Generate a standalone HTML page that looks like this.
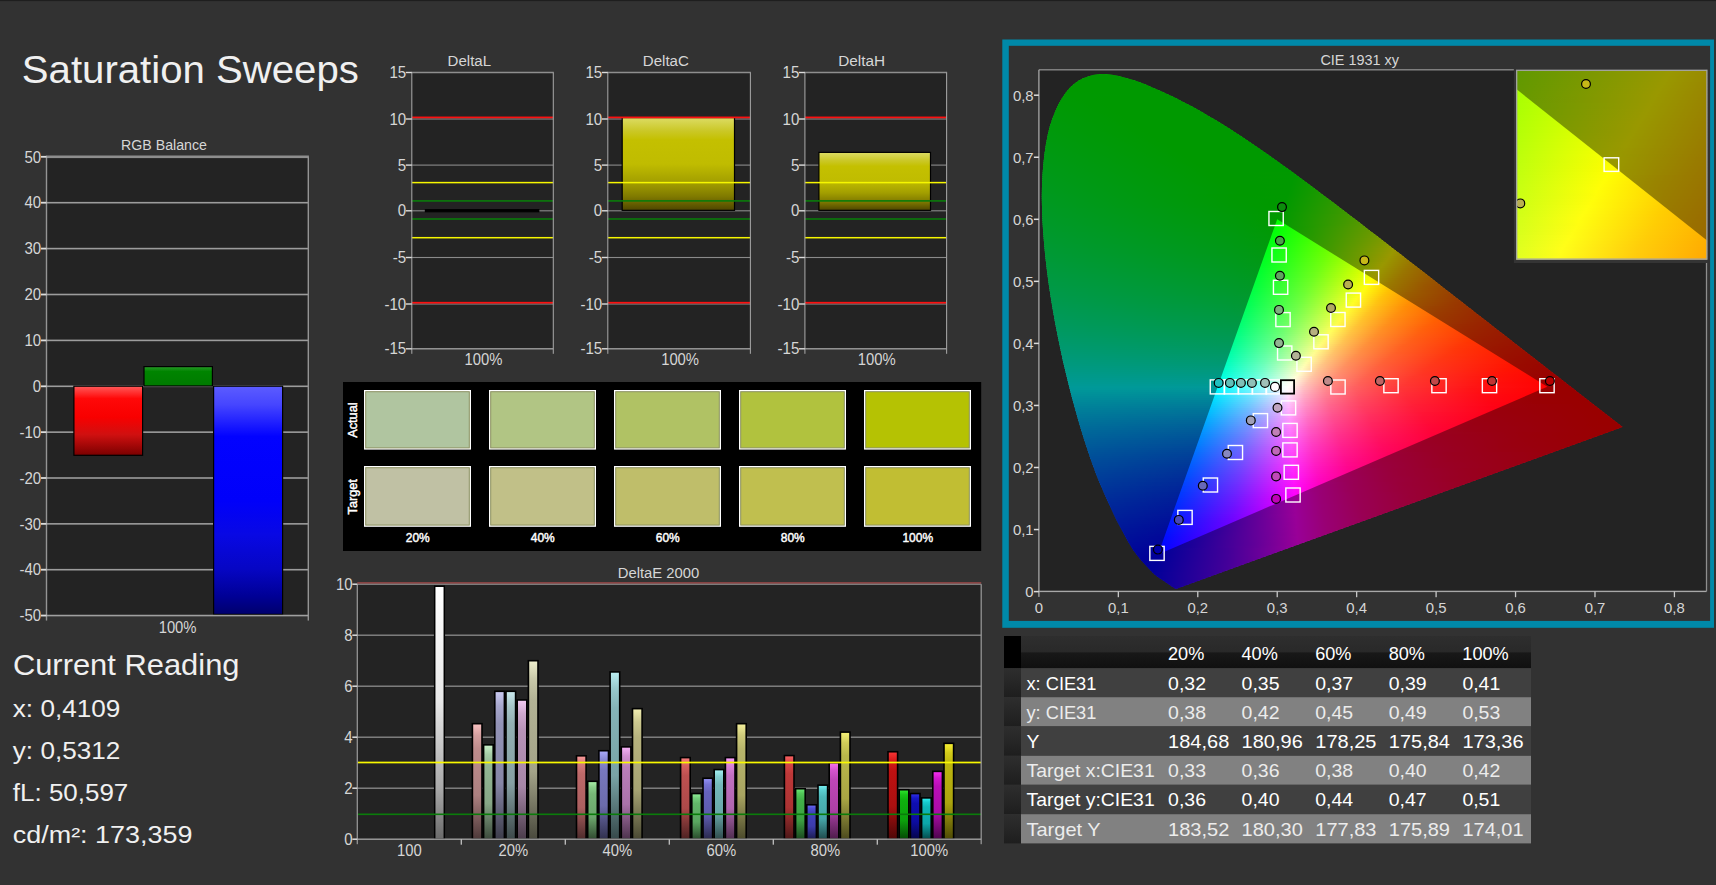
<!DOCTYPE html>
<html><head><meta charset="utf-8"><title>Saturation Sweeps</title>
<style>html,body{margin:0;padding:0;background:#323232;overflow:hidden}svg{display:block}text{font-family:"Liberation Sans",sans-serif}</style>
</head><body>
<svg width="1716" height="885" viewBox="0 0 1716 885">
<defs>
<linearGradient id="gR" x1="0" y1="0" x2="0" y2="1"><stop offset="0" stop-color="#ff5a5a"/><stop offset="0.18" stop-color="#ff0808"/><stop offset="0.45" stop-color="#f80000"/><stop offset="0.7" stop-color="#d01010"/><stop offset="1" stop-color="#7a0000"/></linearGradient>
<linearGradient id="gG" x1="0" y1="0" x2="0" y2="1"><stop offset="0" stop-color="#2a9a2a"/><stop offset="0.25" stop-color="#008400"/><stop offset="1" stop-color="#007a00"/></linearGradient>
<linearGradient id="gB" x1="0" y1="0" x2="0" y2="1"><stop offset="0" stop-color="#5c5cff"/><stop offset="0.08" stop-color="#4646ff"/><stop offset="0.22" stop-color="#0202ff"/><stop offset="0.5" stop-color="#0000fa"/><stop offset="0.65" stop-color="#0808e4"/><stop offset="0.8" stop-color="#0606c4"/><stop offset="0.92" stop-color="#000096"/><stop offset="1" stop-color="#00006c"/></linearGradient>
<linearGradient id="gY" x1="0" y1="0" x2="0" y2="1"><stop offset="0" stop-color="#dcdc64"/><stop offset="0.14" stop-color="#cbc828"/><stop offset="0.24" stop-color="#c4c000"/><stop offset="0.5" stop-color="#c0bc00"/><stop offset="0.7" stop-color="#a29e00"/><stop offset="0.85" stop-color="#807a00"/><stop offset="1" stop-color="#4e4600"/></linearGradient>
<linearGradient id="gW" x1="0" y1="0" x2="0" y2="1"><stop offset="0" stop-color="#ffffff"/><stop offset="0.45" stop-color="#e8e8e8"/><stop offset="0.8" stop-color="#a8a8a8"/><stop offset="1" stop-color="#6a6a6a"/></linearGradient>
<linearGradient id="g20R" x1="0" y1="0" x2="0" y2="1"><stop offset="0" stop-color="#fac2c2"/><stop offset="0.1" stop-color="#d5a0a0"/><stop offset="0.22" stop-color="#be8c8c"/><stop offset="0.62" stop-color="#ac8080"/><stop offset="1" stop-color="#4d3939"/></linearGradient>
<linearGradient id="g20G" x1="0" y1="0" x2="0" y2="1"><stop offset="0" stop-color="#caf2ca"/><stop offset="0.1" stop-color="#a7cda7"/><stop offset="0.22" stop-color="#93b793"/><stop offset="0.62" stop-color="#86a686"/><stop offset="1" stop-color="#3c4a3c"/></linearGradient>
<linearGradient id="g20B" x1="0" y1="0" x2="0" y2="1"><stop offset="0" stop-color="#cacaf2"/><stop offset="0.1" stop-color="#a7a7cd"/><stop offset="0.22" stop-color="#9393b7"/><stop offset="0.62" stop-color="#8686a6"/><stop offset="1" stop-color="#3c3c4a"/></linearGradient>
<linearGradient id="g20C" x1="0" y1="0" x2="0" y2="1"><stop offset="0" stop-color="#caeaee"/><stop offset="0.1" stop-color="#a7c6c9"/><stop offset="0.22" stop-color="#93b0b3"/><stop offset="0.62" stop-color="#86a0a3"/><stop offset="1" stop-color="#3c4849"/></linearGradient>
<linearGradient id="g20M" x1="0" y1="0" x2="0" y2="1"><stop offset="0" stop-color="#f2caf2"/><stop offset="0.1" stop-color="#cda7cd"/><stop offset="0.22" stop-color="#b793b7"/><stop offset="0.62" stop-color="#a686a6"/><stop offset="1" stop-color="#4a3c4a"/></linearGradient>
<linearGradient id="g20Y" x1="0" y1="0" x2="0" y2="1"><stop offset="0" stop-color="#eeeecc"/><stop offset="0.1" stop-color="#c9c9a9"/><stop offset="0.22" stop-color="#b3b395"/><stop offset="0.62" stop-color="#a3a388"/><stop offset="1" stop-color="#49493d"/></linearGradient>
<linearGradient id="g40R" x1="0" y1="0" x2="0" y2="1"><stop offset="0" stop-color="#fa9a9a"/><stop offset="0.1" stop-color="#d57a7a"/><stop offset="0.22" stop-color="#be6969"/><stop offset="0.62" stop-color="#ac6060"/><stop offset="1" stop-color="#4d2b2b"/></linearGradient>
<linearGradient id="g40G" x1="0" y1="0" x2="0" y2="1"><stop offset="0" stop-color="#aaf2aa"/><stop offset="0.1" stop-color="#89cd89"/><stop offset="0.22" stop-color="#77b777"/><stop offset="0.62" stop-color="#6ca66c"/><stop offset="1" stop-color="#304a30"/></linearGradient>
<linearGradient id="g40B" x1="0" y1="0" x2="0" y2="1"><stop offset="0" stop-color="#aaaafa"/><stop offset="0.1" stop-color="#8989d5"/><stop offset="0.22" stop-color="#7777be"/><stop offset="0.62" stop-color="#6c6cac"/><stop offset="1" stop-color="#30304d"/></linearGradient>
<linearGradient id="g40C" x1="0" y1="0" x2="0" y2="1"><stop offset="0" stop-color="#baeef2"/><stop offset="0.1" stop-color="#98c9cd"/><stop offset="0.22" stop-color="#85b3b7"/><stop offset="0.62" stop-color="#79a3a6"/><stop offset="1" stop-color="#36494a"/></linearGradient>
<linearGradient id="g40M" x1="0" y1="0" x2="0" y2="1"><stop offset="0" stop-color="#f6b2f6"/><stop offset="0.1" stop-color="#d190d1"/><stop offset="0.22" stop-color="#ba7eba"/><stop offset="0.62" stop-color="#a973a9"/><stop offset="1" stop-color="#4c334c"/></linearGradient>
<linearGradient id="g40Y" x1="0" y1="0" x2="0" y2="1"><stop offset="0" stop-color="#f2eeb2"/><stop offset="0.1" stop-color="#cdc990"/><stop offset="0.22" stop-color="#b7b37e"/><stop offset="0.62" stop-color="#a6a373"/><stop offset="1" stop-color="#4a4933"/></linearGradient>
<linearGradient id="g60R" x1="0" y1="0" x2="0" y2="1"><stop offset="0" stop-color="#fa7e7e"/><stop offset="0.1" stop-color="#d55f5f"/><stop offset="0.22" stop-color="#be5050"/><stop offset="0.62" stop-color="#ac4949"/><stop offset="1" stop-color="#4d2121"/></linearGradient>
<linearGradient id="g60G" x1="0" y1="0" x2="0" y2="1"><stop offset="0" stop-color="#92f29a"/><stop offset="0.1" stop-color="#72cd7a"/><stop offset="0.22" stop-color="#62b769"/><stop offset="0.62" stop-color="#59a660"/><stop offset="1" stop-color="#284a2b"/></linearGradient>
<linearGradient id="g60B" x1="0" y1="0" x2="0" y2="1"><stop offset="0" stop-color="#9694fa"/><stop offset="0.1" stop-color="#7674d5"/><stop offset="0.22" stop-color="#6664be"/><stop offset="0.62" stop-color="#5c5bac"/><stop offset="1" stop-color="#29294d"/></linearGradient>
<linearGradient id="g60C" x1="0" y1="0" x2="0" y2="1"><stop offset="0" stop-color="#a6f4f6"/><stop offset="0.1" stop-color="#85cfd1"/><stop offset="0.22" stop-color="#74b8ba"/><stop offset="0.62" stop-color="#69a8a9"/><stop offset="1" stop-color="#2f4b4c"/></linearGradient>
<linearGradient id="g60M" x1="0" y1="0" x2="0" y2="1"><stop offset="0" stop-color="#fea2fe"/><stop offset="0.1" stop-color="#d981d9"/><stop offset="0.22" stop-color="#c170c1"/><stop offset="0.62" stop-color="#b066b0"/><stop offset="1" stop-color="#4f2e4f"/></linearGradient>
<linearGradient id="g60Y" x1="0" y1="0" x2="0" y2="1"><stop offset="0" stop-color="#f4f09c"/><stop offset="0.1" stop-color="#cfcb7b"/><stop offset="0.22" stop-color="#b8b56b"/><stop offset="0.62" stop-color="#a8a461"/><stop offset="1" stop-color="#4b4a2b"/></linearGradient>
<linearGradient id="g80R" x1="0" y1="0" x2="0" y2="1"><stop offset="0" stop-color="#fa6262"/><stop offset="0.1" stop-color="#d54444"/><stop offset="0.22" stop-color="#be3838"/><stop offset="0.62" stop-color="#ac3333"/><stop offset="1" stop-color="#4d1717"/></linearGradient>
<linearGradient id="g80G" x1="0" y1="0" x2="0" y2="1"><stop offset="0" stop-color="#6eea76"/><stop offset="0.1" stop-color="#50c657"/><stop offset="0.22" stop-color="#42b049"/><stop offset="0.62" stop-color="#3ca043"/><stop offset="1" stop-color="#1b481e"/></linearGradient>
<linearGradient id="g80B" x1="0" y1="0" x2="0" y2="1"><stop offset="0" stop-color="#6e6efa"/><stop offset="0.1" stop-color="#5050d5"/><stop offset="0.22" stop-color="#4242be"/><stop offset="0.62" stop-color="#3c3cac"/><stop offset="1" stop-color="#1b1b4d"/></linearGradient>
<linearGradient id="g80C" x1="0" y1="0" x2="0" y2="1"><stop offset="0" stop-color="#7af2f4"/><stop offset="0.1" stop-color="#5bcdcf"/><stop offset="0.22" stop-color="#4db7b8"/><stop offset="0.62" stop-color="#46a6a8"/><stop offset="1" stop-color="#1f4a4b"/></linearGradient>
<linearGradient id="g80M" x1="0" y1="0" x2="0" y2="1"><stop offset="0" stop-color="#fa72f2"/><stop offset="0.1" stop-color="#d554cd"/><stop offset="0.22" stop-color="#be46b7"/><stop offset="0.62" stop-color="#ac40a6"/><stop offset="1" stop-color="#4d1c4a"/></linearGradient>
<linearGradient id="g80Y" x1="0" y1="0" x2="0" y2="1"><stop offset="0" stop-color="#f6f278"/><stop offset="0.1" stop-color="#d1cd59"/><stop offset="0.22" stop-color="#bab74b"/><stop offset="0.62" stop-color="#a9a644"/><stop offset="1" stop-color="#4c4a1e"/></linearGradient>
<linearGradient id="g100R" x1="0" y1="0" x2="0" y2="1"><stop offset="0" stop-color="#fa3636"/><stop offset="0.1" stop-color="#d51b1b"/><stop offset="0.22" stop-color="#be1111"/><stop offset="0.62" stop-color="#ac1010"/><stop offset="1" stop-color="#4d0707"/></linearGradient>
<linearGradient id="g100G" x1="0" y1="0" x2="0" y2="1"><stop offset="0" stop-color="#32ea32"/><stop offset="0.1" stop-color="#17c617"/><stop offset="0.22" stop-color="#0eb00e"/><stop offset="0.62" stop-color="#0ca00c"/><stop offset="1" stop-color="#054805"/></linearGradient>
<linearGradient id="g100B" x1="0" y1="0" x2="0" y2="1"><stop offset="0" stop-color="#3232ea"/><stop offset="0.1" stop-color="#1717c6"/><stop offset="0.22" stop-color="#0e0eb0"/><stop offset="0.62" stop-color="#0c0ca0"/><stop offset="1" stop-color="#050548"/></linearGradient>
<linearGradient id="g100C" x1="0" y1="0" x2="0" y2="1"><stop offset="0" stop-color="#32f2f4"/><stop offset="0.1" stop-color="#17cdcf"/><stop offset="0.22" stop-color="#0eb7b8"/><stop offset="0.62" stop-color="#0ca6a8"/><stop offset="1" stop-color="#054a4b"/></linearGradient>
<linearGradient id="g100M" x1="0" y1="0" x2="0" y2="1"><stop offset="0" stop-color="#f632f2"/><stop offset="0.1" stop-color="#d117cd"/><stop offset="0.22" stop-color="#ba0eb7"/><stop offset="0.62" stop-color="#a90ca6"/><stop offset="1" stop-color="#4c054a"/></linearGradient>
<linearGradient id="g100Y" x1="0" y1="0" x2="0" y2="1"><stop offset="0" stop-color="#f8f034"/><stop offset="0.1" stop-color="#d3cb19"/><stop offset="0.22" stop-color="#bcb50f"/><stop offset="0.62" stop-color="#aba40e"/><stop offset="1" stop-color="#4d4a06"/></linearGradient>
<linearGradient id="gH" x1="0" y1="0" x2="0" y2="1"><stop offset="0" stop-color="#2e2e2e"/><stop offset="0.5" stop-color="#292929"/><stop offset="0.52" stop-color="#181818"/><stop offset="1" stop-color="#101010"/></linearGradient>
<linearGradient id="gL" x1="0" y1="0" x2="0" y2="1"><stop offset="0" stop-color="#2e2e2e"/><stop offset="1" stop-color="#1e1e1e"/></linearGradient>
<clipPath id="cl"><path d="M1177.2 588.5 L1177.1 588.5 L1177.1 588.5 L1177.0 588.6 L1176.9 588.6 L1176.7 588.6 L1176.6 588.6 L1176.4 588.6 L1176.1 588.6 L1175.9 588.6 L1175.6 588.6 L1175.3 588.5 L1175.1 588.4 L1174.8 588.3 L1174.5 588.2 L1174.2 588.0 L1173.9 587.8 L1173.5 587.6 L1173.1 587.3 L1172.6 587.0 L1172.1 586.7 L1171.5 586.3 L1170.9 585.8 L1170.3 585.4 L1169.5 584.8 L1168.7 584.3 L1167.8 583.7 L1166.8 583.0 L1165.7 582.3 L1164.6 581.5 L1163.3 580.6 L1161.9 579.7 L1160.5 578.7 L1158.9 577.7 L1157.2 576.5 L1155.3 575.0 L1153.3 573.2 L1150.9 570.8 L1148.3 568.1 L1145.5 565.1 L1142.7 562.0 L1139.9 558.8 L1137.5 555.7 L1135.4 552.9 L1133.4 550.2 L1131.6 547.4 L1129.9 544.5 L1128.0 541.4 L1126.0 537.7 L1123.8 533.8 L1121.5 529.5 L1119.1 525.0 L1116.6 520.2 L1114.1 514.9 L1111.4 509.3 L1108.6 503.2 L1105.7 496.8 L1102.7 490.0 L1099.6 482.8 L1096.5 475.2 L1093.5 467.1 L1090.4 458.4 L1087.3 449.3 L1084.2 439.7 L1081.1 429.7 L1078.0 419.3 L1075.0 408.6 L1071.9 397.3 L1068.9 385.5 L1065.9 373.3 L1062.9 360.8 L1060.2 348.1 L1057.6 335.5 L1055.1 322.7 L1052.8 309.7 L1050.6 296.5 L1048.6 283.3 L1046.9 270.2 L1045.4 257.5 L1044.2 245.0 L1043.2 232.5 L1042.4 220.2 L1042.0 208.2 L1041.8 196.5 L1042.0 185.3 L1042.5 174.4 L1043.4 163.8 L1044.5 153.6 L1046.0 143.8 L1047.8 134.6 L1049.9 126.1 L1052.5 118.2 L1055.4 110.9 L1058.6 104.1 L1062.1 97.9 L1065.9 92.5 L1069.8 87.8 L1074.0 83.9 L1078.4 80.7 L1083.1 78.3 L1088.0 76.5 L1092.9 75.1 L1097.9 74.2 L1103.0 73.9 L1108.2 74.2 L1113.5 75.0 L1118.9 76.1 L1124.3 77.5 L1129.6 78.9 L1135.0 80.6 L1140.4 82.5 L1145.8 84.6 L1151.2 86.9 L1156.5 89.2 L1161.8 91.5 L1167.0 93.9 L1172.1 96.3 L1177.2 98.8 L1182.2 101.4 L1187.2 104.0 L1192.1 106.6 L1197.1 109.3 L1202.0 112.1 L1206.8 114.9 L1211.6 117.7 L1216.5 120.6 L1221.3 123.6 L1226.1 126.5 L1230.9 129.6 L1235.7 132.7 L1240.5 135.8 L1245.3 139.0 L1250.1 142.2 L1254.8 145.4 L1259.6 148.7 L1264.3 152.0 L1269.0 155.3 L1273.8 158.7 L1278.5 162.0 L1283.2 165.4 L1287.9 168.8 L1292.7 172.3 L1297.4 175.8 L1302.1 179.3 L1306.9 182.8 L1311.6 186.3 L1316.3 189.8 L1321.1 193.4 L1325.8 196.9 L1330.6 200.5 L1335.3 204.1 L1340.0 207.7 L1344.7 211.3 L1349.5 214.9 L1354.2 218.5 L1358.9 222.1 L1363.6 225.8 L1368.3 229.4 L1373.0 233.0 L1377.7 236.6 L1382.4 240.2 L1387.0 243.8 L1391.7 247.4 L1396.3 251.0 L1401.0 254.6 L1405.6 258.2 L1410.1 261.7 L1414.7 265.3 L1419.3 268.8 L1423.8 272.3 L1428.3 275.8 L1432.8 279.3 L1437.2 282.8 L1441.6 286.2 L1446.0 289.7 L1450.4 293.1 L1454.7 296.4 L1459.0 299.8 L1463.3 303.1 L1467.5 306.4 L1471.7 309.6 L1475.8 312.9 L1479.9 316.0 L1484.0 319.2 L1488.0 322.3 L1492.0 325.4 L1495.8 328.4 L1499.7 331.4 L1503.4 334.3 L1507.2 337.2 L1510.8 340.1 L1514.4 342.9 L1517.8 345.6 L1521.2 348.2 L1524.5 350.8 L1527.7 353.3 L1530.9 355.7 L1534.0 358.1 L1537.0 360.5 L1540.0 362.8 L1542.9 365.0 L1545.7 367.3 L1548.5 369.4 L1551.2 371.5 L1553.8 373.6 L1556.3 375.4 L1558.5 377.1 L1560.6 378.8 L1562.8 380.5 L1565.1 382.3 L1567.8 384.4 L1570.9 386.8 L1574.4 389.5 L1578.1 392.4 L1581.7 395.2 L1585.2 397.9 L1588.2 400.3 L1590.9 402.4 L1593.3 404.2 L1595.5 405.9 L1597.5 407.5 L1599.4 409.0 L1601.3 410.4 L1603.0 411.8 L1604.6 413.0 L1606.1 414.2 L1607.5 415.3 L1608.8 416.3 L1610.1 417.3 L1611.2 418.2 L1612.3 419.0 L1613.2 419.7 L1614.1 420.4 L1614.9 421.0 L1615.6 421.6 L1616.3 422.1 L1616.9 422.6 L1617.4 423.0 L1617.9 423.3 L1618.3 423.7 L1618.8 424.1 L1619.3 424.5 L1619.8 424.8 L1620.3 425.2 L1620.8 425.6 L1621.2 425.9 L1621.5 426.2 L1621.8 426.4 L1622.0 426.6 L1622.2 426.7 L1622.3 426.8 L1622.5 426.9 L1622.5 427.0Z"/></clipPath>
<linearGradient id="c0" gradientUnits="userSpaceOnUse" x1="1099.11" x2="1107.4"><stop offset="0" stop-color="#0f0"/><stop offset="1" stop-color="#0f0"/></linearGradient>
<linearGradient id="c1" gradientUnits="userSpaceOnUse" x1="1087.72" x2="1120.37"><stop offset="0" stop-color="#0f0"/><stop offset="1" stop-color="#0f0"/></linearGradient>
<linearGradient id="c2" gradientUnits="userSpaceOnUse" x1="1081.92" x2="1128.15"><stop offset="0" stop-color="#0f0"/><stop offset="1" stop-color="#0f0"/></linearGradient>
<linearGradient id="c3" gradientUnits="userSpaceOnUse" x1="1077.84" x2="1135.13"><stop offset="0" stop-color="#0f0"/><stop offset="1" stop-color="#0f0"/></linearGradient>
<linearGradient id="c4" gradientUnits="userSpaceOnUse" x1="1074.62" x2="1141.06"><stop offset="0" stop-color="#0f0"/><stop offset="1" stop-color="#0f0"/></linearGradient>
<linearGradient id="c5" gradientUnits="userSpaceOnUse" x1="1071.81" x2="1146.28"><stop offset="0" stop-color="#0f0"/><stop offset="1" stop-color="#0f0"/></linearGradient>
<linearGradient id="c6" gradientUnits="userSpaceOnUse" x1="1069.68" x2="1151.13"><stop offset="0" stop-color="#0f0"/><stop offset="1" stop-color="#0f0"/></linearGradient>
<linearGradient id="c7" gradientUnits="userSpaceOnUse" x1="1067.6" x2="1155.78"><stop offset="0" stop-color="#0f0"/><stop offset="1" stop-color="#0f0"/></linearGradient>
<linearGradient id="c8" gradientUnits="userSpaceOnUse" x1="1065.93" x2="1160.32"><stop offset="0" stop-color="#0f0"/><stop offset="1" stop-color="#0f0"/></linearGradient>
<linearGradient id="c9" gradientUnits="userSpaceOnUse" x1="1064.27" x2="1164.81"><stop offset="0" stop-color="#00ff01"/><stop offset="1" stop-color="#0f0"/></linearGradient>
<linearGradient id="c10" gradientUnits="userSpaceOnUse" x1="1062.82" x2="1169.21"><stop offset="0" stop-color="#00ff02"/><stop offset="1" stop-color="#0f0"/></linearGradient>
<linearGradient id="c11" gradientUnits="userSpaceOnUse" x1="1061.45" x2="1173.43"><stop offset="0" stop-color="#00ff03"/><stop offset="1" stop-color="#0f0"/></linearGradient>
<linearGradient id="c12" gradientUnits="userSpaceOnUse" x1="1060.09" x2="1177.52"><stop offset="0" stop-color="#00ff04"/><stop offset=".547" stop-color="#0f0"/><stop offset="1" stop-color="#0f0"/></linearGradient>
<linearGradient id="c13" gradientUnits="userSpaceOnUse" x1="1058.94" x2="1181.5"><stop offset="0" stop-color="#00ff05"/><stop offset=".459" stop-color="#0f0"/><stop offset="1" stop-color="#0f0"/></linearGradient>
<linearGradient id="c14" gradientUnits="userSpaceOnUse" x1="1057.8" x2="1185.4"><stop offset="0" stop-color="#00ff06"/><stop offset=".433" stop-color="#0f0"/><stop offset="1" stop-color="#0f0"/></linearGradient>
<linearGradient id="c15" gradientUnits="userSpaceOnUse" x1="1056.65" x2="1189.23"><stop offset="0" stop-color="#00ff07"/><stop offset=".424" stop-color="#0f0"/><stop offset="1" stop-color="#0f0"/></linearGradient>
<linearGradient id="c16" gradientUnits="userSpaceOnUse" x1="1055.69" x2="1192.98"><stop offset="0" stop-color="#00ff08"/><stop offset=".423" stop-color="#0f0"/><stop offset="1" stop-color="#0f0"/></linearGradient>
<linearGradient id="c17" gradientUnits="userSpaceOnUse" x1="1054.74" x2="1196.67"><stop offset="0" stop-color="#00ff09"/><stop offset=".433" stop-color="#0f0"/><stop offset="1" stop-color="#0f0"/></linearGradient>
<linearGradient id="c18" gradientUnits="userSpaceOnUse" x1="1053.78" x2="1200.29"><stop offset="0" stop-color="#00ff0a"/><stop offset=".438" stop-color="#0f0"/><stop offset="1" stop-color="#0f0"/></linearGradient>
<linearGradient id="c19" gradientUnits="userSpaceOnUse" x1="1052.92" x2="1203.85"><stop offset="0" stop-color="#00ff0b"/><stop offset=".453" stop-color="#0f0"/><stop offset="1" stop-color="#0f0"/></linearGradient>
<linearGradient id="c20" gradientUnits="userSpaceOnUse" x1="1052.13" x2="1207.32"><stop offset="0" stop-color="#00ff0c"/><stop offset=".458" stop-color="#0f0"/><stop offset="1" stop-color="#0f0"/></linearGradient>
<linearGradient id="c21" gradientUnits="userSpaceOnUse" x1="1051.34" x2="1210.74"><stop offset="0" stop-color="#00ff0d"/><stop offset=".472" stop-color="#0f0"/><stop offset="1" stop-color="#0f0"/></linearGradient>
<linearGradient id="c22" gradientUnits="userSpaceOnUse" x1="1050.55" x2="1214.12"><stop offset="0" stop-color="#00ff0e"/><stop offset=".479" stop-color="#0f0"/><stop offset="1" stop-color="#0f0"/></linearGradient>
<linearGradient id="c23" gradientUnits="userSpaceOnUse" x1="1049.9" x2="1217.45"><stop offset="0" stop-color="#00ff0f"/><stop offset=".491" stop-color="#0f0"/><stop offset="1" stop-color="#0f0"/></linearGradient>
<linearGradient id="c24" gradientUnits="userSpaceOnUse" x1="1049.26" x2="1220.74"><stop offset="0" stop-color="#00ff10"/><stop offset=".497" stop-color="#0f0"/><stop offset="1" stop-color="#0f0"/></linearGradient>
<linearGradient id="c25" gradientUnits="userSpaceOnUse" x1="1048.61" x2="1224.01"><stop offset="0" stop-color="#0f1"/><stop offset=".509" stop-color="#0f0"/><stop offset="1" stop-color="#0f0"/></linearGradient>
<linearGradient id="c26" gradientUnits="userSpaceOnUse" x1="1047.97" x2="1227.23"><stop offset="0" stop-color="#00ff12"/><stop offset=".514" stop-color="#0f0"/><stop offset="1" stop-color="#0f0"/></linearGradient>
<linearGradient id="c27" gradientUnits="userSpaceOnUse" x1="1047.46" x2="1230.41"><stop offset="0" stop-color="#00ff13"/><stop offset=".527" stop-color="#0f0"/><stop offset="1" stop-color="#0f0"/></linearGradient>
<linearGradient id="c28" gradientUnits="userSpaceOnUse" x1="1046.96" x2="1233.55"><stop offset="0" stop-color="#00ff13"/><stop offset=".532" stop-color="#0f0"/><stop offset="1" stop-color="#0f0"/></linearGradient>
<linearGradient id="c29" gradientUnits="userSpaceOnUse" x1="1046.45" x2="1236.66"><stop offset="0" stop-color="#00ff14"/><stop offset=".542" stop-color="#0f0"/><stop offset="1" stop-color="#0f0"/></linearGradient>
<linearGradient id="c30" gradientUnits="userSpaceOnUse" x1="1045.95" x2="1239.73"><stop offset="0" stop-color="#00ff15"/><stop offset=".554" stop-color="#0f0"/><stop offset="1" stop-color="#0f0"/></linearGradient>
<linearGradient id="c31" gradientUnits="userSpaceOnUse" x1="1045.52" x2="1242.79"><stop offset="0" stop-color="#00ff16"/><stop offset=".558" stop-color="#0f0"/><stop offset="1" stop-color="#0f0"/></linearGradient>
<linearGradient id="c32" gradientUnits="userSpaceOnUse" x1="1045.13" x2="1245.81"><stop offset="0" stop-color="#00ff17"/><stop offset=".565" stop-color="#0f0"/><stop offset="1" stop-color="#0f0"/></linearGradient>
<linearGradient id="c33" gradientUnits="userSpaceOnUse" x1="1044.74" x2="1248.81"><stop offset="0" stop-color="#00ff18"/><stop offset=".574" stop-color="#0f0"/><stop offset="1" stop-color="#0f0"/></linearGradient>
<linearGradient id="c34" gradientUnits="userSpaceOnUse" x1="1044.35" x2="1251.79"><stop offset="0" stop-color="#00ff19"/><stop offset=".58" stop-color="#0f0"/><stop offset="1" stop-color="#0f0"/></linearGradient>
<linearGradient id="c35" gradientUnits="userSpaceOnUse" x1="1043.96" x2="1254.75"><stop offset="0" stop-color="#00ff1a"/><stop offset=".59" stop-color="#0f0"/><stop offset="1" stop-color="#0f0"/></linearGradient>
<linearGradient id="c36" gradientUnits="userSpaceOnUse" x1="1043.66" x2="1257.68"><stop offset="0" stop-color="#00ff1b"/><stop offset=".598" stop-color="#0f0"/><stop offset="1" stop-color="#0f0"/></linearGradient>
<linearGradient id="c37" gradientUnits="userSpaceOnUse" x1="1043.36" x2="1260.59"><stop offset="0" stop-color="#00ff1c"/><stop offset=".604" stop-color="#0f0"/><stop offset="1" stop-color="#0f0"/></linearGradient>
<linearGradient id="c38" gradientUnits="userSpaceOnUse" x1="1043.06" x2="1263.47"><stop offset="0" stop-color="#00ff1d"/><stop offset=".609" stop-color="#0f0"/><stop offset="1" stop-color="#0f0"/></linearGradient>
<linearGradient id="c39" gradientUnits="userSpaceOnUse" x1="1042.75" x2="1266.34"><stop offset="0" stop-color="#00ff1e"/><stop offset=".614" stop-color="#0f0"/><stop offset="1" stop-color="#0f0"/></linearGradient>
<linearGradient id="c40" gradientUnits="userSpaceOnUse" x1="1042.47" x2="1269.18"><stop offset="0" stop-color="#00ff1f"/><stop offset=".624" stop-color="#0f0"/><stop offset="1" stop-color="#0f0"/></linearGradient>
<linearGradient id="c41" gradientUnits="userSpaceOnUse" x1="1042.24" x2="1272.02"><stop offset="0" stop-color="#00ff20"/><stop offset=".629" stop-color="#0f0"/><stop offset="1" stop-color="#0f0"/></linearGradient>
<linearGradient id="c42" gradientUnits="userSpaceOnUse" x1="1042.02" x2="1274.84"><stop offset="0" stop-color="#00ff21"/><stop offset=".634" stop-color="#0f0"/><stop offset="1" stop-color="#0f0"/></linearGradient>
<linearGradient id="c43" gradientUnits="userSpaceOnUse" x1="1041.79" x2="1277.65"><stop offset="0" stop-color="#0f2"/><stop offset=".643" stop-color="#0f0"/><stop offset="1" stop-color="#0f0"/></linearGradient>
<linearGradient id="c44" gradientUnits="userSpaceOnUse" x1="1041.57" x2="1280.45"><stop offset="0" stop-color="#00ff23"/><stop offset=".647" stop-color="#0f0"/><stop offset="1" stop-color="#0f0"/></linearGradient>
<linearGradient id="c45" gradientUnits="userSpaceOnUse" x1="1041.35" x2="1283.24"><stop offset="0" stop-color="#00ff24"/><stop offset=".651" stop-color="#0f0"/><stop offset="1" stop-color="#0f0"/></linearGradient>
<linearGradient id="c46" gradientUnits="userSpaceOnUse" x1="1041.19" x2="1286.02"><stop offset="0" stop-color="#00ff25"/><stop offset=".66" stop-color="#0f0"/><stop offset="1" stop-color="#0f0"/></linearGradient>
<linearGradient id="c47" gradientUnits="userSpaceOnUse" x1="1041.03" x2="1288.78"><stop offset="0" stop-color="#00ff26"/><stop offset=".664" stop-color="#0f0"/><stop offset="1" stop-color="#0f0"/></linearGradient>
<linearGradient id="c48" gradientUnits="userSpaceOnUse" x1="1040.88" x2="1291.52"><stop offset="0" stop-color="#00ff27"/><stop offset=".672" stop-color="#0f0"/><stop offset="1" stop-color="#0f0"/></linearGradient>
<linearGradient id="c49" gradientUnits="userSpaceOnUse" x1="1040.72" x2="1294.26"><stop offset="0" stop-color="#00ff28"/><stop offset=".676" stop-color="#0f0"/><stop offset="1" stop-color="#0f0"/></linearGradient>
<linearGradient id="c50" gradientUnits="userSpaceOnUse" x1="1040.56" x2="1296.99"><stop offset="0" stop-color="#00ff29"/><stop offset=".68" stop-color="#0f0"/><stop offset=".996" stop-color="#03ff00"/><stop offset="1" stop-color="#04ff00"/></linearGradient>
<linearGradient id="c51" gradientUnits="userSpaceOnUse" x1="1040.45" x2="1299.71"><stop offset="0" stop-color="#00ff2a"/><stop offset=".687" stop-color="#0f0"/><stop offset=".981" stop-color="#02ff00"/><stop offset="1" stop-color="#09ff00"/></linearGradient>
<linearGradient id="c52" gradientUnits="userSpaceOnUse" x1="1040.35" x2="1302.42"><stop offset="0" stop-color="#00ff2b"/><stop offset=".691" stop-color="#0f0"/><stop offset=".969" stop-color="#03ff00"/><stop offset="1" stop-color="#0dff00"/></linearGradient>
<linearGradient id="c53" gradientUnits="userSpaceOnUse" x1="1040.26" x2="1305.13"><stop offset="0" stop-color="#00ff2c"/><stop offset=".697" stop-color="#0f0"/><stop offset=".955" stop-color="#02ff00"/><stop offset="1" stop-color="#12ff00"/></linearGradient>
<linearGradient id="c54" gradientUnits="userSpaceOnUse" x1="1040.16" x2="1307.83"><stop offset="0" stop-color="#00ff2d"/><stop offset=".7" stop-color="#0f0"/><stop offset=".944" stop-color="#03ff00"/><stop offset="1" stop-color="#16ff00"/></linearGradient>
<linearGradient id="c55" gradientUnits="userSpaceOnUse" x1="1040.06" x2="1310.53"><stop offset="0" stop-color="#00ff2e"/><stop offset=".704" stop-color="#0f0"/><stop offset=".933" stop-color="#03ff00"/><stop offset="1" stop-color="#1bff00"/></linearGradient>
<linearGradient id="c56" gradientUnits="userSpaceOnUse" x1="1039.99" x2="1313.22"><stop offset="0" stop-color="#00ff2f"/><stop offset=".711" stop-color="#0f0"/><stop offset=".919" stop-color="#02ff00"/><stop offset="1" stop-color="#20ff00"/></linearGradient>
<linearGradient id="c57" gradientUnits="userSpaceOnUse" x1="1039.95" x2="1315.91"><stop offset="0" stop-color="#00ff30"/><stop offset=".716" stop-color="#0f0"/><stop offset=".909" stop-color="#03ff00"/><stop offset="1" stop-color="#25ff00"/></linearGradient>
<linearGradient id="c58" gradientUnits="userSpaceOnUse" x1="1039.92" x2="1318.58"><stop offset="0" stop-color="#00ff31"/><stop offset=".719" stop-color="#0f0"/><stop offset=".896" stop-color="#02ff00"/><stop offset="1" stop-color="#2aff00"/></linearGradient>
<linearGradient id="c59" gradientUnits="userSpaceOnUse" x1="1039.89" x2="1321.25"><stop offset="0" stop-color="#00ff32"/><stop offset=".722" stop-color="#0f0"/><stop offset=".886" stop-color="#03ff00"/><stop offset="1" stop-color="#2fff00"/></linearGradient>
<linearGradient id="c60" gradientUnits="userSpaceOnUse" x1="1039.85" x2="1323.92"><stop offset="0" stop-color="#0f3"/><stop offset=".729" stop-color="#0f0"/><stop offset=".877" stop-color="#03ff00"/><stop offset="1" stop-color="#34ff00"/></linearGradient>
<linearGradient id="c61" gradientUnits="userSpaceOnUse" x1="1039.82" x2="1326.57"><stop offset="0" stop-color="#00ff35"/><stop offset=".685" stop-color="#00ff01"/><stop offset=".864" stop-color="#02ff00"/><stop offset="1" stop-color="#3aff00"/></linearGradient>
<linearGradient id="c62" gradientUnits="userSpaceOnUse" x1="1039.82" x2="1329.23"><stop offset="0" stop-color="#00ff36"/><stop offset=".675" stop-color="#00ff02"/><stop offset=".855" stop-color="#03ff00"/><stop offset="1" stop-color="#3fff00"/></linearGradient>
<linearGradient id="c63" gradientUnits="userSpaceOnUse" x1="1039.83" x2="1331.88"><stop offset="0" stop-color="#00ff37"/><stop offset=".668" stop-color="#00ff03"/><stop offset=".842" stop-color="#02ff00"/><stop offset="1" stop-color="#45ff00"/></linearGradient>
<linearGradient id="c64" gradientUnits="userSpaceOnUse" x1="1039.86" x2="1334.52"><stop offset="0" stop-color="#00ff38"/><stop offset=".66" stop-color="#00ff05"/><stop offset=".799" stop-color="#0f0"/><stop offset=".837" stop-color="#04ff00"/><stop offset="1" stop-color="#4aff00"/></linearGradient>
<linearGradient id="c65" gradientUnits="userSpaceOnUse" x1="1039.89" x2="1337.16"><stop offset="0" stop-color="#00ff39"/><stop offset=".653" stop-color="#00ff06"/><stop offset=".771" stop-color="#0f0"/><stop offset=".825" stop-color="#03ff00"/><stop offset="1" stop-color="#50ff00"/></linearGradient>
<linearGradient id="c66" gradientUnits="userSpaceOnUse" x1="1039.91" x2="1339.79"><stop offset="0" stop-color="#00ff3a"/><stop offset=".645" stop-color="#00ff07"/><stop offset=".766" stop-color="#0f0"/><stop offset=".816" stop-color="#03ff00"/><stop offset="1" stop-color="#56ff00"/></linearGradient>
<linearGradient id="c67" gradientUnits="userSpaceOnUse" x1="1039.94" x2="1342.42"><stop offset="0" stop-color="#00ff3b"/><stop offset=".639" stop-color="#00ff08"/><stop offset=".762" stop-color="#0f0"/><stop offset=".808" stop-color="#04ff00"/><stop offset="1" stop-color="#5cff00"/></linearGradient>
<linearGradient id="c68" gradientUnits="userSpaceOnUse" x1="1039.97" x2="1345.04"><stop offset="0" stop-color="#00ff3d"/><stop offset=".633" stop-color="#00ff0a"/><stop offset=".764" stop-color="#0f0"/><stop offset=".8" stop-color="#04ff00"/><stop offset="1" stop-color="#62ff00"/></linearGradient>
<linearGradient id="c69" gradientUnits="userSpaceOnUse" x1="1040.04" x2="1347.66"><stop offset="0" stop-color="#00ff3e"/><stop offset=".625" stop-color="#00ff0b"/><stop offset=".765" stop-color="#0f0"/><stop offset=".795" stop-color="#06ff00"/><stop offset="1" stop-color="#69ff00"/></linearGradient>
<linearGradient id="c70" gradientUnits="userSpaceOnUse" x1="1040.12" x2="1350.27"><stop offset="0" stop-color="#00ff3f"/><stop offset=".619" stop-color="#00ff0c"/><stop offset=".768" stop-color="#0f0"/><stop offset=".955" stop-color="#57ff00"/><stop offset="1" stop-color="#6fff00"/></linearGradient>
<linearGradient id="c71" gradientUnits="userSpaceOnUse" x1="1040.2" x2="1352.88"><stop offset="0" stop-color="#00ff40"/><stop offset=".612" stop-color="#00ff0e"/><stop offset=".769" stop-color="#03ff00"/><stop offset=".987" stop-color="#6fff00"/><stop offset="1" stop-color="#76ff00"/></linearGradient>
<linearGradient id="c72" gradientUnits="userSpaceOnUse" x1="1040.28" x2="1355.48"><stop offset="0" stop-color="#00ff41"/><stop offset=".606" stop-color="#00ff0f"/><stop offset=".759" stop-color="#02ff00"/><stop offset=".975" stop-color="#6eff00"/><stop offset="1" stop-color="#7dff00"/></linearGradient>
<linearGradient id="c73" gradientUnits="userSpaceOnUse" x1="1040.36" x2="1358.08"><stop offset="0" stop-color="#00ff43"/><stop offset=".599" stop-color="#00ff10"/><stop offset=".751" stop-color="#02ff00"/><stop offset=".965" stop-color="#6fff00"/><stop offset="1" stop-color="#84ff00"/></linearGradient>
<linearGradient id="c74" gradientUnits="userSpaceOnUse" x1="1040.44" x2="1360.69"><stop offset="0" stop-color="#0f4"/><stop offset=".594" stop-color="#00ff12"/><stop offset=".744" stop-color="#03ff01"/><stop offset=".953" stop-color="#6fff00"/><stop offset="1" stop-color="#8bff00"/></linearGradient>
<linearGradient id="c75" gradientUnits="userSpaceOnUse" x1="1040.56" x2="1363.29"><stop offset="0" stop-color="#00ff45"/><stop offset=".587" stop-color="#00ff13"/><stop offset=".736" stop-color="#03ff02"/><stop offset=".944" stop-color="#70ff00"/><stop offset="1" stop-color="#92ff00"/></linearGradient>
<linearGradient id="c76" gradientUnits="userSpaceOnUse" x1="1040.68" x2="1365.89"><stop offset="0" stop-color="#00ff46"/><stop offset=".582" stop-color="#00ff15"/><stop offset=".726" stop-color="#02ff04"/><stop offset=".88" stop-color="#52ff00"/><stop offset="1" stop-color="#9f0"/></linearGradient>
<linearGradient id="c77" gradientUnits="userSpaceOnUse" x1="1040.8" x2="1368.5"><stop offset="0" stop-color="#00ff48"/><stop offset=".575" stop-color="#00ff16"/><stop offset=".719" stop-color="#03ff05"/><stop offset=".817" stop-color="#34ff00"/><stop offset="1" stop-color="#a1ff00"/></linearGradient>
<linearGradient id="c78" gradientUnits="userSpaceOnUse" x1="1040.93" x2="1371.1"><stop offset="0" stop-color="#00ff49"/><stop offset=".57" stop-color="#00ff18"/><stop offset=".709" stop-color="#02ff07"/><stop offset=".803" stop-color="#32ff00"/><stop offset=".988" stop-color="#a1ff00"/><stop offset="1" stop-color="#a9ff00"/></linearGradient>
<linearGradient id="c79" gradientUnits="userSpaceOnUse" x1="1041.05" x2="1373.7"><stop offset="0" stop-color="#00ff4a"/><stop offset=".563" stop-color="#00ff19"/><stop offset=".702" stop-color="#02ff09"/><stop offset=".801" stop-color="#36ff00"/><stop offset=".982" stop-color="#a5ff00"/><stop offset="1" stop-color="#b1ff00"/></linearGradient>
<linearGradient id="c80" gradientUnits="userSpaceOnUse" x1="1041.17" x2="1376.3"><stop offset="0" stop-color="#00ff4c"/><stop offset=".558" stop-color="#00ff1b"/><stop offset=".696" stop-color="#03ff0a"/><stop offset=".8" stop-color="#3aff00"/><stop offset=".979" stop-color="#abff00"/><stop offset="1" stop-color="#baff00"/></linearGradient>
<linearGradient id="c81" gradientUnits="userSpaceOnUse" x1="1041.32" x2="1378.9"><stop offset="0" stop-color="#00ff4d"/><stop offset=".552" stop-color="#00ff1c"/><stop offset=".688" stop-color="#03ff0c"/><stop offset=".804" stop-color="#42ff00"/><stop offset=".979" stop-color="#b3ff00"/><stop offset="1" stop-color="#c2ff00"/></linearGradient>
<linearGradient id="c82" gradientUnits="userSpaceOnUse" x1="1041.49" x2="1381.5"><stop offset="0" stop-color="#00ff4e"/><stop offset=".547" stop-color="#00ff1e"/><stop offset=".679" stop-color="#02ff0d"/><stop offset=".803" stop-color="#47ff00"/><stop offset=".974" stop-color="#b7ff00"/><stop offset="1" stop-color="#cbff00"/></linearGradient>
<linearGradient id="c83" gradientUnits="userSpaceOnUse" x1="1041.65" x2="1384.1"><stop offset="0" stop-color="#00ff50"/><stop offset=".541" stop-color="#00ff1f"/><stop offset=".673" stop-color="#03ff0f"/><stop offset=".807" stop-color="#4fff00"/><stop offset=".974" stop-color="#c0ff00"/><stop offset="1" stop-color="#d4ff00"/></linearGradient>
<linearGradient id="c84" gradientUnits="userSpaceOnUse" x1="1041.81" x2="1386.69"><stop offset="0" stop-color="#00ff51"/><stop offset=".538" stop-color="#00ff21"/><stop offset=".666" stop-color="#03ff11"/><stop offset=".808" stop-color="#5f0"/><stop offset=".971" stop-color="#c6ff00"/><stop offset="1" stop-color="#df0"/></linearGradient>
<linearGradient id="c85" gradientUnits="userSpaceOnUse" x1="1041.97" x2="1389.28"><stop offset="0" stop-color="#00ff52"/><stop offset=".533" stop-color="#0f2"/><stop offset=".657" stop-color="#02ff13"/><stop offset=".81" stop-color="#5cff00"/><stop offset=".968" stop-color="#cdff00"/><stop offset="1" stop-color="#e7ff00"/></linearGradient>
<linearGradient id="c86" gradientUnits="userSpaceOnUse" x1="1042.13" x2="1391.87"><stop offset="0" stop-color="#00ff54"/><stop offset=".527" stop-color="#00ff24"/><stop offset=".65" stop-color="#02ff14"/><stop offset=".814" stop-color="#65ff00"/><stop offset=".968" stop-color="#d6ff00"/><stop offset="1" stop-color="#f1ff00"/></linearGradient>
<linearGradient id="c87" gradientUnits="userSpaceOnUse" x1="1042.3" x2="1394.46"><stop offset="0" stop-color="#0f5"/><stop offset=".523" stop-color="#00ff25"/><stop offset=".645" stop-color="#03ff16"/><stop offset=".815" stop-color="#6cff00"/><stop offset=".966" stop-color="#deff00"/><stop offset="1" stop-color="#fbff00"/></linearGradient>
<linearGradient id="c88" gradientUnits="userSpaceOnUse" x1="1042.5" x2="1397.04"><stop offset="0" stop-color="#00ff57"/><stop offset=".517" stop-color="#00ff27"/><stop offset=".636" stop-color="#02ff18"/><stop offset=".811" stop-color="#6fff00"/><stop offset=".96" stop-color="#e3ff00"/><stop offset=".994" stop-color="#fffe00"/><stop offset="1" stop-color="#fff900"/></linearGradient>
<linearGradient id="c89" gradientUnits="userSpaceOnUse" x1="1042.69" x2="1399.62"><stop offset="0" stop-color="#00ff58"/><stop offset=".514" stop-color="#00ff29"/><stop offset=".629" stop-color="#02ff1a"/><stop offset=".801" stop-color="#6eff00"/><stop offset=".947" stop-color="#e0ff00"/><stop offset=".983" stop-color="#fffd00"/><stop offset="1" stop-color="#ffef00"/></linearGradient>
<linearGradient id="c90" gradientUnits="userSpaceOnUse" x1="1042.88" x2="1402.2"><stop offset="0" stop-color="#00ff59"/><stop offset=".507" stop-color="#00ff2a"/><stop offset=".624" stop-color="#03ff1c"/><stop offset=".794" stop-color="#70ff02"/><stop offset=".939" stop-color="#e3ff00"/><stop offset=".972" stop-color="#fffd00"/><stop offset="1" stop-color="#ffe600"/></linearGradient>
<linearGradient id="c91" gradientUnits="userSpaceOnUse" x1="1043.07" x2="1404.78"><stop offset="0" stop-color="#00ff5b"/><stop offset=".504" stop-color="#00ff2c"/><stop offset=".615" stop-color="#02ff1e"/><stop offset=".781" stop-color="#6dff04"/><stop offset=".864" stop-color="#adff00"/><stop offset=".961" stop-color="#fffd00"/><stop offset="1" stop-color="#fd0"/></linearGradient>
<linearGradient id="c92" gradientUnits="userSpaceOnUse" x1="1043.27" x2="1407.35"><stop offset="0" stop-color="#00ff5c"/><stop offset=".5" stop-color="#00ff2e"/><stop offset=".61" stop-color="#02ff1f"/><stop offset=".775" stop-color="#6fff06"/><stop offset=".843" stop-color="#a4ff00"/><stop offset=".951" stop-color="#fffc00"/><stop offset="1" stop-color="#ffd400"/></linearGradient>
<linearGradient id="c93" gradientUnits="userSpaceOnUse" x1="1043.47" x2="1409.92"><stop offset="0" stop-color="#00ff5e"/><stop offset=".495" stop-color="#00ff30"/><stop offset=".604" stop-color="#03ff21"/><stop offset=".768" stop-color="#70ff08"/><stop offset=".839" stop-color="#a8ff00"/><stop offset=".94" stop-color="#fffc00"/><stop offset="1" stop-color="#fc0"/></linearGradient>
<linearGradient id="c94" gradientUnits="userSpaceOnUse" x1="1043.7" x2="1412.5"><stop offset="0" stop-color="#00ff5f"/><stop offset=".492" stop-color="#00ff31"/><stop offset=".598" stop-color="#03ff23"/><stop offset=".758" stop-color="#6fff0a"/><stop offset=".837" stop-color="#aeff00"/><stop offset=".929" stop-color="#fffc00"/><stop offset="1" stop-color="#ffc400"/></linearGradient>
<linearGradient id="c95" gradientUnits="userSpaceOnUse" x1="1043.93" x2="1415.07"><stop offset="0" stop-color="#00ff61"/><stop offset=".488" stop-color="#0f3"/><stop offset=".59" stop-color="#02ff25"/><stop offset=".749" stop-color="#6fff0d"/><stop offset=".838" stop-color="#b7ff00"/><stop offset=".916" stop-color="#fffe00"/><stop offset=".989" stop-color="#ffc400"/><stop offset="1" stop-color="#ffbd00"/></linearGradient>
<linearGradient id="c96" gradientUnits="userSpaceOnUse" x1="1044.16" x2="1417.64"><stop offset="0" stop-color="#00ff63"/><stop offset=".483" stop-color="#00ff35"/><stop offset=".584" stop-color="#02ff27"/><stop offset=".74" stop-color="#6eff0f"/><stop offset=".842" stop-color="#c3ff00"/><stop offset=".906" stop-color="#fffe00"/><stop offset=".979" stop-color="#ffc300"/><stop offset="1" stop-color="#ffb600"/></linearGradient>
<linearGradient id="c97" gradientUnits="userSpaceOnUse" x1="1044.39" x2="1420.21"><stop offset="0" stop-color="#00ff64"/><stop offset=".48" stop-color="#00ff36"/><stop offset=".579" stop-color="#03ff29"/><stop offset=".733" stop-color="#6fff11"/><stop offset=".843" stop-color="#cdff00"/><stop offset=".896" stop-color="#fffe00"/><stop offset=".968" stop-color="#ffc300"/><stop offset="1" stop-color="#ffaf00"/></linearGradient>
<linearGradient id="c98" gradientUnits="userSpaceOnUse" x1="1044.62" x2="1422.78"><stop offset="0" stop-color="#0f6"/><stop offset=".474" stop-color="#00ff39"/><stop offset=".571" stop-color="#02ff2c"/><stop offset=".725" stop-color="#6fff13"/><stop offset=".844" stop-color="#d7ff00"/><stop offset=".886" stop-color="#fffd00"/><stop offset=".958" stop-color="#ffc200"/><stop offset="1" stop-color="#ffa800"/></linearGradient>
<linearGradient id="c99" gradientUnits="userSpaceOnUse" x1="1044.85" x2="1425.35"><stop offset="0" stop-color="#00ff67"/><stop offset=".471" stop-color="#00ff3a"/><stop offset=".566" stop-color="#02ff2e"/><stop offset=".716" stop-color="#6eff16"/><stop offset=".845" stop-color="#e1ff00"/><stop offset=".876" stop-color="#fffd00"/><stop offset=".945" stop-color="#ffc300"/><stop offset="1" stop-color="#ffa200"/></linearGradient>
<linearGradient id="c100" gradientUnits="userSpaceOnUse" x1="1045.11" x2="1427.92"><stop offset="0" stop-color="#00ff69"/><stop offset=".469" stop-color="#00ff3c"/><stop offset=".56" stop-color="#02ff30"/><stop offset=".709" stop-color="#70ff18"/><stop offset=".835" stop-color="#e1ff00"/><stop offset=".866" stop-color="#fffd00"/><stop offset=".935" stop-color="#ffc300"/><stop offset="1" stop-color="#ff9c00"/></linearGradient>
<linearGradient id="c101" gradientUnits="userSpaceOnUse" x1="1045.38" x2="1430.49"><stop offset="0" stop-color="#00ff6b"/><stop offset=".465" stop-color="#00ff3e"/><stop offset=".553" stop-color="#02ff32"/><stop offset=".699" stop-color="#6dff1b"/><stop offset=".823" stop-color="#dfff03"/><stop offset=".857" stop-color="#fffc00"/><stop offset=".925" stop-color="#ffc200"/><stop offset="1" stop-color="#ff9600"/></linearGradient>
<linearGradient id="c102" gradientUnits="userSpaceOnUse" x1="1045.65" x2="1433.06"><stop offset="0" stop-color="#00ff6c"/><stop offset=".46" stop-color="#00ff40"/><stop offset=".548" stop-color="#02ff34"/><stop offset=".693" stop-color="#6eff1d"/><stop offset=".817" stop-color="#e1ff05"/><stop offset=".848" stop-color="#fffc00"/><stop offset=".915" stop-color="#ffc200"/><stop offset="1" stop-color="#ff9000"/></linearGradient>
<linearGradient id="c103" gradientUnits="userSpaceOnUse" x1="1045.92" x2="1435.62"><stop offset="0" stop-color="#00ff6e"/><stop offset=".458" stop-color="#00ff42"/><stop offset=".542" stop-color="#02ff36"/><stop offset=".686" stop-color="#70ff1f"/><stop offset=".807" stop-color="#e1ff08"/><stop offset=".838" stop-color="#fffc01"/><stop offset=".905" stop-color="#ffc100"/><stop offset=".997" stop-color="#ff8c00"/><stop offset="1" stop-color="#ff8b00"/></linearGradient>
<linearGradient id="c104" gradientUnits="userSpaceOnUse" x1="1046.18" x2="1438.19"><stop offset="0" stop-color="#00ff70"/><stop offset=".454" stop-color="#0f4"/><stop offset=".536" stop-color="#02ff39"/><stop offset=".676" stop-color="#6dff22"/><stop offset=".796" stop-color="#dfff0b"/><stop offset=".827" stop-color="#fffe04"/><stop offset=".89" stop-color="#ffc400"/><stop offset=".98" stop-color="#ff8f00"/><stop offset="1" stop-color="#ff8600"/></linearGradient>
<linearGradient id="c105" gradientUnits="userSpaceOnUse" x1="1046.45" x2="1440.76"><stop offset="0" stop-color="#00ff72"/><stop offset=".449" stop-color="#00ff46"/><stop offset=".53" stop-color="#02ff3b"/><stop offset=".67" stop-color="#6fff25"/><stop offset=".789" stop-color="#e2ff0d"/><stop offset=".817" stop-color="#fffe07"/><stop offset=".868" stop-color="#ffcd00"/><stop offset=".952" stop-color="#ff9700"/><stop offset="1" stop-color="#ff8100"/></linearGradient>
<linearGradient id="c106" gradientUnits="userSpaceOnUse" x1="1046.73" x2="1443.33"><stop offset="0" stop-color="#00ff73"/><stop offset=".447" stop-color="#00ff48"/><stop offset=".525" stop-color="#02ff3d"/><stop offset=".662" stop-color="#6eff27"/><stop offset=".778" stop-color="#dfff10"/><stop offset=".808" stop-color="#fffd0a"/><stop offset=".866" stop-color="#ffc700"/><stop offset=".952" stop-color="#ff9100"/><stop offset="1" stop-color="#ff7c00"/></linearGradient>
<linearGradient id="c107" gradientUnits="userSpaceOnUse" x1="1047.04" x2="1445.89"><stop offset="0" stop-color="#00ff75"/><stop offset=".445" stop-color="#00ff4a"/><stop offset=".52" stop-color="#02ff3f"/><stop offset=".656" stop-color="#6fff2a"/><stop offset=".771" stop-color="#e2ff13"/><stop offset=".799" stop-color="#fffd0d"/><stop offset=".862" stop-color="#ffc300"/><stop offset=".947" stop-color="#ff8e00"/><stop offset="1" stop-color="#f70"/></linearGradient>
<linearGradient id="c108" gradientUnits="userSpaceOnUse" x1="1047.34" x2="1448.46"><stop offset="0" stop-color="#0f7"/><stop offset=".441" stop-color="#00ff4c"/><stop offset=".514" stop-color="#02ff42"/><stop offset=".648" stop-color="#6fff2c"/><stop offset=".763" stop-color="#e2ff16"/><stop offset=".791" stop-color="#fffc0f"/><stop offset=".853" stop-color="#ffc200"/><stop offset=".938" stop-color="#ff8e00"/><stop offset="1" stop-color="#ff7300"/></linearGradient>
<linearGradient id="c109" gradientUnits="userSpaceOnUse" x1="1047.64" x2="1451.03"><stop offset="0" stop-color="#00ff79"/><stop offset=".437" stop-color="#00ff4e"/><stop offset=".509" stop-color="#02ff44"/><stop offset=".64" stop-color="#6eff2f"/><stop offset=".752" stop-color="#dfff19"/><stop offset=".782" stop-color="#fffc12"/><stop offset=".844" stop-color="#ffc102"/><stop offset=".928" stop-color="#ff8d00"/><stop offset="1" stop-color="#ff6e00"/></linearGradient>
<linearGradient id="c110" gradientUnits="userSpaceOnUse" x1="1047.94" x2="1453.6"><stop offset="0" stop-color="#00ff7b"/><stop offset=".435" stop-color="#00ff50"/><stop offset=".504" stop-color="#02ff47"/><stop offset=".635" stop-color="#6fff32"/><stop offset=".746" stop-color="#e2ff1c"/><stop offset=".773" stop-color="#fffc15"/><stop offset=".832" stop-color="#ffc305"/><stop offset=".891" stop-color="#ff9b00"/><stop offset="1" stop-color="#ff6a00"/></linearGradient>
<linearGradient id="c111" gradientUnits="userSpaceOnUse" x1="1048.24" x2="1456.16"><stop offset="0" stop-color="#00ff7c"/><stop offset=".432" stop-color="#00ff52"/><stop offset=".499" stop-color="#03ff49"/><stop offset=".627" stop-color="#6eff35"/><stop offset=".737" stop-color="#e2ff1f"/><stop offset=".764" stop-color="#fffc18"/><stop offset=".823" stop-color="#ffc208"/><stop offset=".882" stop-color="#ff9a00"/><stop offset=".99" stop-color="#ff6900"/><stop offset="1" stop-color="#f60"/></linearGradient>
<linearGradient id="c112" gradientUnits="userSpaceOnUse" x1="1048.55" x2="1458.73"><stop offset="0" stop-color="#00ff7e"/><stop offset=".429" stop-color="#0f5"/><stop offset=".493" stop-color="#02ff4c"/><stop offset=".62" stop-color="#6eff38"/><stop offset=".727" stop-color="#e0ff22"/><stop offset=".754" stop-color="#fffe1c"/><stop offset=".812" stop-color="#ffc30b"/><stop offset=".883" stop-color="#ff9400"/><stop offset=".993" stop-color="#ff6400"/><stop offset="1" stop-color="#ff6200"/></linearGradient>
<linearGradient id="c113" gradientUnits="userSpaceOnUse" x1="1048.87" x2="1461.3"><stop offset="0" stop-color="#00ff80"/><stop offset=".427" stop-color="#00ff57"/><stop offset=".488" stop-color="#02ff4e"/><stop offset=".612" stop-color="#6dff3b"/><stop offset=".718" stop-color="#e0ff26"/><stop offset=".745" stop-color="#fffe20"/><stop offset=".803" stop-color="#ffc30d"/><stop offset=".881" stop-color="#ff8f00"/><stop offset=".995" stop-color="#ff6000"/><stop offset="1" stop-color="#ff5e00"/></linearGradient>
<linearGradient id="c114" gradientUnits="userSpaceOnUse" x1="1049.2" x2="1463.87"><stop offset="0" stop-color="#00ff82"/><stop offset=".423" stop-color="#00ff59"/><stop offset=".483" stop-color="#03ff51"/><stop offset=".606" stop-color="#6fff3d"/><stop offset=".71" stop-color="#dfff29"/><stop offset=".737" stop-color="#fffe23"/><stop offset=".792" stop-color="#ffc410"/><stop offset=".87" stop-color="#ff9000"/><stop offset=".981" stop-color="#ff6100"/><stop offset="1" stop-color="#ff5a00"/></linearGradient>
<linearGradient id="c115" gradientUnits="userSpaceOnUse" x1="1049.53" x2="1466.43"><stop offset="0" stop-color="#00ff84"/><stop offset=".421" stop-color="#00ff5b"/><stop offset=".478" stop-color="#03ff54"/><stop offset=".601" stop-color="#70ff40"/><stop offset=".704" stop-color="#e2ff2c"/><stop offset=".728" stop-color="#fffe26"/><stop offset=".784" stop-color="#ffc413"/><stop offset=".861" stop-color="#ff8f02"/><stop offset=".971" stop-color="#ff6000"/><stop offset="1" stop-color="#ff5700"/></linearGradient>
<linearGradient id="c116" gradientUnits="userSpaceOnUse" x1="1049.86" x2="1469"><stop offset="0" stop-color="#00ff86"/><stop offset=".418" stop-color="#00ff5e"/><stop offset=".473" stop-color="#02ff56"/><stop offset=".592" stop-color="#6eff44"/><stop offset=".695" stop-color="#e0ff2f"/><stop offset=".721" stop-color="#fffd29"/><stop offset=".776" stop-color="#ffc316"/><stop offset=".852" stop-color="#ff8e04"/><stop offset=".962" stop-color="#ff5f00"/><stop offset="1" stop-color="#ff5300"/></linearGradient>
<linearGradient id="c117" gradientUnits="userSpaceOnUse" x1="1050.2" x2="1471.57"><stop offset="0" stop-color="#0f8"/><stop offset=".416" stop-color="#00ff60"/><stop offset=".468" stop-color="#03ff59"/><stop offset=".587" stop-color="#6fff46"/><stop offset=".686" stop-color="#e0ff33"/><stop offset=".713" stop-color="#fffc2d"/><stop offset=".767" stop-color="#ffc218"/><stop offset=".843" stop-color="#ff8d06"/><stop offset=".91" stop-color="#ff6e00"/><stop offset="1" stop-color="#ff5000"/></linearGradient>
<linearGradient id="c118" gradientUnits="userSpaceOnUse" x1="1050.53" x2="1474.15"><stop offset="0" stop-color="#00ff8a"/><stop offset=".414" stop-color="#00ff63"/><stop offset=".463" stop-color="#03ff5c"/><stop offset=".579" stop-color="#6eff4a"/><stop offset=".678" stop-color="#e0ff36"/><stop offset=".704" stop-color="#fffc30"/><stop offset=".759" stop-color="#ffc21b"/><stop offset=".835" stop-color="#ff8d08"/><stop offset=".903" stop-color="#ff6c00"/><stop offset="1" stop-color="#ff4d00"/></linearGradient>
<linearGradient id="c119" gradientUnits="userSpaceOnUse" x1="1050.86" x2="1476.72"><stop offset="0" stop-color="#00ff8d"/><stop offset=".412" stop-color="#00ff65"/><stop offset=".459" stop-color="#03ff5f"/><stop offset=".574" stop-color="#70ff4d"/><stop offset=".673" stop-color="#e3ff39"/><stop offset=".696" stop-color="#fffc34"/><stop offset=".751" stop-color="#ffc11e"/><stop offset=".824" stop-color="#ff8d0a"/><stop offset=".901" stop-color="#ff6900"/><stop offset="1" stop-color="#ff4900"/></linearGradient>
<linearGradient id="c120" gradientUnits="userSpaceOnUse" x1="1051.22" x2="1479.3"><stop offset="0" stop-color="#00ff8f"/><stop offset=".409" stop-color="#00ff68"/><stop offset=".453" stop-color="#03ff62"/><stop offset=".568" stop-color="#70ff50"/><stop offset=".664" stop-color="#e1ff3d"/><stop offset=".687" stop-color="#fffe38"/><stop offset=".738" stop-color="#ffc422"/><stop offset=".811" stop-color="#ff8f0d"/><stop offset=".9" stop-color="#ff6500"/><stop offset="1" stop-color="#ff4600"/></linearGradient>
<linearGradient id="c121" gradientUnits="userSpaceOnUse" x1="1051.58" x2="1481.88"><stop offset="0" stop-color="#00ff91"/><stop offset=".407" stop-color="#00ff6a"/><stop offset=".449" stop-color="#03ff65"/><stop offset=".56" stop-color="#6fff53"/><stop offset=".656" stop-color="#e1ff41"/><stop offset=".679" stop-color="#fffe3c"/><stop offset=".73" stop-color="#ffc425"/><stop offset=".8" stop-color="#ff9010"/><stop offset=".9" stop-color="#ff6100"/><stop offset="1" stop-color="#ff4300"/></linearGradient>
<linearGradient id="c122" gradientUnits="userSpaceOnUse" x1="1051.93" x2="1484.46"><stop offset="0" stop-color="#00ff93"/><stop offset=".405" stop-color="#00ff6d"/><stop offset=".442" stop-color="#01ff68"/><stop offset=".553" stop-color="#6eff57"/><stop offset=".648" stop-color="#e0ff45"/><stop offset=".671" stop-color="#fffe3f"/><stop offset=".722" stop-color="#ffc327"/><stop offset=".792" stop-color="#ff8f12"/><stop offset=".891" stop-color="#ff6000"/><stop offset="1" stop-color="#ff4000"/></linearGradient>
<linearGradient id="c123" gradientUnits="userSpaceOnUse" x1="1052.29" x2="1487.04"><stop offset="0" stop-color="#00ff95"/><stop offset=".403" stop-color="#00ff6f"/><stop offset=".438" stop-color="#02ff6b"/><stop offset=".546" stop-color="#6dff5a"/><stop offset=".638" stop-color="#ddff49"/><stop offset=".664" stop-color="#fffe43"/><stop offset=".714" stop-color="#ffc32a"/><stop offset=".783" stop-color="#ff8e14"/><stop offset=".882" stop-color="#ff6001"/><stop offset="1" stop-color="#ff3d00"/></linearGradient>
<linearGradient id="c124" gradientUnits="userSpaceOnUse" x1="1052.65" x2="1489.62"><stop offset="0" stop-color="#00ff98"/><stop offset=".401" stop-color="#00ff72"/><stop offset=".433" stop-color="#02ff6e"/><stop offset=".541" stop-color="#6eff5d"/><stop offset=".633" stop-color="#e0ff4c"/><stop offset=".656" stop-color="#fffd47"/><stop offset=".706" stop-color="#ffc22d"/><stop offset=".775" stop-color="#ff8e17"/><stop offset=".874" stop-color="#ff5f02"/><stop offset="1" stop-color="#ff3a00"/></linearGradient>
<linearGradient id="c125" gradientUnits="userSpaceOnUse" x1="1053.01" x2="1492.2"><stop offset="0" stop-color="#00ff9a"/><stop offset=".401" stop-color="#00ff75"/><stop offset=".428" stop-color="#02ff71"/><stop offset=".535" stop-color="#6fff61"/><stop offset=".626" stop-color="#e1ff50"/><stop offset=".649" stop-color="#fffc4a"/><stop offset=".699" stop-color="#ffc130"/><stop offset=".768" stop-color="#ff8d19"/><stop offset=".866" stop-color="#ff5e04"/><stop offset=".975" stop-color="#ff3d00"/><stop offset="1" stop-color="#ff3800"/></linearGradient>
<linearGradient id="c126" gradientUnits="userSpaceOnUse" x1="1053.38" x2="1494.77"><stop offset="0" stop-color="#00ff9c"/><stop offset=".399" stop-color="#0f7"/><stop offset=".424" stop-color="#02ff74"/><stop offset=".528" stop-color="#6eff65"/><stop offset=".617" stop-color="#deff54"/><stop offset=".642" stop-color="#fffc4e"/><stop offset=".689" stop-color="#ffc334"/><stop offset=".755" stop-color="#ff8f1c"/><stop offset=".85" stop-color="#ff6007"/><stop offset=".925" stop-color="#ff4700"/><stop offset="1" stop-color="#ff3500"/></linearGradient>
<linearGradient id="c127" gradientUnits="userSpaceOnUse" x1="1053.76" x2="1497.35"><stop offset="0" stop-color="#00ff9f"/><stop offset=".397" stop-color="#00ff7a"/><stop offset=".42" stop-color="#02ff77"/><stop offset=".524" stop-color="#6fff68"/><stop offset=".612" stop-color="#e1ff58"/><stop offset=".632" stop-color="#ffff54"/><stop offset=".679" stop-color="#ffc438"/><stop offset=".745" stop-color="#ff8f1f"/><stop offset=".837" stop-color="#ff6109"/><stop offset=".921" stop-color="#ff4500"/><stop offset="1" stop-color="#ff3200"/></linearGradient>
<linearGradient id="c128" gradientUnits="userSpaceOnUse" x1="1054.14" x2="1499.91"><stop offset="0" stop-color="#00ffa1"/><stop offset=".398" stop-color="#00ff7d"/><stop offset=".416" stop-color="#03ff7b"/><stop offset=".517" stop-color="#6eff6c"/><stop offset=".604" stop-color="#e1ff5c"/><stop offset=".625" stop-color="#ffff58"/><stop offset=".672" stop-color="#ffc43b"/><stop offset=".737" stop-color="#ff8f22"/><stop offset=".829" stop-color="#ff600b"/><stop offset=".921" stop-color="#ff4200"/><stop offset="1" stop-color="#ff3000"/></linearGradient>
<linearGradient id="c129" gradientUnits="userSpaceOnUse" x1="1054.52" x2="1502.48"><stop offset="0" stop-color="#00ffa3"/><stop offset=".396" stop-color="#00ff80"/><stop offset=".412" stop-color="#03ff7e"/><stop offset=".512" stop-color="#70ff6f"/><stop offset=".597" stop-color="#e1ff60"/><stop offset=".617" stop-color="#ffff5c"/><stop offset=".662" stop-color="#ffc640"/><stop offset=".725" stop-color="#ff9126"/><stop offset=".814" stop-color="#ff620e"/><stop offset=".922" stop-color="#ff3f00"/><stop offset="1" stop-color="#ff2d00"/></linearGradient>
<linearGradient id="c130" gradientUnits="userSpaceOnUse" x1="1054.9" x2="1505.04"><stop offset="0" stop-color="#00ffa6"/><stop offset=".396" stop-color="#00ff83"/><stop offset=".409" stop-color="#05ff81"/><stop offset=".507" stop-color="#70ff73"/><stop offset=".591" stop-color="#e2ff64"/><stop offset=".611" stop-color="#fffd60"/><stop offset=".656" stop-color="#ffc443"/><stop offset=".718" stop-color="#ff9028"/><stop offset=".807" stop-color="#ff6110"/><stop offset=".922" stop-color="#ff3c00"/><stop offset="1" stop-color="#ff2b00"/></linearGradient>
<linearGradient id="c131" gradientUnits="userSpaceOnUse" x1="1055.28" x2="1507.6"><stop offset="0" stop-color="#00ffa8"/><stop offset=".394" stop-color="#00ff86"/><stop offset=".407" stop-color="#07ff84"/><stop offset=".504" stop-color="#74ff77"/><stop offset=".586" stop-color="#e5ff68"/><stop offset=".604" stop-color="#fffd64"/><stop offset=".648" stop-color="#ffc446"/><stop offset=".71" stop-color="#ff8f2a"/><stop offset=".799" stop-color="#ff6012"/><stop offset=".923" stop-color="#ff3900"/><stop offset="1" stop-color="#ff2900"/></linearGradient>
<linearGradient id="c132" gradientUnits="userSpaceOnUse" x1="1055.67" x2="1510.15"><stop offset="0" stop-color="#00ffab"/><stop offset=".394" stop-color="#00ff89"/><stop offset=".482" stop-color="#60ff7d"/><stop offset=".566" stop-color="#d1ff6f"/><stop offset=".597" stop-color="#fffd68"/><stop offset=".641" stop-color="#ffc349"/><stop offset=".703" stop-color="#ff8e2d"/><stop offset=".791" stop-color="#ff5f14"/><stop offset=".923" stop-color="#ff3600"/><stop offset="1" stop-color="#ff2600"/></linearGradient>
<linearGradient id="c133" gradientUnits="userSpaceOnUse" x1="1056.08" x2="1512.71"><stop offset="0" stop-color="#00ffae"/><stop offset=".393" stop-color="#01ff8c"/><stop offset=".487" stop-color="#6dff7f"/><stop offset=".568" stop-color="#deff72"/><stop offset=".59" stop-color="#fffd6d"/><stop offset=".634" stop-color="#ffc34d"/><stop offset=".695" stop-color="#ff8d30"/><stop offset=".783" stop-color="#ff5e16"/><stop offset=".914" stop-color="#ff3500"/><stop offset="1" stop-color="#ff2400"/></linearGradient>
<linearGradient id="c134" gradientUnits="userSpaceOnUse" x1="1056.48" x2="1515.27"><stop offset="0" stop-color="#00ffb0"/><stop offset=".389" stop-color="#02ff90"/><stop offset=".483" stop-color="#6eff83"/><stop offset=".563" stop-color="#e1ff76"/><stop offset=".583" stop-color="#fffd71"/><stop offset=".627" stop-color="#ffc250"/><stop offset=".686" stop-color="#ff8e33"/><stop offset=".771" stop-color="#ff5f19"/><stop offset=".9" stop-color="#ff3601"/><stop offset="1" stop-color="#f20"/></linearGradient>
<linearGradient id="c135" gradientUnits="userSpaceOnUse" x1="1056.89" x2="1517.83"><stop offset="0" stop-color="#00ffb3"/><stop offset=".385" stop-color="#02ff94"/><stop offset=".476" stop-color="#6dff88"/><stop offset=".554" stop-color="#deff7b"/><stop offset=".576" stop-color="#fffd76"/><stop offset=".62" stop-color="#ffc254"/><stop offset=".678" stop-color="#ff8d36"/><stop offset=".763" stop-color="#ff5f1b"/><stop offset=".891" stop-color="#ff3503"/><stop offset="1" stop-color="#ff2000"/></linearGradient>
<linearGradient id="c136" gradientUnits="userSpaceOnUse" x1="1057.3" x2="1520.39"><stop offset="0" stop-color="#00ffb6"/><stop offset=".38" stop-color="#02ff97"/><stop offset=".471" stop-color="#6dff8c"/><stop offset=".549" stop-color="#dfff80"/><stop offset=".568" stop-color="#fffe7c"/><stop offset=".609" stop-color="#ffc55a"/><stop offset=".665" stop-color="#ff913b"/><stop offset=".747" stop-color="#ff611f"/><stop offset=".87" stop-color="#ff3806"/><stop offset=".959" stop-color="#ff2500"/><stop offset="1" stop-color="#ff1e00"/></linearGradient>
<linearGradient id="c137" gradientUnits="userSpaceOnUse" x1="1057.71" x2="1522.96"><stop offset="0" stop-color="#00ffb9"/><stop offset=".376" stop-color="#02ff9b"/><stop offset=".467" stop-color="#6fff90"/><stop offset=".544" stop-color="#e3ff84"/><stop offset=".561" stop-color="#fffe81"/><stop offset=".602" stop-color="#ffc45e"/><stop offset=".658" stop-color="#ff903e"/><stop offset=".738" stop-color="#ff6121"/><stop offset=".858" stop-color="#ff3808"/><stop offset=".948" stop-color="#ff2400"/><stop offset="1" stop-color="#ff1c00"/></linearGradient>
<linearGradient id="c138" gradientUnits="userSpaceOnUse" x1="1058.12" x2="1525.53"><stop offset="0" stop-color="#0fb"/><stop offset=".373" stop-color="#03ff9f"/><stop offset=".46" stop-color="#6eff95"/><stop offset=".535" stop-color="#dfff8a"/><stop offset=".555" stop-color="#fffe86"/><stop offset=".595" stop-color="#ffc461"/><stop offset=".651" stop-color="#ff8f40"/><stop offset=".73" stop-color="#ff6123"/><stop offset=".85" stop-color="#ff3709"/><stop offset=".946" stop-color="#f20"/><stop offset="1" stop-color="#ff1a00"/></linearGradient>
<linearGradient id="c139" gradientUnits="userSpaceOnUse" x1="1058.56" x2="1528.1"><stop offset="0" stop-color="#00ffbe"/><stop offset=".367" stop-color="#01ffa4"/><stop offset=".454" stop-color="#6dff99"/><stop offset=".529" stop-color="#dfff8f"/><stop offset=".548" stop-color="#fffe8b"/><stop offset=".588" stop-color="#ffc365"/><stop offset=".644" stop-color="#ff8e43"/><stop offset=".723" stop-color="#ff6025"/><stop offset=".842" stop-color="#ff360b"/><stop offset=".947" stop-color="#ff2000"/><stop offset="1" stop-color="#ff1800"/></linearGradient>
<linearGradient id="c140" gradientUnits="userSpaceOnUse" x1="1059" x2="1530.67"><stop offset="0" stop-color="#00ffc1"/><stop offset=".363" stop-color="#01ffa8"/><stop offset=".45" stop-color="#6fff9e"/><stop offset=".522" stop-color="#dfff94"/><stop offset=".541" stop-color="#fffe90"/><stop offset=".582" stop-color="#ffc269"/><stop offset=".637" stop-color="#ff8e46"/><stop offset=".715" stop-color="#ff5f27"/><stop offset=".834" stop-color="#ff360c"/><stop offset=".947" stop-color="#ff1e00"/><stop offset="1" stop-color="#ff1600"/></linearGradient>
<linearGradient id="c141" gradientUnits="userSpaceOnUse" x1="1059.44" x2="1533.25"><stop offset="0" stop-color="#00ffc4"/><stop offset=".359" stop-color="#02ffac"/><stop offset=".444" stop-color="#6effa3"/><stop offset=".516" stop-color="#dfff99"/><stop offset=".535" stop-color="#fffd95"/><stop offset=".573" stop-color="#ffc46f"/><stop offset=".626" stop-color="#ff904b"/><stop offset=".702" stop-color="#ff612c"/><stop offset=".816" stop-color="#ff3810"/><stop offset=".945" stop-color="#ff1c00"/><stop offset="1" stop-color="#ff1400"/></linearGradient>
<linearGradient id="c142" gradientUnits="userSpaceOnUse" x1="1059.89" x2="1535.82"><stop offset="0" stop-color="#00ffc7"/><stop offset=".356" stop-color="#02ffb0"/><stop offset=".44" stop-color="#6fffa7"/><stop offset=".512" stop-color="#e2ff9e"/><stop offset=".528" stop-color="#fffd9a"/><stop offset=".566" stop-color="#ffc473"/><stop offset=".619" stop-color="#ff8f4e"/><stop offset=".695" stop-color="#ff602e"/><stop offset=".808" stop-color="#ff3711"/><stop offset=".945" stop-color="#ff1a00"/><stop offset="1" stop-color="#ff1200"/></linearGradient>
<linearGradient id="c143" gradientUnits="userSpaceOnUse" x1="1060.33" x2="1538.39"><stop offset="0" stop-color="#00ffca"/><stop offset=".351" stop-color="#02ffb4"/><stop offset=".433" stop-color="#6dffac"/><stop offset=".504" stop-color="#e0ffa4"/><stop offset=".521" stop-color="#ffffa1"/><stop offset=".559" stop-color="#ffc578"/><stop offset=".611" stop-color="#ff8f52"/><stop offset=".684" stop-color="#ff6131"/><stop offset=".795" stop-color="#ff3814"/><stop offset=".946" stop-color="#ff1800"/><stop offset="1" stop-color="#ff1000"/></linearGradient>
<linearGradient id="c144" gradientUnits="userSpaceOnUse" x1="1060.77" x2="1540.96"><stop offset="0" stop-color="#00ffce"/><stop offset=".348" stop-color="#02ffb9"/><stop offset=".429" stop-color="#6fffb1"/><stop offset=".498" stop-color="#e0ffa9"/><stop offset=".515" stop-color="#ffffa7"/><stop offset=".552" stop-color="#ffc47c"/><stop offset=".602" stop-color="#ff9056"/><stop offset=".675" stop-color="#ff6134"/><stop offset=".783" stop-color="#ff3816"/><stop offset=".944" stop-color="#ff1600"/><stop offset="1" stop-color="#ff0f00"/></linearGradient>
<linearGradient id="c145" gradientUnits="userSpaceOnUse" x1="1061.23" x2="1543.53"><stop offset="0" stop-color="#00ffd1"/><stop offset=".342" stop-color="#01ffbe"/><stop offset=".423" stop-color="#6effb6"/><stop offset=".492" stop-color="#e0ffaf"/><stop offset=".508" stop-color="#ffffac"/><stop offset=".546" stop-color="#ffc380"/><stop offset=".595" stop-color="#ff8f5a"/><stop offset=".668" stop-color="#ff6036"/><stop offset=".776" stop-color="#ff3718"/><stop offset=".942" stop-color="#ff1500"/><stop offset="1" stop-color="#ff0d00"/></linearGradient>
<linearGradient id="c146" gradientUnits="userSpaceOnUse" x1="1061.7" x2="1546.1"><stop offset="0" stop-color="#00ffd4"/><stop offset=".339" stop-color="#01ffc2"/><stop offset=".417" stop-color="#6dffbc"/><stop offset=".486" stop-color="#e0ffb5"/><stop offset=".502" stop-color="#fffeb2"/><stop offset=".537" stop-color="#ffc587"/><stop offset=".587" stop-color="#ff905e"/><stop offset=".657" stop-color="#ff613a"/><stop offset=".762" stop-color="#ff381b"/><stop offset=".932" stop-color="#ff1400"/><stop offset="1" stop-color="#ff0b00"/></linearGradient>
<linearGradient id="c147" gradientUnits="userSpaceOnUse" x1="1062.17" x2="1548.68"><stop offset="0" stop-color="#00ffd8"/><stop offset=".335" stop-color="#02ffc7"/><stop offset=".414" stop-color="#6fffc1"/><stop offset=".479" stop-color="#e0ffba"/><stop offset=".496" stop-color="#fffeb8"/><stop offset=".531" stop-color="#ffc58b"/><stop offset=".58" stop-color="#ff8f61"/><stop offset=".65" stop-color="#ff603d"/><stop offset=".755" stop-color="#ff371d"/><stop offset=".924" stop-color="#ff1401"/><stop offset="1" stop-color="#ff0a00"/></linearGradient>
<linearGradient id="c148" gradientUnits="userSpaceOnUse" x1="1062.64" x2="1551.25"><stop offset="0" stop-color="#00ffdb"/><stop offset=".332" stop-color="#02ffcc"/><stop offset=".408" stop-color="#6dffc6"/><stop offset=".473" stop-color="#e0ffc0"/><stop offset=".49" stop-color="#fffebe"/><stop offset=".525" stop-color="#ffc490"/><stop offset=".572" stop-color="#ff9066"/><stop offset=".639" stop-color="#ff6241"/><stop offset=".742" stop-color="#ff3820"/><stop offset=".906" stop-color="#ff1503"/><stop offset="1" stop-color="#ff0800"/></linearGradient>
<linearGradient id="c149" gradientUnits="userSpaceOnUse" x1="1063.11" x2="1553.82"><stop offset="0" stop-color="#00ffde"/><stop offset=".329" stop-color="#03ffd1"/><stop offset=".404" stop-color="#6fffcc"/><stop offset=".467" stop-color="#e0ffc7"/><stop offset=".484" stop-color="#fffdc4"/><stop offset=".518" stop-color="#ffc394"/><stop offset=".565" stop-color="#ff8f6a"/><stop offset=".633" stop-color="#ff6143"/><stop offset=".735" stop-color="#ff3721"/><stop offset=".898" stop-color="#ff1404"/><stop offset="1" stop-color="#ff0600"/></linearGradient>
<linearGradient id="c150" gradientUnits="userSpaceOnUse" x1="1063.58" x2="1556.4"><stop offset="0" stop-color="#00ffe2"/><stop offset=".323" stop-color="#01ffd6"/><stop offset=".396" stop-color="#6bffd2"/><stop offset=".459" stop-color="#dcffcd"/><stop offset=".478" stop-color="#fffdca"/><stop offset=".512" stop-color="#ffc299"/><stop offset=".559" stop-color="#ff8e6d"/><stop offset=".626" stop-color="#ff6046"/><stop offset=".728" stop-color="#ff3623"/><stop offset=".89" stop-color="#ff1306"/><stop offset=".992" stop-color="#ff0600"/><stop offset="1" stop-color="#ff0500"/></linearGradient>
<linearGradient id="c151" gradientUnits="userSpaceOnUse" x1="1064.05" x2="1558.99"><stop offset="0" stop-color="#00ffe6"/><stop offset=".32" stop-color="#01ffdb"/><stop offset=".393" stop-color="#6dffd7"/><stop offset=".455" stop-color="#e0ffd3"/><stop offset=".472" stop-color="#fffdd0"/><stop offset=".506" stop-color="#ffc29d"/><stop offset=".553" stop-color="#ff8d71"/><stop offset=".619" stop-color="#ff5f48"/><stop offset=".721" stop-color="#ff3525"/><stop offset=".883" stop-color="#ff1207"/><stop offset=".982" stop-color="#ff0500"/><stop offset="1" stop-color="#ff0300"/></linearGradient>
<linearGradient id="c152" gradientUnits="userSpaceOnUse" x1="1064.55" x2="1561.59"><stop offset="0" stop-color="#00ffe9"/><stop offset=".316" stop-color="#01ffe1"/><stop offset=".388" stop-color="#6effdd"/><stop offset=".449" stop-color="#deffda"/><stop offset=".465" stop-color="#fffed8"/><stop offset=".497" stop-color="#ffc5a6"/><stop offset=".541" stop-color="#ff9178"/><stop offset=".606" stop-color="#ff624e"/><stop offset=".702" stop-color="#ff382a"/><stop offset=".857" stop-color="#ff140a"/><stop offset=".972" stop-color="#ff0500"/><stop offset="1" stop-color="#ff0200"/></linearGradient>
<linearGradient id="c153" gradientUnits="userSpaceOnUse" x1="1065.04" x2="1564.19"><stop offset="0" stop-color="#00ffed"/><stop offset=".313" stop-color="#02ffe6"/><stop offset=".383" stop-color="#6dffe3"/><stop offset=".443" stop-color="#deffe1"/><stop offset=".459" stop-color="#fffedf"/><stop offset=".491" stop-color="#ffc4ab"/><stop offset=".535" stop-color="#ff907c"/><stop offset=".599" stop-color="#ff6151"/><stop offset=".695" stop-color="#ff372c"/><stop offset=".85" stop-color="#ff140c"/><stop offset=".972" stop-color="#ff0300"/><stop offset="1" stop-color="#f00"/></linearGradient>
<linearGradient id="c154" gradientUnits="userSpaceOnUse" x1="1065.54" x2="1566.78"><stop offset="0" stop-color="#00fff1"/><stop offset=".309" stop-color="#02ffec"/><stop offset=".379" stop-color="#6fffea"/><stop offset=".439" stop-color="#e2ffe8"/><stop offset=".453" stop-color="#fffee6"/><stop offset=".485" stop-color="#ffc4b0"/><stop offset=".529" stop-color="#ff8f80"/><stop offset=".591" stop-color="#ff6155"/><stop offset=".685" stop-color="#ff382f"/><stop offset=".834" stop-color="#ff140e"/><stop offset=".97" stop-color="#ff0200"/><stop offset="1" stop-color="#f00"/></linearGradient>
<linearGradient id="c155" gradientUnits="userSpaceOnUse" x1="1066.03" x2="1569.36"><stop offset="0" stop-color="#00fff5"/><stop offset=".304" stop-color="#00fff1"/><stop offset=".374" stop-color="#6efff0"/><stop offset=".431" stop-color="#deffef"/><stop offset=".447" stop-color="#fffded"/><stop offset=".479" stop-color="#ffc3b5"/><stop offset=".523" stop-color="#ff8e83"/><stop offset=".584" stop-color="#ff6057"/><stop offset=".678" stop-color="#ff3731"/><stop offset=".827" stop-color="#ff130f"/><stop offset=".972" stop-color="#f00"/><stop offset="1" stop-color="#f00"/></linearGradient>
<linearGradient id="c156" gradientUnits="userSpaceOnUse" x1="1066.53" x2="1571.93"><stop offset="0" stop-color="#00fff9"/><stop offset=".301" stop-color="#01fff7"/><stop offset=".368" stop-color="#6cfff7"/><stop offset=".426" stop-color="#defff6"/><stop offset=".442" stop-color="#fffdf4"/><stop offset=".473" stop-color="#ffc2ba"/><stop offset=".517" stop-color="#ff8d87"/><stop offset=".578" stop-color="#ff5f5a"/><stop offset=".671" stop-color="#ff3632"/><stop offset=".82" stop-color="#ff1311"/><stop offset=".972" stop-color="#f00"/><stop offset="1" stop-color="#f00"/></linearGradient>
<linearGradient id="c157" gradientUnits="userSpaceOnUse" x1="1067.03" x2="1574.49"><stop offset="0" stop-color="#00fffd"/><stop offset=".298" stop-color="#02fffd"/><stop offset=".365" stop-color="#6ffffd"/><stop offset=".422" stop-color="#e2fffd"/><stop offset=".436" stop-color="#fffcfb"/><stop offset=".465" stop-color="#ffc4c3"/><stop offset=".507" stop-color="#ff908f"/><stop offset=".566" stop-color="#ff6161"/><stop offset=".655" stop-color="#ff3838"/><stop offset=".797" stop-color="#ff1515"/><stop offset=".968" stop-color="#f00"/><stop offset="1" stop-color="#f00"/></linearGradient>
<linearGradient id="c158" gradientUnits="userSpaceOnUse" x1="1067.54" x2="1577.05"><stop offset="0" stop-color="#00fdff"/><stop offset=".295" stop-color="#02fbff"/><stop offset=".361" stop-color="#6ffaff"/><stop offset=".418" stop-color="#e1f9ff"/><stop offset=".432" stop-color="#fff8fd"/><stop offset=".462" stop-color="#ffc0c5"/><stop offset=".503" stop-color="#ff8d91"/><stop offset=".562" stop-color="#ff5f62"/><stop offset=".65" stop-color="#ff3639"/><stop offset=".792" stop-color="#ff1315"/><stop offset=".955" stop-color="#f00"/><stop offset="1" stop-color="#f00"/></linearGradient>
<linearGradient id="c159" gradientUnits="userSpaceOnUse" x1="1068.06" x2="1579.61"><stop offset="0" stop-color="#00f9ff"/><stop offset=".292" stop-color="#03f5ff"/><stop offset=".358" stop-color="#6ef3ff"/><stop offset=".415" stop-color="#dff2ff"/><stop offset=".431" stop-color="#ffeefc"/><stop offset=".462" stop-color="#ffb6c1"/><stop offset=".505" stop-color="#ff848d"/><stop offset=".566" stop-color="#ff585f"/><stop offset=".658" stop-color="#ff3136"/><stop offset=".806" stop-color="#ff0f13"/><stop offset=".945" stop-color="#ff0001"/><stop offset="1" stop-color="#f00"/></linearGradient>
<linearGradient id="c160" gradientUnits="userSpaceOnUse" x1="1068.58" x2="1582.16"><stop offset="0" stop-color="#00f5ff"/><stop offset=".287" stop-color="#01efff"/><stop offset=".355" stop-color="#6eedff"/><stop offset=".413" stop-color="#e1ebff"/><stop offset=".427" stop-color="#ffeafe"/><stop offset=".458" stop-color="#ffb3c4"/><stop offset=".501" stop-color="#ff818f"/><stop offset=".561" stop-color="#ff5661"/><stop offset=".653" stop-color="#ff2f38"/><stop offset=".799" stop-color="#ff0e14"/><stop offset=".932" stop-color="#ff0002"/><stop offset="1" stop-color="#f00"/></linearGradient>
<linearGradient id="c161" gradientUnits="userSpaceOnUse" x1="1069.09" x2="1584.72"><stop offset="0" stop-color="#00f1ff"/><stop offset=".283" stop-color="#01e9ff"/><stop offset=".351" stop-color="#6de7ff"/><stop offset=".41" stop-color="#dfe4ff"/><stop offset=".425" stop-color="#ffe1fc"/><stop offset=".456" stop-color="#ffacc3"/><stop offset=".499" stop-color="#ff7d8f"/><stop offset=".561" stop-color="#ff5260"/><stop offset=".654" stop-color="#ff2c37"/><stop offset=".804" stop-color="#ff0b14"/><stop offset=".92" stop-color="#ff0003"/><stop offset="1" stop-color="#f00"/></linearGradient>
<linearGradient id="c162" gradientUnits="userSpaceOnUse" x1="1069.61" x2="1587.28"><stop offset="0" stop-color="#00edff"/><stop offset=".28" stop-color="#02e4ff"/><stop offset=".35" stop-color="#70e0ff"/><stop offset=".408" stop-color="#e1ddff"/><stop offset=".422" stop-color="#ffdcff"/><stop offset=".453" stop-color="#ffa9c5"/><stop offset=".495" stop-color="#ff7a91"/><stop offset=".557" stop-color="#ff4f62"/><stop offset=".65" stop-color="#ff2a38"/><stop offset=".799" stop-color="#ff0a14"/><stop offset=".909" stop-color="#ff0005"/><stop offset="1" stop-color="#f00"/></linearGradient>
<linearGradient id="c163" gradientUnits="userSpaceOnUse" x1="1070.13" x2="1589.84"><stop offset="0" stop-color="#00e9ff"/><stop offset=".277" stop-color="#03deff"/><stop offset=".347" stop-color="#6fdaff"/><stop offset=".407" stop-color="#e3d6ff"/><stop offset=".42" stop-color="#ffd4fd"/><stop offset=".451" stop-color="#ffa2c5"/><stop offset=".493" stop-color="#ff7591"/><stop offset=".555" stop-color="#ff4c62"/><stop offset=".647" stop-color="#ff2839"/><stop offset=".796" stop-color="#ff0915"/><stop offset=".898" stop-color="#ff0006"/><stop offset="1" stop-color="#f00"/></linearGradient>
<linearGradient id="c164" gradientUnits="userSpaceOnUse" x1="1070.67" x2="1592.41"><stop offset="0" stop-color="#00e5ff"/><stop offset=".273" stop-color="#01d9ff"/><stop offset=".342" stop-color="#6cd5ff"/><stop offset=".401" stop-color="#ddd0ff"/><stop offset=".417" stop-color="#fecfff"/><stop offset=".449" stop-color="#ff9cc4"/><stop offset=".493" stop-color="#ff6f8f"/><stop offset=".557" stop-color="#ff4760"/><stop offset=".651" stop-color="#ff2437"/><stop offset=".802" stop-color="#ff0614"/><stop offset=".894" stop-color="#ff0007"/><stop offset="1" stop-color="#f00"/></linearGradient>
<linearGradient id="c165" gradientUnits="userSpaceOnUse" x1="1071.21" x2="1594.99"><stop offset="0" stop-color="#00e1ff"/><stop offset=".27" stop-color="#01d4ff"/><stop offset=".34" stop-color="#6ecfff"/><stop offset=".4" stop-color="#dfc9ff"/><stop offset=".415" stop-color="#ffc7fe"/><stop offset=".447" stop-color="#ff96c3"/><stop offset=".491" stop-color="#ff6b8f"/><stop offset=".554" stop-color="#ff4461"/><stop offset=".65" stop-color="#ff2237"/><stop offset=".803" stop-color="#ff0414"/><stop offset=".908" stop-color="#ff0005"/><stop offset="1" stop-color="#f00"/></linearGradient>
<linearGradient id="c166" gradientUnits="userSpaceOnUse" x1="1071.74" x2="1597.57"><stop offset="0" stop-color="#0df"/><stop offset=".267" stop-color="#02cfff"/><stop offset=".337" stop-color="#6ec9ff"/><stop offset=".398" stop-color="#e1c3ff"/><stop offset=".413" stop-color="#ffbffc"/><stop offset=".446" stop-color="#ff91c3"/><stop offset=".491" stop-color="#ff658d"/><stop offset=".556" stop-color="#ff405f"/><stop offset=".653" stop-color="#ff1e36"/><stop offset=".81" stop-color="#ff0213"/><stop offset=".987" stop-color="#f00"/><stop offset="1" stop-color="#f00"/></linearGradient>
<linearGradient id="c167" gradientUnits="userSpaceOnUse" x1="1072.28" x2="1600.15"><stop offset="0" stop-color="#00d9ff"/><stop offset=".264" stop-color="#03caff"/><stop offset=".336" stop-color="#71c4ff"/><stop offset=".397" stop-color="#e3bdff"/><stop offset=".41" stop-color="#ffbbfe"/><stop offset=".442" stop-color="#ff8dc5"/><stop offset=".486" stop-color="#ff6491"/><stop offset=".548" stop-color="#ff3f62"/><stop offset=".643" stop-color="#ff1e39"/><stop offset=".795" stop-color="#ff0215"/><stop offset=".985" stop-color="#f00"/><stop offset="1" stop-color="#f00"/></linearGradient>
<linearGradient id="c168" gradientUnits="userSpaceOnUse" x1="1072.82" x2="1602.72"><stop offset="0" stop-color="#00d5ff"/><stop offset=".259" stop-color="#01c5ff"/><stop offset=".331" stop-color="#6dbeff"/><stop offset=".391" stop-color="#ddb7ff"/><stop offset=".408" stop-color="#ffb3fd"/><stop offset=".44" stop-color="#ff88c4"/><stop offset=".486" stop-color="#ff5f8f"/><stop offset=".55" stop-color="#ff3b61"/><stop offset=".647" stop-color="#ff1b38"/><stop offset=".802" stop-color="#ff0014"/><stop offset=".987" stop-color="#f00"/><stop offset="1" stop-color="#f00"/></linearGradient>
<linearGradient id="c169" gradientUnits="userSpaceOnUse" x1="1073.37" x2="1605.29"><stop offset="0" stop-color="#00d2ff"/><stop offset=".256" stop-color="#01c0ff"/><stop offset=".328" stop-color="#6db9ff"/><stop offset=".39" stop-color="#dfb1ff"/><stop offset=".405" stop-color="#ffafff"/><stop offset=".437" stop-color="#ff84c6"/><stop offset=".482" stop-color="#ff5c91"/><stop offset=".546" stop-color="#ff3962"/><stop offset=".642" stop-color="#ff1a39"/><stop offset=".797" stop-color="#ff0015"/><stop offset=".987" stop-color="#f00"/><stop offset="1" stop-color="#f00"/></linearGradient>
<linearGradient id="c170" gradientUnits="userSpaceOnUse" x1="1073.93" x2="1607.85"><stop offset="0" stop-color="#00ceff"/><stop offset=".253" stop-color="#02bcff"/><stop offset=".326" stop-color="#6fb4ff"/><stop offset=".388" stop-color="#e1abff"/><stop offset=".403" stop-color="#ffa8fd"/><stop offset=".437" stop-color="#ff7dc3"/><stop offset=".484" stop-color="#ff568e"/><stop offset=".55" stop-color="#ff345f"/><stop offset=".649" stop-color="#ff1536"/><stop offset=".79" stop-color="#ff0016"/><stop offset=".987" stop-color="#f00"/><stop offset="1" stop-color="#f00"/></linearGradient>
<linearGradient id="c171" gradientUnits="userSpaceOnUse" x1="1074.5" x2="1610.4"><stop offset="0" stop-color="#00caff"/><stop offset=".25" stop-color="#03b7ff"/><stop offset=".323" stop-color="#6fafff"/><stop offset=".385" stop-color="#e0a6ff"/><stop offset=".4" stop-color="#ffa4ff"/><stop offset=".436" stop-color="#ff78c2"/><stop offset=".482" stop-color="#ff528e"/><stop offset=".55" stop-color="#ff305f"/><stop offset=".65" stop-color="#ff1336"/><stop offset=".779" stop-color="#ff0018"/><stop offset=".985" stop-color="#f00"/><stop offset="1" stop-color="#f00"/></linearGradient>
<linearGradient id="c172" gradientUnits="userSpaceOnUse" x1="1075.06" x2="1612.98"><stop offset="0" stop-color="#00c7ff"/><stop offset=".246" stop-color="#01b3ff"/><stop offset=".32" stop-color="#6eaaff"/><stop offset=".384" stop-color="#e1a0ff"/><stop offset=".399" stop-color="#ff9dfe"/><stop offset=".432" stop-color="#ff74c4"/><stop offset=".479" stop-color="#ff4f8f"/><stop offset=".546" stop-color="#ff2e60"/><stop offset=".646" stop-color="#ff1137"/><stop offset=".767" stop-color="#ff001a"/><stop offset=".981" stop-color="#f00"/><stop offset="1" stop-color="#f00"/></linearGradient>
<linearGradient id="c173" gradientUnits="userSpaceOnUse" x1="1075.62" x2="1615.57"><stop offset="0" stop-color="#00c3ff"/><stop offset=".243" stop-color="#02aeff"/><stop offset=".317" stop-color="#6ea5ff"/><stop offset=".38" stop-color="#e09bff"/><stop offset=".397" stop-color="#ff96fc"/><stop offset=".43" stop-color="#ff6fc3"/><stop offset=".477" stop-color="#ff4c8f"/><stop offset=".544" stop-color="#ff2c60"/><stop offset=".644" stop-color="#ff1037"/><stop offset=".757" stop-color="#ff001c"/><stop offset=".978" stop-color="#f00"/><stop offset="1" stop-color="#f00"/></linearGradient>
<linearGradient id="c174" gradientUnits="userSpaceOnUse" x1="1076.19" x2="1618.17"><stop offset="0" stop-color="#00c0ff"/><stop offset=".24" stop-color="#02aaff"/><stop offset=".314" stop-color="#6ea0ff"/><stop offset=".377" stop-color="#de96ff"/><stop offset=".394" stop-color="#ff92fe"/><stop offset=".427" stop-color="#ff6cc5"/><stop offset=".473" stop-color="#ff4991"/><stop offset=".54" stop-color="#ff2a62"/><stop offset=".64" stop-color="#ff0e38"/><stop offset=".745" stop-color="#ff001e"/><stop offset=".974" stop-color="#f00"/><stop offset="1" stop-color="#f00"/></linearGradient>
<linearGradient id="c175" gradientUnits="userSpaceOnUse" x1="1076.78" x2="1620.73"><stop offset="0" stop-color="#00bcff"/><stop offset=".238" stop-color="#03a6ff"/><stop offset=".313" stop-color="#709bff"/><stop offset=".378" stop-color="#e490ff"/><stop offset=".392" stop-color="#ff8cfc"/><stop offset=".427" stop-color="#ff66c2"/><stop offset=".475" stop-color="#ff448e"/><stop offset=".543" stop-color="#ff255f"/><stop offset=".646" stop-color="#ff0b36"/><stop offset=".735" stop-color="#ff0020"/><stop offset=".963" stop-color="#ff0001"/><stop offset="1" stop-color="#f00"/></linearGradient>
<linearGradient id="c176" gradientUnits="userSpaceOnUse" x1="1077.37" x2="1623.29"><stop offset="0" stop-color="#00b9ff"/><stop offset=".233" stop-color="#01a2ff"/><stop offset=".308" stop-color="#6d97ff"/><stop offset=".372" stop-color="#de8cff"/><stop offset=".389" stop-color="#ff88fe"/><stop offset=".424" stop-color="#ff63c4"/><stop offset=".472" stop-color="#ff418f"/><stop offset=".539" stop-color="#ff2460"/><stop offset=".642" stop-color="#ff0937"/><stop offset=".725" stop-color="#f02"/><stop offset=".949" stop-color="#ff0002"/><stop offset="1" stop-color="#f00"/></linearGradient>
<linearGradient id="c177" gradientUnits="userSpaceOnUse" x1="1077.97" x2="1624.49"><stop offset="0" stop-color="#00b5ff"/><stop offset=".231" stop-color="#029eff"/><stop offset=".308" stop-color="#6f92ff"/><stop offset=".372" stop-color="#e086ff"/><stop offset=".388" stop-color="#ff82fd"/><stop offset=".423" stop-color="#ff5ec3"/><stop offset=".471" stop-color="#ff3e8f"/><stop offset=".54" stop-color="#ff2160"/><stop offset=".645" stop-color="#ff0737"/><stop offset=".72" stop-color="#ff0024"/><stop offset=".94" stop-color="#ff0004"/><stop offset="1" stop-color="#f00"/></linearGradient>
<linearGradient id="c178" gradientUnits="userSpaceOnUse" x1="1078.56" x2="1621.74"><stop offset="0" stop-color="#00b2ff"/><stop offset=".23" stop-color="#029aff"/><stop offset=".308" stop-color="#6f8eff"/><stop offset=".374" stop-color="#e181ff"/><stop offset=".39" stop-color="#ff7cfc"/><stop offset=".425" stop-color="#ff5ac3"/><stop offset=".475" stop-color="#ff3a8e"/><stop offset=".545" stop-color="#ff1e60"/><stop offset=".652" stop-color="#ff0536"/><stop offset=".729" stop-color="#ff0023"/><stop offset=".954" stop-color="#ff0003"/><stop offset="1" stop-color="#f00"/></linearGradient>
<linearGradient id="c179" gradientUnits="userSpaceOnUse" x1="1079.16" x2="1616.22"><stop offset="0" stop-color="#00aeff"/><stop offset=".231" stop-color="#0396ff"/><stop offset=".309" stop-color="#6e8aff"/><stop offset=".376" stop-color="#e07dff"/><stop offset=".393" stop-color="#ff79fe"/><stop offset=".428" stop-color="#ff57c5"/><stop offset=".479" stop-color="#ff3890"/><stop offset=".549" stop-color="#ff1c61"/><stop offset=".655" stop-color="#ff0438"/><stop offset=".752" stop-color="#ff0021"/><stop offset=".993" stop-color="#ff0001"/><stop offset="1" stop-color="#f00"/></linearGradient>
<linearGradient id="c180" gradientUnits="userSpaceOnUse" x1="1079.78" x2="1610.71"><stop offset="0" stop-color="#00abff"/><stop offset=".23" stop-color="#0292ff"/><stop offset=".311" stop-color="#6f85ff"/><stop offset=".379" stop-color="#df78ff"/><stop offset=".396" stop-color="#ff74ff"/><stop offset=".432" stop-color="#ff54c6"/><stop offset=".483" stop-color="#ff3590"/><stop offset=".555" stop-color="#ff1a62"/><stop offset=".662" stop-color="#ff0338"/><stop offset=".836" stop-color="#ff0015"/><stop offset="1" stop-color="#ff0002"/></linearGradient>
<linearGradient id="c181" gradientUnits="userSpaceOnUse" x1="1080.4" x2="1605.19"><stop offset="0" stop-color="#00a8ff"/><stop offset=".231" stop-color="#028eff"/><stop offset=".313" stop-color="#6e81ff"/><stop offset=".384" stop-color="#e173ff"/><stop offset=".401" stop-color="#ff6ffd"/><stop offset=".439" stop-color="#ff4ec3"/><stop offset=".49" stop-color="#ff318f"/><stop offset=".565" stop-color="#ff1760"/><stop offset=".677" stop-color="#ff0037"/><stop offset=".859" stop-color="#ff0013"/><stop offset="1" stop-color="#ff0003"/></linearGradient>
<linearGradient id="c182" gradientUnits="userSpaceOnUse" x1="1081.02" x2="1599.68"><stop offset="0" stop-color="#00a5ff"/><stop offset=".23" stop-color="#018bff"/><stop offset=".315" stop-color="#6e7dff"/><stop offset=".386" stop-color="#e06fff"/><stop offset=".403" stop-color="#ff6bff"/><stop offset=".442" stop-color="#ff4bc4"/><stop offset=".494" stop-color="#ff2f90"/><stop offset=".569" stop-color="#ff1561"/><stop offset=".683" stop-color="#ff0038"/><stop offset=".865" stop-color="#ff0014"/><stop offset="1" stop-color="#ff0005"/></linearGradient>
<linearGradient id="c183" gradientUnits="userSpaceOnUse" x1="1081.65" x2="1594.16"><stop offset="0" stop-color="#00a1ff"/><stop offset=".23" stop-color="#0187ff"/><stop offset=".316" stop-color="#6e79ff"/><stop offset=".391" stop-color="#e16aff"/><stop offset=".408" stop-color="#ff66fd"/><stop offset=".447" stop-color="#ff47c4"/><stop offset=".502" stop-color="#ff2b8f"/><stop offset=".58" stop-color="#ff1260"/><stop offset=".689" stop-color="#ff0039"/><stop offset=".873" stop-color="#ff0015"/><stop offset="1" stop-color="#ff0006"/></linearGradient>
<linearGradient id="c184" gradientUnits="userSpaceOnUse" x1="1082.27" x2="1588.65"><stop offset="0" stop-color="#009eff"/><stop offset=".231" stop-color="#0283ff"/><stop offset=".318" stop-color="#6e75ff"/><stop offset=".393" stop-color="#e066ff"/><stop offset=".413" stop-color="#ff60fc"/><stop offset=".453" stop-color="#ff43c3"/><stop offset=".508" stop-color="#ff288f"/><stop offset=".587" stop-color="#ff1060"/><stop offset=".688" stop-color="#ff003c"/><stop offset=".868" stop-color="#ff0018"/><stop offset="1" stop-color="#ff0008"/></linearGradient>
<linearGradient id="c185" gradientUnits="userSpaceOnUse" x1="1082.92" x2="1583.14"><stop offset="0" stop-color="#009bff"/><stop offset=".232" stop-color="#0380ff"/><stop offset=".322" stop-color="#7071ff"/><stop offset=".398" stop-color="#e262ff"/><stop offset=".416" stop-color="#ff5dfe"/><stop offset=".456" stop-color="#ff40c5"/><stop offset=".512" stop-color="#ff2690"/><stop offset=".592" stop-color="#ff0e61"/><stop offset=".686" stop-color="#ff003f"/><stop offset=".862" stop-color="#ff001b"/><stop offset="1" stop-color="#ff000a"/></linearGradient>
<linearGradient id="c186" gradientUnits="userSpaceOnUse" x1="1083.58" x2="1577.62"><stop offset="0" stop-color="#0098ff"/><stop offset=".231" stop-color="#017dff"/><stop offset=".322" stop-color="#6d6eff"/><stop offset=".401" stop-color="#e05eff"/><stop offset=".421" stop-color="#ff58fc"/><stop offset=".464" stop-color="#ff3bc2"/><stop offset=".522" stop-color="#ff228d"/><stop offset=".605" stop-color="#ff0b5f"/><stop offset=".686" stop-color="#ff0042"/><stop offset=".86" stop-color="#ff001d"/><stop offset="1" stop-color="#ff000b"/></linearGradient>
<linearGradient id="c187" gradientUnits="userSpaceOnUse" x1="1084.23" x2="1572.11"><stop offset="0" stop-color="#0095ff"/><stop offset=".232" stop-color="#0379ff"/><stop offset=".326" stop-color="#7069ff"/><stop offset=".407" stop-color="#e359ff"/><stop offset=".425" stop-color="#ff54fd"/><stop offset=".468" stop-color="#ff38c3"/><stop offset=".528" stop-color="#ff1f8e"/><stop offset=".614" stop-color="#ff095f"/><stop offset=".688" stop-color="#ff0045"/><stop offset=".86" stop-color="#ff001f"/><stop offset="1" stop-color="#ff000d"/></linearGradient>
<linearGradient id="c188" gradientUnits="userSpaceOnUse" x1="1084.88" x2="1566.59"><stop offset="0" stop-color="#0091ff"/><stop offset=".231" stop-color="#0176ff"/><stop offset=".326" stop-color="#6d66ff"/><stop offset=".407" stop-color="#df56ff"/><stop offset=".428" stop-color="#ff51fe"/><stop offset=".472" stop-color="#ff36c4"/><stop offset=".532" stop-color="#ff1d90"/><stop offset=".617" stop-color="#ff0861"/><stop offset=".688" stop-color="#ff0047"/><stop offset=".859" stop-color="#f02"/><stop offset="1" stop-color="#ff000f"/></linearGradient>
<linearGradient id="c189" gradientUnits="userSpaceOnUse" x1="1085.54" x2="1561.08"><stop offset="0" stop-color="#008eff"/><stop offset=".232" stop-color="#0273ff"/><stop offset=".328" stop-color="#6d62ff"/><stop offset=".413" stop-color="#e051ff"/><stop offset=".434" stop-color="#ff4cfd"/><stop offset=".478" stop-color="#ff32c4"/><stop offset=".539" stop-color="#ff1a90"/><stop offset=".627" stop-color="#ff0560"/><stop offset=".699" stop-color="#ff0047"/><stop offset=".874" stop-color="#ff0021"/><stop offset="1" stop-color="#f01"/></linearGradient>
<linearGradient id="c190" gradientUnits="userSpaceOnUse" x1="1086.22" x2="1555.56"><stop offset="0" stop-color="#008bff"/><stop offset=".232" stop-color="#026fff"/><stop offset=".333" stop-color="#705fff"/><stop offset=".418" stop-color="#e24dff"/><stop offset=".439" stop-color="#ff47fb"/><stop offset=".486" stop-color="#ff2dc1"/><stop offset=".55" stop-color="#ff178d"/><stop offset=".642" stop-color="#ff025e"/><stop offset=".78" stop-color="#ff0035"/><stop offset="1" stop-color="#ff0013"/></linearGradient>
<linearGradient id="c191" gradientUnits="userSpaceOnUse" x1="1086.9" x2="1550.05"><stop offset="0" stop-color="#08f"/><stop offset=".231" stop-color="#016cff"/><stop offset=".333" stop-color="#6d5cff"/><stop offset=".419" stop-color="#de4aff"/><stop offset=".443" stop-color="#ff44fd"/><stop offset=".49" stop-color="#ff2bc2"/><stop offset=".555" stop-color="#ff158e"/><stop offset=".648" stop-color="#ff015f"/><stop offset=".788" stop-color="#ff0036"/><stop offset="1" stop-color="#ff0015"/></linearGradient>
<linearGradient id="c192" gradientUnits="userSpaceOnUse" x1="1087.58" x2="1544.53"><stop offset="0" stop-color="#0085ff"/><stop offset=".232" stop-color="#0269ff"/><stop offset=".338" stop-color="#7058ff"/><stop offset=".428" stop-color="#e445ff"/><stop offset=".447" stop-color="#ff40fd"/><stop offset=".496" stop-color="#ff28c3"/><stop offset=".561" stop-color="#ff128f"/><stop offset=".656" stop-color="#ff0060"/><stop offset=".798" stop-color="#ff0037"/><stop offset="1" stop-color="#ff0017"/></linearGradient>
<linearGradient id="c193" gradientUnits="userSpaceOnUse" x1="1088.26" x2="1539.02"><stop offset="0" stop-color="#0082ff"/><stop offset=".233" stop-color="#0366ff"/><stop offset=".34" stop-color="#7054ff"/><stop offset=".431" stop-color="#e242ff"/><stop offset=".453" stop-color="#ff3cfc"/><stop offset=".502" stop-color="#ff25c2"/><stop offset=".571" stop-color="#ff0f8d"/><stop offset=".664" stop-color="#ff0060"/><stop offset=".809" stop-color="#ff0037"/><stop offset="1" stop-color="#ff0019"/></linearGradient>
<linearGradient id="c194" gradientUnits="userSpaceOnUse" x1="1088.97" x2="1533.5"><stop offset="0" stop-color="#007fff"/><stop offset=".232" stop-color="#0263ff"/><stop offset=".342" stop-color="#7051ff"/><stop offset=".435" stop-color="#e13eff"/><stop offset=".457" stop-color="#ff39fd"/><stop offset=".507" stop-color="#ff22c4"/><stop offset=".577" stop-color="#ff0d8f"/><stop offset=".662" stop-color="#ff0065"/><stop offset=".804" stop-color="#ff003b"/><stop offset="1" stop-color="#ff001b"/></linearGradient>
<linearGradient id="c195" gradientUnits="userSpaceOnUse" x1="1089.68" x2="1527.99"><stop offset="0" stop-color="#007cff"/><stop offset=".233" stop-color="#0260ff"/><stop offset=".345" stop-color="#6f4eff"/><stop offset=".441" stop-color="#e33aff"/><stop offset=".463" stop-color="#ff34fc"/><stop offset=".516" stop-color="#ff1ec1"/><stop offset=".587" stop-color="#ff0a8d"/><stop offset=".662" stop-color="#ff0069"/><stop offset=".801" stop-color="#ff003f"/><stop offset="1" stop-color="#ff001d"/></linearGradient>
<linearGradient id="c196" gradientUnits="userSpaceOnUse" x1="1090.39" x2="1522.48"><stop offset="0" stop-color="#007aff"/><stop offset=".231" stop-color="#015dff"/><stop offset=".345" stop-color="#6d4bff"/><stop offset=".442" stop-color="#de37ff"/><stop offset=".468" stop-color="#ff31fe"/><stop offset=".521" stop-color="#ff1cc3"/><stop offset=".593" stop-color="#ff098f"/><stop offset=".662" stop-color="#ff006d"/><stop offset=".801" stop-color="#ff0042"/><stop offset="1" stop-color="#ff001f"/></linearGradient>
<linearGradient id="c197" gradientUnits="userSpaceOnUse" x1="1091.1" x2="1516.96"><stop offset="0" stop-color="#07f"/><stop offset=".233" stop-color="#025aff"/><stop offset=".351" stop-color="#7047ff"/><stop offset=".449" stop-color="#e233ff"/><stop offset=".473" stop-color="#ff2efe"/><stop offset=".527" stop-color="#ff19c3"/><stop offset=".6" stop-color="#ff068f"/><stop offset=".666" stop-color="#ff006f"/><stop offset=".805" stop-color="#f04"/><stop offset="1" stop-color="#ff0021"/></linearGradient>
<linearGradient id="c198" gradientUnits="userSpaceOnUse" x1="1091.83" x2="1511.45"><stop offset="0" stop-color="#0074ff"/><stop offset=".234" stop-color="#0357ff"/><stop offset=".353" stop-color="#7044ff"/><stop offset=".456" stop-color="#e330ff"/><stop offset=".48" stop-color="#ff2afc"/><stop offset=".535" stop-color="#ff16c2"/><stop offset=".611" stop-color="#ff048e"/><stop offset=".721" stop-color="#ff005f"/><stop offset=".885" stop-color="#ff0036"/><stop offset="1" stop-color="#ff0024"/></linearGradient>
<linearGradient id="c199" gradientUnits="userSpaceOnUse" x1="1092.58" x2="1505.93"><stop offset="0" stop-color="#0071ff"/><stop offset=".232" stop-color="#0255ff"/><stop offset=".356" stop-color="#7041ff"/><stop offset=".46" stop-color="#e22cff"/><stop offset=".484" stop-color="#ff27fe"/><stop offset=".54" stop-color="#ff13c4"/><stop offset=".617" stop-color="#ff028f"/><stop offset=".729" stop-color="#ff0060"/><stop offset=".896" stop-color="#ff0037"/><stop offset="1" stop-color="#ff0026"/></linearGradient>
<linearGradient id="c200" gradientUnits="userSpaceOnUse" x1="1093.33" x2="1500.42"><stop offset="0" stop-color="#006eff"/><stop offset=".233" stop-color="#0352ff"/><stop offset=".359" stop-color="#703eff"/><stop offset=".464" stop-color="#e129ff"/><stop offset=".491" stop-color="#ff23fc"/><stop offset=".55" stop-color="#ff10c1"/><stop offset=".631" stop-color="#ff008c"/><stop offset=".747" stop-color="#ff005e"/><stop offset=".921" stop-color="#ff0035"/><stop offset="1" stop-color="#ff0028"/></linearGradient>
<linearGradient id="c201" gradientUnits="userSpaceOnUse" x1="1094.09" x2="1494.9"><stop offset="0" stop-color="#006bff"/><stop offset=".233" stop-color="#0250ff"/><stop offset=".36" stop-color="#6e3bff"/><stop offset=".47" stop-color="#e126ff"/><stop offset=".498" stop-color="#ff20fc"/><stop offset=".558" stop-color="#ff0dc2"/><stop offset=".638" stop-color="#ff008e"/><stop offset=".755" stop-color="#ff005f"/><stop offset=".932" stop-color="#ff0036"/><stop offset="1" stop-color="#ff002b"/></linearGradient>
<linearGradient id="c202" gradientUnits="userSpaceOnUse" x1="1094.86" x2="1489.39"><stop offset="0" stop-color="#0069ff"/><stop offset=".234" stop-color="#034dff"/><stop offset=".365" stop-color="#7038ff"/><stop offset=".477" stop-color="#e322ff"/><stop offset=".503" stop-color="#ff1dfe"/><stop offset=".563" stop-color="#ff0bc3"/><stop offset=".635" stop-color="#ff0095"/><stop offset=".749" stop-color="#ff0065"/><stop offset=".919" stop-color="#ff003b"/><stop offset="1" stop-color="#ff002e"/></linearGradient>
<linearGradient id="c203" gradientUnits="userSpaceOnUse" x1="1095.67" x2="1483.87"><stop offset="0" stop-color="#06f"/><stop offset=".232" stop-color="#024aff"/><stop offset=".366" stop-color="#6e36ff"/><stop offset=".482" stop-color="#e21fff"/><stop offset=".51" stop-color="#ff19fc"/><stop offset=".572" stop-color="#ff08c2"/><stop offset=".637" stop-color="#f09"/><stop offset=".75" stop-color="#ff0069"/><stop offset=".918" stop-color="#ff003e"/><stop offset="1" stop-color="#ff0030"/></linearGradient>
<linearGradient id="c204" gradientUnits="userSpaceOnUse" x1="1096.48" x2="1478.36"><stop offset="0" stop-color="#0063ff"/><stop offset=".234" stop-color="#0348ff"/><stop offset=".37" stop-color="#6f33ff"/><stop offset=".488" stop-color="#e21cff"/><stop offset=".517" stop-color="#ff16fc"/><stop offset=".58" stop-color="#ff05c2"/><stop offset=".643" stop-color="#ff009a"/><stop offset=".759" stop-color="#ff006a"/><stop offset=".929" stop-color="#ff003f"/><stop offset="1" stop-color="#f03"/></linearGradient>
<linearGradient id="c205" gradientUnits="userSpaceOnUse" x1="1097.29" x2="1472.85"><stop offset="0" stop-color="#0060ff"/><stop offset=".232" stop-color="#0245ff"/><stop offset=".373" stop-color="#6f30ff"/><stop offset=".493" stop-color="#e119ff"/><stop offset=".523" stop-color="#ff13fd"/><stop offset=".587" stop-color="#ff03c4"/><stop offset=".675" stop-color="#ff0090"/><stop offset=".803" stop-color="#ff0060"/><stop offset=".995" stop-color="#ff0037"/><stop offset="1" stop-color="#ff0036"/></linearGradient>
<linearGradient id="c206" gradientUnits="userSpaceOnUse" x1="1098.12" x2="1467.33"><stop offset="0" stop-color="#005eff"/><stop offset=".233" stop-color="#0343ff"/><stop offset=".377" stop-color="#6f2dff"/><stop offset=".501" stop-color="#e316ff"/><stop offset=".531" stop-color="#ff0ffc"/><stop offset=".599" stop-color="#ff00c1"/><stop offset=".691" stop-color="#ff008d"/><stop offset=".824" stop-color="#ff005e"/><stop offset="1" stop-color="#ff0039"/></linearGradient>
<linearGradient id="c207" gradientUnits="userSpaceOnUse" x1="1098.97" x2="1461.82"><stop offset="0" stop-color="#005bff"/><stop offset=".232" stop-color="#0240ff"/><stop offset=".381" stop-color="#702aff"/><stop offset=".508" stop-color="#e313ff"/><stop offset=".539" stop-color="#ff0cfc"/><stop offset=".608" stop-color="#ff00c1"/><stop offset=".702" stop-color="#ff008d"/><stop offset=".837" stop-color="#ff005f"/><stop offset="1" stop-color="#ff003c"/></linearGradient>
<linearGradient id="c208" gradientUnits="userSpaceOnUse" x1="1099.83" x2="1456.3"><stop offset="0" stop-color="#0058ff"/><stop offset=".233" stop-color="#033eff"/><stop offset=".385" stop-color="#7028ff"/><stop offset=".514" stop-color="#e210ff"/><stop offset=".545" stop-color="#ff0afd"/><stop offset=".61" stop-color="#ff00c7"/><stop offset=".705" stop-color="#ff0091"/><stop offset=".84" stop-color="#ff0062"/><stop offset="1" stop-color="#ff0040"/></linearGradient>
<linearGradient id="c209" gradientUnits="userSpaceOnUse" x1="1100.68" x2="1450.79"><stop offset="0" stop-color="#0056ff"/><stop offset=".231" stop-color="#023cff"/><stop offset=".389" stop-color="#7025ff"/><stop offset=".523" stop-color="#e40dff"/><stop offset=".554" stop-color="#ff06fc"/><stop offset=".611" stop-color="#f0c"/><stop offset=".706" stop-color="#ff0096"/><stop offset=".84" stop-color="#f06"/><stop offset="1" stop-color="#ff0043"/></linearGradient>
<linearGradient id="c210" gradientUnits="userSpaceOnUse" x1="1101.57" x2="1445.27"><stop offset="0" stop-color="#0053ff"/><stop offset=".23" stop-color="#0139ff"/><stop offset=".391" stop-color="#6e23ff"/><stop offset=".528" stop-color="#e10aff"/><stop offset=".56" stop-color="#ff04fe"/><stop offset=".633" stop-color="#ff00c4"/><stop offset=".735" stop-color="#ff008f"/><stop offset=".88" stop-color="#ff0060"/><stop offset="1" stop-color="#ff0046"/></linearGradient>
<linearGradient id="c211" gradientUnits="userSpaceOnUse" x1="1102.46" x2="1439.76"><stop offset="0" stop-color="#0050ff"/><stop offset=".231" stop-color="#0237ff"/><stop offset=".395" stop-color="#6e20ff"/><stop offset=".534" stop-color="#e008ff"/><stop offset=".57" stop-color="#ff01fd"/><stop offset=".647" stop-color="#ff00c2"/><stop offset=".751" stop-color="#ff008e"/><stop offset=".902" stop-color="#ff005f"/><stop offset="1" stop-color="#ff004a"/></linearGradient>
<linearGradient id="c212" gradientUnits="userSpaceOnUse" x1="1103.35" x2="1434.24"><stop offset="0" stop-color="#004eff"/><stop offset=".23" stop-color="#0235ff"/><stop offset=".4" stop-color="#6f1dff"/><stop offset=".542" stop-color="#e105ff"/><stop offset=".579" stop-color="#ff00fc"/><stop offset=".658" stop-color="#ff00c2"/><stop offset=".767" stop-color="#ff008d"/><stop offset=".921" stop-color="#ff005e"/><stop offset="1" stop-color="#ff004e"/></linearGradient>
<linearGradient id="c213" gradientUnits="userSpaceOnUse" x1="1104.26" x2="1428.73"><stop offset="0" stop-color="#004bff"/><stop offset=".231" stop-color="#0332ff"/><stop offset=".404" stop-color="#6f1bff"/><stop offset=".552" stop-color="#e202ff"/><stop offset=".586" stop-color="#ff00fe"/><stop offset=".667" stop-color="#ff00c3"/><stop offset=".778" stop-color="#ff008e"/><stop offset=".935" stop-color="#ff005f"/><stop offset="1" stop-color="#ff0051"/></linearGradient>
<linearGradient id="c214" gradientUnits="userSpaceOnUse" x1="1105.17" x2="1423.21"><stop offset="0" stop-color="#0049ff"/><stop offset=".23" stop-color="#0230ff"/><stop offset=".409" stop-color="#7018ff"/><stop offset=".56" stop-color="#e200ff"/><stop offset=".597" stop-color="#ff00fc"/><stop offset=".679" stop-color="#ff00c2"/><stop offset=".792" stop-color="#ff008e"/><stop offset=".956" stop-color="#ff005f"/><stop offset="1" stop-color="#f05"/></linearGradient>
<linearGradient id="c215" gradientUnits="userSpaceOnUse" x1="1106.09" x2="1417.7"><stop offset="0" stop-color="#0046ff"/><stop offset=".228" stop-color="#022eff"/><stop offset=".412" stop-color="#6e16ff"/><stop offset=".569" stop-color="#e200ff"/><stop offset=".608" stop-color="#ff00fc"/><stop offset=".691" stop-color="#ff00c2"/><stop offset=".807" stop-color="#ff008e"/><stop offset=".974" stop-color="#ff005f"/><stop offset="1" stop-color="#ff005a"/></linearGradient>
<linearGradient id="c216" gradientUnits="userSpaceOnUse" x1="1107" x2="1412.19"><stop offset="0" stop-color="#04f"/><stop offset=".23" stop-color="#022cff"/><stop offset=".416" stop-color="#6e14ff"/><stop offset=".564" stop-color="#d700ff"/><stop offset=".616" stop-color="#ff00fd"/><stop offset=".702" stop-color="#ff00c4"/><stop offset=".82" stop-color="#ff008f"/><stop offset=".99" stop-color="#ff0060"/><stop offset="1" stop-color="#ff005e"/></linearGradient>
<linearGradient id="c217" gradientUnits="userSpaceOnUse" x1="1107.93" x2="1406.67"><stop offset="0" stop-color="#0041ff"/><stop offset=".228" stop-color="#022aff"/><stop offset=".423" stop-color="#6f11ff"/><stop offset=".56" stop-color="#cd00ff"/><stop offset=".628" stop-color="#ff00fd"/><stop offset=".718" stop-color="#ff00c2"/><stop offset=".842" stop-color="#ff008d"/><stop offset="1" stop-color="#ff0063"/></linearGradient>
<linearGradient id="c218" gradientUnits="userSpaceOnUse" x1="1108.85" x2="1401.16"><stop offset="0" stop-color="#003fff"/><stop offset=".229" stop-color="#0328ff"/><stop offset=".428" stop-color="#700fff"/><stop offset=".555" stop-color="#c300ff"/><stop offset=".637" stop-color="#ff00fe"/><stop offset=".729" stop-color="#ff00c3"/><stop offset=".856" stop-color="#ff008e"/><stop offset="1" stop-color="#ff0067"/></linearGradient>
<linearGradient id="c219" gradientUnits="userSpaceOnUse" x1="1109.78" x2="1395.64"><stop offset="0" stop-color="#003cff"/><stop offset=".228" stop-color="#0226ff"/><stop offset=".432" stop-color="#6e0dff"/><stop offset=".547" stop-color="#b800ff"/><stop offset=".649" stop-color="#ff00fd"/><stop offset=".744" stop-color="#ff00c3"/><stop offset=".874" stop-color="#ff008e"/><stop offset="1" stop-color="#ff006c"/></linearGradient>
<linearGradient id="c220" gradientUnits="userSpaceOnUse" x1="1110.71" x2="1390.13"><stop offset="0" stop-color="#003aff"/><stop offset=".226" stop-color="#0224ff"/><stop offset=".437" stop-color="#6f0bff"/><stop offset=".541" stop-color="#ae00ff"/><stop offset=".663" stop-color="#ff00fc"/><stop offset=".76" stop-color="#ff00c2"/><stop offset=".896" stop-color="#ff008d"/><stop offset="1" stop-color="#ff0071"/></linearGradient>
<linearGradient id="c221" gradientUnits="userSpaceOnUse" x1="1111.65" x2="1384.61"><stop offset="0" stop-color="#0037ff"/><stop offset=".228" stop-color="#0322ff"/><stop offset=".445" stop-color="#7008ff"/><stop offset=".54" stop-color="#a800ff"/><stop offset=".673" stop-color="#ff00fe"/><stop offset=".772" stop-color="#ff00c4"/><stop offset=".908" stop-color="#ff0090"/><stop offset="1" stop-color="#f07"/></linearGradient>
<linearGradient id="c222" gradientUnits="userSpaceOnUse" x1="1112.61" x2="1379.1"><stop offset="0" stop-color="#0035ff"/><stop offset=".226" stop-color="#0220ff"/><stop offset=".451" stop-color="#7006ff"/><stop offset=".541" stop-color="#a300ff"/><stop offset=".688" stop-color="#ff00fd"/><stop offset=".793" stop-color="#ff00c2"/><stop offset=".936" stop-color="#ff008d"/><stop offset="1" stop-color="#ff007c"/></linearGradient>
<linearGradient id="c223" gradientUnits="userSpaceOnUse" x1="1113.59" x2="1373.58"><stop offset="0" stop-color="#0032ff"/><stop offset=".224" stop-color="#021eff"/><stop offset=".456" stop-color="#6f04ff"/><stop offset=".591" stop-color="#ba00ff"/><stop offset=".703" stop-color="#ff00fc"/><stop offset=".811" stop-color="#ff00c2"/><stop offset=".958" stop-color="#ff008e"/><stop offset="1" stop-color="#ff0082"/></linearGradient>
<linearGradient id="c224" gradientUnits="userSpaceOnUse" x1="1114.56" x2="1368.07"><stop offset="0" stop-color="#0030ff"/><stop offset=".225" stop-color="#031cff"/><stop offset=".466" stop-color="#7101ff"/><stop offset=".672" stop-color="#e500ff"/><stop offset=".715" stop-color="#ff00fe"/><stop offset=".826" stop-color="#ff00c3"/><stop offset=".976" stop-color="#ff008f"/><stop offset="1" stop-color="#f08"/></linearGradient>
<linearGradient id="c225" gradientUnits="userSpaceOnUse" x1="1115.57" x2="1362.56"><stop offset="0" stop-color="#002eff"/><stop offset=".224" stop-color="#031aff"/><stop offset=".472" stop-color="#7000ff"/><stop offset=".683" stop-color="#e300ff"/><stop offset=".732" stop-color="#ff00fd"/><stop offset=".846" stop-color="#ff00c3"/><stop offset="1" stop-color="#ff008f"/></linearGradient>
<linearGradient id="c226" gradientUnits="userSpaceOnUse" x1="1116.59" x2="1357.04"><stop offset="0" stop-color="#002bff"/><stop offset=".221" stop-color="#0218ff"/><stop offset=".475" stop-color="#6e00ff"/><stop offset=".692" stop-color="#e000ff"/><stop offset=".75" stop-color="#ff00fc"/><stop offset=".867" stop-color="#ff00c2"/><stop offset="1" stop-color="#ff0096"/></linearGradient>
<linearGradient id="c227" gradientUnits="userSpaceOnUse" x1="1117.62" x2="1351.53"><stop offset="0" stop-color="#0029ff"/><stop offset=".219" stop-color="#0216ff"/><stop offset=".476" stop-color="#6b00ff"/><stop offset=".704" stop-color="#de00ff"/><stop offset=".764" stop-color="#ff00fd"/><stop offset=".884" stop-color="#ff00c4"/><stop offset="1" stop-color="#ff009d"/></linearGradient>
<linearGradient id="c228" gradientUnits="userSpaceOnUse" x1="1118.67" x2="1346.01"><stop offset="0" stop-color="#0026ff"/><stop offset=".22" stop-color="#0314ff"/><stop offset=".467" stop-color="#6400ff"/><stop offset=".705" stop-color="#d600ff"/><stop offset=".784" stop-color="#ff00fc"/><stop offset=".912" stop-color="#ff00c2"/><stop offset="1" stop-color="#ff00a4"/></linearGradient>
<linearGradient id="c229" gradientUnits="userSpaceOnUse" x1="1119.72" x2="1340.5"><stop offset="0" stop-color="#0024ff"/><stop offset=".218" stop-color="#0213ff"/><stop offset=".455" stop-color="#5b00ff"/><stop offset=".705" stop-color="#ce00ff"/><stop offset=".8" stop-color="#ff00fe"/><stop offset=".932" stop-color="#ff00c3"/><stop offset="1" stop-color="#ff00ac"/></linearGradient>
<linearGradient id="c230" gradientUnits="userSpaceOnUse" x1="1120.81" x2="1334.98"><stop offset="0" stop-color="#02f"/><stop offset=".215" stop-color="#0211ff"/><stop offset=".444" stop-color="#5400ff"/><stop offset=".706" stop-color="#c600ff"/><stop offset=".822" stop-color="#ff00fd"/><stop offset=".958" stop-color="#ff00c3"/><stop offset="1" stop-color="#ff00b5"/></linearGradient>
<linearGradient id="c231" gradientUnits="userSpaceOnUse" x1="1121.89" x2="1329.47"><stop offset="0" stop-color="#001fff"/><stop offset=".217" stop-color="#030fff"/><stop offset=".435" stop-color="#4e00ff"/><stop offset=".71" stop-color="#c000ff"/><stop offset=".845" stop-color="#ff00fc"/><stop offset=".986" stop-color="#ff00c2"/><stop offset="1" stop-color="#ff00be"/></linearGradient>
<linearGradient id="c232" gradientUnits="userSpaceOnUse" x1="1123" x2="1323.95"><stop offset="0" stop-color="#001dff"/><stop offset=".215" stop-color="#030dff"/><stop offset=".42" stop-color="#4700ff"/><stop offset=".705" stop-color="#b600ff"/><stop offset=".865" stop-color="#ff00fe"/><stop offset="1" stop-color="#ff00c7"/></linearGradient>
<linearGradient id="c233" gradientUnits="userSpaceOnUse" x1="1124.11" x2="1318.44"><stop offset="0" stop-color="#001bff"/><stop offset=".211" stop-color="#030cff"/><stop offset=".407" stop-color="#4000ff"/><stop offset=".711" stop-color="#b100ff"/><stop offset=".892" stop-color="#ff00fd"/><stop offset="1" stop-color="#ff00d1"/></linearGradient>
<linearGradient id="c234" gradientUnits="userSpaceOnUse" x1="1125.25" x2="1312.92"><stop offset="0" stop-color="#0019ff"/><stop offset=".209" stop-color="#020aff"/><stop offset=".396" stop-color="#3b00ff"/><stop offset=".711" stop-color="#a0f"/><stop offset=".914" stop-color="#ff00fe"/><stop offset="1" stop-color="#ff00dc"/></linearGradient>
<linearGradient id="c235" gradientUnits="userSpaceOnUse" x1="1126.39" x2="1307.41"><stop offset="0" stop-color="#0016ff"/><stop offset=".204" stop-color="#0209ff"/><stop offset=".381" stop-color="#3500ff"/><stop offset=".713" stop-color="#a300ff"/><stop offset=".945" stop-color="#ff00fd"/><stop offset="1" stop-color="#ff00e7"/></linearGradient>
<linearGradient id="c236" gradientUnits="userSpaceOnUse" x1="1127.56" x2="1301.9"><stop offset="0" stop-color="#0014ff"/><stop offset=".201" stop-color="#0207ff"/><stop offset=".374" stop-color="#3100ff"/><stop offset=".724" stop-color="#a000ff"/><stop offset=".977" stop-color="#ff00fc"/><stop offset="1" stop-color="#ff00f3"/></linearGradient>
<linearGradient id="c237" gradientUnits="userSpaceOnUse" x1="1128.77" x2="1296.38"><stop offset="0" stop-color="#0012ff"/><stop offset=".204" stop-color="#0305ff"/><stop offset=".395" stop-color="#3600ff"/><stop offset=".76" stop-color="#a600ff"/><stop offset="1" stop-color="#fe00ff"/></linearGradient>
<linearGradient id="c238" gradientUnits="userSpaceOnUse" x1="1130.02" x2="1290.87"><stop offset="0" stop-color="#000fff"/><stop offset=".2" stop-color="#0303ff"/><stop offset=".613" stop-color="#7100ff"/><stop offset=".962" stop-color="#e300ff"/><stop offset="1" stop-color="#f100ff"/></linearGradient>
<linearGradient id="c239" gradientUnits="userSpaceOnUse" x1="1131.33" x2="1285.35"><stop offset="0" stop-color="#000dff"/><stop offset=".195" stop-color="#0302ff"/><stop offset=".63" stop-color="#7100ff"/><stop offset="1" stop-color="#e400ff"/></linearGradient>
<linearGradient id="c240" gradientUnits="userSpaceOnUse" x1="1132.73" x2="1279.84"><stop offset="0" stop-color="#000bff"/><stop offset=".19" stop-color="#0300ff"/><stop offset=".646" stop-color="#7000ff"/><stop offset="1" stop-color="#d800ff"/></linearGradient>
<linearGradient id="c241" gradientUnits="userSpaceOnUse" x1="1134.18" x2="1274.32"><stop offset="0" stop-color="#0008ff"/><stop offset=".179" stop-color="#0200ff"/><stop offset=".664" stop-color="#7000ff"/><stop offset="1" stop-color="#c0f"/></linearGradient>
<linearGradient id="c242" gradientUnits="userSpaceOnUse" x1="1135.7" x2="1268.81"><stop offset="0" stop-color="#0006ff"/><stop offset=".173" stop-color="#0200ff"/><stop offset=".684" stop-color="#6f00ff"/><stop offset="1" stop-color="#c000ff"/></linearGradient>
<linearGradient id="c243" gradientUnits="userSpaceOnUse" x1="1137.3" x2="1263.29"><stop offset="0" stop-color="#0004ff"/><stop offset=".168" stop-color="#0300ff"/><stop offset=".712" stop-color="#7000ff"/><stop offset="1" stop-color="#b500ff"/></linearGradient>
<linearGradient id="c244" gradientUnits="userSpaceOnUse" x1="1138.98" x2="1257.78"><stop offset="0" stop-color="#0001ff"/><stop offset=".161" stop-color="#0300ff"/><stop offset=".737" stop-color="#7000ff"/><stop offset="1" stop-color="#a0f"/></linearGradient>
<linearGradient id="c245" gradientUnits="userSpaceOnUse" x1="1140.69" x2="1252.27"><stop offset="0" stop-color="#00f"/><stop offset=".144" stop-color="#0300ff"/><stop offset=".766" stop-color="#7000ff"/><stop offset="1" stop-color="#a000ff"/></linearGradient>
<linearGradient id="c246" gradientUnits="userSpaceOnUse" x1="1142.48" x2="1246.75"><stop offset="0" stop-color="#00f"/><stop offset=".135" stop-color="#0300ff"/><stop offset=".798" stop-color="#7000ff"/><stop offset="1" stop-color="#9600ff"/></linearGradient>
<linearGradient id="c247" gradientUnits="userSpaceOnUse" x1="1144.31" x2="1241.24"><stop offset="0" stop-color="#00f"/><stop offset=".125" stop-color="#0400ff"/><stop offset=".844" stop-color="#7100ff"/><stop offset="1" stop-color="#8c00ff"/></linearGradient>
<linearGradient id="c248" gradientUnits="userSpaceOnUse" x1="1146.18" x2="1235.72"><stop offset="0" stop-color="#00f"/><stop offset=".112" stop-color="#0500ff"/><stop offset=".899" stop-color="#7200ff"/><stop offset="1" stop-color="#8200ff"/></linearGradient>
<linearGradient id="c249" gradientUnits="userSpaceOnUse" x1="1148.12" x2="1230.21"><stop offset="0" stop-color="#00f"/><stop offset=".098" stop-color="#0500ff"/><stop offset=".951" stop-color="#7200ff"/><stop offset="1" stop-color="#7900ff"/></linearGradient>
<linearGradient id="c250" gradientUnits="userSpaceOnUse" x1="1150.11" x2="1224.69"><stop offset="0" stop-color="#00f"/><stop offset=".797" stop-color="#5700ff"/><stop offset="1" stop-color="#7000ff"/></linearGradient>
<linearGradient id="c251" gradientUnits="userSpaceOnUse" x1="1152.21" x2="1219.18"><stop offset="0" stop-color="#0200ff"/><stop offset="1" stop-color="#6700ff"/></linearGradient>
<linearGradient id="c252" gradientUnits="userSpaceOnUse" x1="1154.56" x2="1213.66"><stop offset="0" stop-color="#0600ff"/><stop offset="1" stop-color="#5f00ff"/></linearGradient>
<linearGradient id="c253" gradientUnits="userSpaceOnUse" x1="1157.33" x2="1208.15"><stop offset="0" stop-color="#0b00ff"/><stop offset="1" stop-color="#5600ff"/></linearGradient>
<linearGradient id="c254" gradientUnits="userSpaceOnUse" x1="1160.4" x2="1202.63"><stop offset="0" stop-color="#1000ff"/><stop offset="1" stop-color="#4e00ff"/></linearGradient>
<linearGradient id="c255" gradientUnits="userSpaceOnUse" x1="1163.27" x2="1197.12"><stop offset="0" stop-color="#1500ff"/><stop offset="1" stop-color="#4600ff"/></linearGradient>
<linearGradient id="c256" gradientUnits="userSpaceOnUse" x1="1166.25" x2="1191.61"><stop offset="0" stop-color="#1a00ff"/><stop offset="1" stop-color="#3f00ff"/></linearGradient>
<linearGradient id="c257" gradientUnits="userSpaceOnUse" x1="1169.17" x2="1186.09"><stop offset="0" stop-color="#1f00ff"/><stop offset="1" stop-color="#3700ff"/></linearGradient>
<linearGradient id="c258" gradientUnits="userSpaceOnUse" x1="1172.16" x2="1180.58"><stop offset="0" stop-color="#2400ff"/><stop offset="1" stop-color="#3000ff"/></linearGradient>
<clipPath id="ci"><rect x="1516.2" y="70" width="191" height="189.6"/></clipPath>
<linearGradient id="i0" gradientUnits="userSpaceOnUse" x1="1516.2" x2="1707.2"><stop offset="0" stop-color="#a1ff00"/><stop offset=".811" stop-color="#fffd00"/><stop offset="1" stop-color="#ffe700"/></linearGradient>
<linearGradient id="i1" gradientUnits="userSpaceOnUse" x1="1516.2" x2="1707.2"><stop offset="0" stop-color="#a2ff00"/><stop offset=".8" stop-color="#fffd00"/><stop offset="1" stop-color="#ffe600"/></linearGradient>
<linearGradient id="i2" gradientUnits="userSpaceOnUse" x1="1516.2" x2="1707.2"><stop offset="0" stop-color="#a3ff00"/><stop offset=".789" stop-color="#fffd00"/><stop offset="1" stop-color="#ffe500"/></linearGradient>
<linearGradient id="i3" gradientUnits="userSpaceOnUse" x1="1516.2" x2="1707.2"><stop offset="0" stop-color="#a3ff00"/><stop offset=".779" stop-color="#fffe00"/><stop offset="1" stop-color="#ffe400"/></linearGradient>
<linearGradient id="i4" gradientUnits="userSpaceOnUse" x1="1516.2" x2="1707.2"><stop offset="0" stop-color="#a4ff00"/><stop offset=".768" stop-color="#fffe00"/><stop offset="1" stop-color="#ffe200"/></linearGradient>
<linearGradient id="i5" gradientUnits="userSpaceOnUse" x1="1516.2" x2="1707.2"><stop offset="0" stop-color="#a5ff00"/><stop offset=".758" stop-color="#fffe00"/><stop offset="1" stop-color="#ffe100"/></linearGradient>
<linearGradient id="i6" gradientUnits="userSpaceOnUse" x1="1516.2" x2="1707.2"><stop offset="0" stop-color="#a6ff00"/><stop offset=".747" stop-color="#fffe00"/><stop offset="1" stop-color="#ffe000"/></linearGradient>
<linearGradient id="i7" gradientUnits="userSpaceOnUse" x1="1516.2" x2="1707.2"><stop offset="0" stop-color="#a7ff01"/><stop offset=".737" stop-color="#fffe00"/><stop offset="1" stop-color="#ffdf00"/></linearGradient>
<linearGradient id="i8" gradientUnits="userSpaceOnUse" x1="1516.2" x2="1707.2"><stop offset="0" stop-color="#a8ff01"/><stop offset=".726" stop-color="#fffe00"/><stop offset="1" stop-color="#ffde00"/></linearGradient>
<linearGradient id="i9" gradientUnits="userSpaceOnUse" x1="1516.2" x2="1707.2"><stop offset="0" stop-color="#a9ff02"/><stop offset=".726" stop-color="#fffd00"/><stop offset="1" stop-color="#fd0"/></linearGradient>
<linearGradient id="i10" gradientUnits="userSpaceOnUse" x1="1516.2" x2="1707.2"><stop offset="0" stop-color="#aaff02"/><stop offset=".716" stop-color="#fffd00"/><stop offset="1" stop-color="#ffdc00"/></linearGradient>
<linearGradient id="i11" gradientUnits="userSpaceOnUse" x1="1516.2" x2="1707.2"><stop offset="0" stop-color="#abff03"/><stop offset=".442" stop-color="#dfff00"/><stop offset=".705" stop-color="#fffd00"/><stop offset="1" stop-color="#ffdb00"/></linearGradient>
<linearGradient id="i12" gradientUnits="userSpaceOnUse" x1="1516.2" x2="1707.2"><stop offset="0" stop-color="#abff03"/><stop offset=".347" stop-color="#d4ff00"/><stop offset=".695" stop-color="#fffd00"/><stop offset="1" stop-color="#ffda00"/></linearGradient>
<linearGradient id="i13" gradientUnits="userSpaceOnUse" x1="1516.2" x2="1707.2"><stop offset="0" stop-color="#acff04"/><stop offset=".316" stop-color="#d2ff00"/><stop offset=".684" stop-color="#fffe00"/><stop offset="1" stop-color="#ffd900"/></linearGradient>
<linearGradient id="i14" gradientUnits="userSpaceOnUse" x1="1516.2" x2="1707.2"><stop offset="0" stop-color="#adff04"/><stop offset=".305" stop-color="#d1ff00"/><stop offset=".674" stop-color="#fffe00"/><stop offset="1" stop-color="#ffd800"/></linearGradient>
<linearGradient id="i15" gradientUnits="userSpaceOnUse" x1="1516.2" x2="1707.2"><stop offset="0" stop-color="#aeff05"/><stop offset=".316" stop-color="#d4ff00"/><stop offset=".663" stop-color="#fffe00"/><stop offset="1" stop-color="#ffd700"/></linearGradient>
<linearGradient id="i16" gradientUnits="userSpaceOnUse" x1="1516.2" x2="1707.2"><stop offset="0" stop-color="#afff05"/><stop offset=".316" stop-color="#d5ff00"/><stop offset=".653" stop-color="#fffe00"/><stop offset="1" stop-color="#ffd600"/></linearGradient>
<linearGradient id="i17" gradientUnits="userSpaceOnUse" x1="1516.2" x2="1707.2"><stop offset="0" stop-color="#b0ff06"/><stop offset=".337" stop-color="#d9ff00"/><stop offset=".642" stop-color="#fffe00"/><stop offset="1" stop-color="#ffd500"/></linearGradient>
<linearGradient id="i18" gradientUnits="userSpaceOnUse" x1="1516.2" x2="1707.2"><stop offset="0" stop-color="#b1ff06"/><stop offset=".347" stop-color="#dbff00"/><stop offset=".632" stop-color="#fffe00"/><stop offset="1" stop-color="#ffd400"/></linearGradient>
<linearGradient id="i19" gradientUnits="userSpaceOnUse" x1="1516.2" x2="1707.2"><stop offset="0" stop-color="#b2ff07"/><stop offset=".368" stop-color="#dfff00"/><stop offset=".632" stop-color="#fffd00"/><stop offset="1" stop-color="#ffd300"/></linearGradient>
<linearGradient id="i20" gradientUnits="userSpaceOnUse" x1="1516.2" x2="1707.2"><stop offset="0" stop-color="#b3ff07"/><stop offset=".379" stop-color="#e1ff00"/><stop offset=".621" stop-color="#fffd00"/><stop offset="1" stop-color="#ffd200"/></linearGradient>
<linearGradient id="i21" gradientUnits="userSpaceOnUse" x1="1516.2" x2="1707.2"><stop offset="0" stop-color="#b4ff08"/><stop offset=".4" stop-color="#e5ff00"/><stop offset=".611" stop-color="#fffd00"/><stop offset="1" stop-color="#ffd100"/></linearGradient>
<linearGradient id="i22" gradientUnits="userSpaceOnUse" x1="1516.2" x2="1707.2"><stop offset="0" stop-color="#b5ff08"/><stop offset=".411" stop-color="#e8ff00"/><stop offset=".6" stop-color="#fffd00"/><stop offset="1" stop-color="#ffd000"/></linearGradient>
<linearGradient id="i23" gradientUnits="userSpaceOnUse" x1="1516.2" x2="1707.2"><stop offset="0" stop-color="#b6ff09"/><stop offset=".432" stop-color="#ecff00"/><stop offset=".589" stop-color="#fffd00"/><stop offset="1" stop-color="#ffcf00"/></linearGradient>
<linearGradient id="i24" gradientUnits="userSpaceOnUse" x1="1516.2" x2="1707.2"><stop offset="0" stop-color="#b7ff0a"/><stop offset=".453" stop-color="#f0ff00"/><stop offset=".579" stop-color="#fffe00"/><stop offset="1" stop-color="#ffce00"/></linearGradient>
<linearGradient id="i25" gradientUnits="userSpaceOnUse" x1="1516.2" x2="1707.2"><stop offset="0" stop-color="#b8ff0a"/><stop offset=".463" stop-color="#f2ff00"/><stop offset=".568" stop-color="#fffe00"/><stop offset=".989" stop-color="#ffce00"/><stop offset="1" stop-color="#ffcd00"/></linearGradient>
<linearGradient id="i26" gradientUnits="userSpaceOnUse" x1="1516.2" x2="1707.2"><stop offset="0" stop-color="#b9ff0b"/><stop offset=".484" stop-color="#f6ff00"/><stop offset=".568" stop-color="#fffc00"/><stop offset=".989" stop-color="#ffcd00"/><stop offset="1" stop-color="#fc0"/></linearGradient>
<linearGradient id="i27" gradientUnits="userSpaceOnUse" x1="1516.2" x2="1707.2"><stop offset="0" stop-color="#baff0b"/><stop offset=".505" stop-color="#faff00"/><stop offset=".568" stop-color="#fffb00"/><stop offset="1" stop-color="#ffcb00"/></linearGradient>
<linearGradient id="i28" gradientUnits="userSpaceOnUse" x1="1516.2" x2="1707.2"><stop offset="0" stop-color="#bbff0c"/><stop offset=".526" stop-color="#feff00"/><stop offset=".979" stop-color="#fc0"/><stop offset="1" stop-color="#ffca00"/></linearGradient>
<linearGradient id="i29" gradientUnits="userSpaceOnUse" x1="1516.2" x2="1707.2"><stop offset="0" stop-color="#bcff0c"/><stop offset=".526" stop-color="#fffe00"/><stop offset=".947" stop-color="#ffce00"/><stop offset="1" stop-color="#ffc900"/></linearGradient>
<linearGradient id="i30" gradientUnits="userSpaceOnUse" x1="1516.2" x2="1707.2"><stop offset="0" stop-color="#bdff0d"/><stop offset=".526" stop-color="#fffd00"/><stop offset=".947" stop-color="#ffcd00"/><stop offset="1" stop-color="#ffc800"/></linearGradient>
<linearGradient id="i31" gradientUnits="userSpaceOnUse" x1="1516.2" x2="1707.2"><stop offset="0" stop-color="#beff0e"/><stop offset=".516" stop-color="#fffd00"/><stop offset=".937" stop-color="#ffcd00"/><stop offset="1" stop-color="#ffc700"/></linearGradient>
<linearGradient id="i32" gradientUnits="userSpaceOnUse" x1="1516.2" x2="1707.2"><stop offset="0" stop-color="#bfff0e"/><stop offset=".505" stop-color="#fffd00"/><stop offset=".926" stop-color="#ffcd00"/><stop offset="1" stop-color="#ffc600"/></linearGradient>
<linearGradient id="i33" gradientUnits="userSpaceOnUse" x1="1516.2" x2="1707.2"><stop offset="0" stop-color="#c0ff0f"/><stop offset=".495" stop-color="#fffd01"/><stop offset=".916" stop-color="#ffcd00"/><stop offset="1" stop-color="#ffc500"/></linearGradient>
<linearGradient id="i34" gradientUnits="userSpaceOnUse" x1="1516.2" x2="1707.2"><stop offset="0" stop-color="#c1ff0f"/><stop offset=".484" stop-color="#fffe02"/><stop offset=".895" stop-color="#ffce00"/><stop offset="1" stop-color="#ffc400"/></linearGradient>
<linearGradient id="i35" gradientUnits="userSpaceOnUse" x1="1516.2" x2="1707.2"><stop offset="0" stop-color="#c2ff10"/><stop offset=".474" stop-color="#fffe03"/><stop offset=".789" stop-color="#ffd700"/><stop offset="1" stop-color="#ffc300"/></linearGradient>
<linearGradient id="i36" gradientUnits="userSpaceOnUse" x1="1516.2" x2="1707.2"><stop offset="0" stop-color="#c3ff11"/><stop offset=".463" stop-color="#fffe04"/><stop offset=".737" stop-color="#ffdc00"/><stop offset="1" stop-color="#ffc200"/></linearGradient>
<linearGradient id="i37" gradientUnits="userSpaceOnUse" x1="1516.2" x2="1707.2"><stop offset="0" stop-color="#c4ff11"/><stop offset=".453" stop-color="#fffe05"/><stop offset=".737" stop-color="#ffdb00"/><stop offset="1" stop-color="#ffc100"/></linearGradient>
<linearGradient id="i38" gradientUnits="userSpaceOnUse" x1="1516.2" x2="1707.2"><stop offset="0" stop-color="#c5ff12"/><stop offset=".442" stop-color="#fffe06"/><stop offset=".737" stop-color="#ffda00"/><stop offset="1" stop-color="#ffc000"/></linearGradient>
<linearGradient id="i39" gradientUnits="userSpaceOnUse" x1="1516.2" x2="1707.2"><stop offset="0" stop-color="#c6ff12"/><stop offset=".432" stop-color="#fffe07"/><stop offset=".747" stop-color="#ffd800"/><stop offset="1" stop-color="#ffbf00"/></linearGradient>
<linearGradient id="i40" gradientUnits="userSpaceOnUse" x1="1516.2" x2="1707.2"><stop offset="0" stop-color="#c8ff13"/><stop offset=".421" stop-color="#fffe07"/><stop offset=".768" stop-color="#ffd400"/><stop offset="1" stop-color="#ffbe00"/></linearGradient>
<linearGradient id="i41" gradientUnits="userSpaceOnUse" x1="1516.2" x2="1707.2"><stop offset="0" stop-color="#c9ff14"/><stop offset=".421" stop-color="#fffd08"/><stop offset=".779" stop-color="#ffd200"/><stop offset="1" stop-color="#ffbd00"/></linearGradient>
<linearGradient id="i42" gradientUnits="userSpaceOnUse" x1="1516.2" x2="1707.2"><stop offset="0" stop-color="#caff14"/><stop offset=".411" stop-color="#fffd09"/><stop offset=".8" stop-color="#ffcf00"/><stop offset="1" stop-color="#ffbc00"/></linearGradient>
<linearGradient id="i43" gradientUnits="userSpaceOnUse" x1="1516.2" x2="1707.2"><stop offset="0" stop-color="#cbff15"/><stop offset=".4" stop-color="#fffd0a"/><stop offset=".811" stop-color="#ffcd00"/><stop offset="1" stop-color="#fb0"/></linearGradient>
<linearGradient id="i44" gradientUnits="userSpaceOnUse" x1="1516.2" x2="1707.2"><stop offset="0" stop-color="#ccff15"/><stop offset=".389" stop-color="#fffd0b"/><stop offset=".8" stop-color="#ffcd00"/><stop offset="1" stop-color="#ffba00"/></linearGradient>
<linearGradient id="i45" gradientUnits="userSpaceOnUse" x1="1516.2" x2="1707.2"><stop offset="0" stop-color="#cdff16"/><stop offset=".379" stop-color="#fffe0c"/><stop offset=".789" stop-color="#ffcd00"/><stop offset="1" stop-color="#ffb900"/></linearGradient>
<linearGradient id="i46" gradientUnits="userSpaceOnUse" x1="1516.2" x2="1707.2"><stop offset="0" stop-color="#ceff17"/><stop offset=".368" stop-color="#fffe0d"/><stop offset=".768" stop-color="#ffce01"/><stop offset="1" stop-color="#ffb800"/></linearGradient>
<linearGradient id="i47" gradientUnits="userSpaceOnUse" x1="1516.2" x2="1707.2"><stop offset="0" stop-color="#cfff17"/><stop offset=".358" stop-color="#fffe0e"/><stop offset=".758" stop-color="#ffce01"/><stop offset="1" stop-color="#ffb700"/></linearGradient>
<linearGradient id="i48" gradientUnits="userSpaceOnUse" x1="1516.2" x2="1707.2"><stop offset="0" stop-color="#d0ff18"/><stop offset=".347" stop-color="#fffe0f"/><stop offset=".747" stop-color="#ffce02"/><stop offset="1" stop-color="#ffb600"/></linearGradient>
<linearGradient id="i49" gradientUnits="userSpaceOnUse" x1="1516.2" x2="1707.2"><stop offset="0" stop-color="#d2ff19"/><stop offset=".337" stop-color="#fffe0f"/><stop offset=".737" stop-color="#ffce03"/><stop offset="1" stop-color="#ffb500"/></linearGradient>
<linearGradient id="i50" gradientUnits="userSpaceOnUse" x1="1516.2" x2="1707.2"><stop offset="0" stop-color="#d3ff19"/><stop offset=".326" stop-color="#fffe10"/><stop offset=".726" stop-color="#ffce04"/><stop offset="1" stop-color="#ffb400"/></linearGradient>
<linearGradient id="i51" gradientUnits="userSpaceOnUse" x1="1516.2" x2="1707.2"><stop offset="0" stop-color="#d4ff1a"/><stop offset=".326" stop-color="#fffd11"/><stop offset=".726" stop-color="#ffcd04"/><stop offset="1" stop-color="#ffb300"/></linearGradient>
<linearGradient id="i52" gradientUnits="userSpaceOnUse" x1="1516.2" x2="1707.2"><stop offset="0" stop-color="#d5ff1b"/><stop offset=".316" stop-color="#fffd12"/><stop offset=".716" stop-color="#ffcd05"/><stop offset="1" stop-color="#ffb300"/></linearGradient>
<linearGradient id="i53" gradientUnits="userSpaceOnUse" x1="1516.2" x2="1707.2"><stop offset="0" stop-color="#d6ff1b"/><stop offset=".305" stop-color="#fffd13"/><stop offset=".705" stop-color="#ffcd06"/><stop offset="1" stop-color="#ffb200"/></linearGradient>
<linearGradient id="i54" gradientUnits="userSpaceOnUse" x1="1516.2" x2="1707.2"><stop offset="0" stop-color="#d7ff1c"/><stop offset=".295" stop-color="#fffd14"/><stop offset=".695" stop-color="#ffcd07"/><stop offset="1" stop-color="#ffb100"/></linearGradient>
<linearGradient id="i55" gradientUnits="userSpaceOnUse" x1="1516.2" x2="1707.2"><stop offset="0" stop-color="#d9ff1d"/><stop offset=".284" stop-color="#fffe15"/><stop offset=".684" stop-color="#ffcd07"/><stop offset="1" stop-color="#ffb000"/></linearGradient>
<linearGradient id="i56" gradientUnits="userSpaceOnUse" x1="1516.2" x2="1707.2"><stop offset="0" stop-color="#daff1d"/><stop offset=".274" stop-color="#fffe16"/><stop offset=".674" stop-color="#ffcd08"/><stop offset="1" stop-color="#ffaf00"/></linearGradient>
<linearGradient id="i57" gradientUnits="userSpaceOnUse" x1="1516.2" x2="1707.2"><stop offset="0" stop-color="#dbff1e"/><stop offset=".263" stop-color="#fffe17"/><stop offset=".653" stop-color="#ffce09"/><stop offset="1" stop-color="#ffae00"/></linearGradient>
<linearGradient id="i58" gradientUnits="userSpaceOnUse" x1="1516.2" x2="1707.2"><stop offset="0" stop-color="#dcff1f"/><stop offset=".253" stop-color="#fffe18"/><stop offset=".642" stop-color="#ffce0a"/><stop offset="1" stop-color="#ffad01"/></linearGradient>
<linearGradient id="i59" gradientUnits="userSpaceOnUse" x1="1516.2" x2="1707.2"><stop offset="0" stop-color="#deff1f"/><stop offset=".242" stop-color="#fffe19"/><stop offset=".632" stop-color="#ffce0b"/><stop offset="1" stop-color="#ffac01"/></linearGradient>
<linearGradient id="i60" gradientUnits="userSpaceOnUse" x1="1516.2" x2="1707.2"><stop offset="0" stop-color="#dfff20"/><stop offset=".232" stop-color="#fffe1a"/><stop offset=".621" stop-color="#ffce0c"/><stop offset="1" stop-color="#ffab02"/></linearGradient>
<linearGradient id="i61" gradientUnits="userSpaceOnUse" x1="1516.2" x2="1707.2"><stop offset="0" stop-color="#e0ff21"/><stop offset=".232" stop-color="#fffd1a"/><stop offset=".621" stop-color="#ffcd0c"/><stop offset="1" stop-color="#ffaa02"/></linearGradient>
<linearGradient id="i62" gradientUnits="userSpaceOnUse" x1="1516.2" x2="1707.2"><stop offset="0" stop-color="#e1ff22"/><stop offset=".221" stop-color="#fffd1b"/><stop offset=".611" stop-color="#ffcd0d"/><stop offset="1" stop-color="#ffa903"/></linearGradient>
<linearGradient id="i63" gradientUnits="userSpaceOnUse" x1="1516.2" x2="1707.2"><stop offset="0" stop-color="#e2ff22"/><stop offset=".211" stop-color="#fffe1c"/><stop offset=".6" stop-color="#ffcd0e"/><stop offset="1" stop-color="#ffa903"/></linearGradient>
</defs>
<rect x="0" y="0" width="1716" height="885" fill="#323232"/>
<rect x="0" y="0" width="1716" height="1.1" fill="#1e1e1e"/>
<text x="21.8" y="83.4" font-size="38.6" textLength="337" lengthAdjust="spacingAndGlyphs" fill="#f0f0f0">Saturation Sweeps</text>
<rect x="46.5" y="156.8" width="261.8" height="458.75" fill="#232323"/>
<rect x="46.5" y="568.9" width="261.8" height="1.6" fill="#9c9c9c"/>
<rect x="46.5" y="523.05" width="261.8" height="1.6" fill="#9c9c9c"/>
<rect x="46.5" y="477.2" width="261.8" height="1.6" fill="#9c9c9c"/>
<rect x="46.5" y="431.35" width="261.8" height="1.6" fill="#9c9c9c"/>
<rect x="46.5" y="385.5" width="261.8" height="1.6" fill="#9c9c9c"/>
<rect x="46.5" y="339.6" width="261.8" height="1.6" fill="#9c9c9c"/>
<rect x="46.5" y="293.7" width="261.8" height="1.6" fill="#9c9c9c"/>
<rect x="46.5" y="247.8" width="261.8" height="1.6" fill="#9c9c9c"/>
<rect x="46.5" y="201.9" width="261.8" height="1.6" fill="#9c9c9c"/>
<rect x="73.9" y="386.2" width="68.7" height="69.1" fill="url(#gR)" stroke="#000" stroke-width="1.2"/>
<rect x="144" y="366.6" width="68.4" height="19.4" fill="url(#gG)" stroke="#000" stroke-width="1.2"/>
<rect x="213.6" y="386.2" width="69" height="228.2" fill="url(#gB)" stroke="#000" stroke-width="1.2"/>
<rect x="45.9" y="155.5" width="263" height="2.6" fill="#8e8e8e"/>
<rect x="45.8" y="156.8" width="1.4" height="463.75" fill="#949494"/>
<rect x="307.6" y="156.8" width="1.4" height="463.75" fill="#949494"/>
<rect x="46.5" y="614.75" width="261.8" height="1.6" fill="#a0a0a0"/>
<rect x="41" y="614.65" width="5.5" height="1.8" fill="#dcdcdc"/>
<text x="41.2" y="621.25" font-size="15.8" text-anchor="end" textLength="21.69" lengthAdjust="spacingAndGlyphs" fill="#d6d6d6">-50</text>
<rect x="41" y="568.8" width="5.5" height="1.8" fill="#dcdcdc"/>
<text x="41.2" y="575.4" font-size="15.8" text-anchor="end" textLength="21.69" lengthAdjust="spacingAndGlyphs" fill="#d6d6d6">-40</text>
<rect x="41" y="522.95" width="5.5" height="1.8" fill="#dcdcdc"/>
<text x="41.2" y="529.55" font-size="15.8" text-anchor="end" textLength="21.69" lengthAdjust="spacingAndGlyphs" fill="#d6d6d6">-30</text>
<rect x="41" y="477.1" width="5.5" height="1.8" fill="#dcdcdc"/>
<text x="41.2" y="483.7" font-size="15.8" text-anchor="end" textLength="21.69" lengthAdjust="spacingAndGlyphs" fill="#d6d6d6">-20</text>
<rect x="41" y="431.25" width="5.5" height="1.8" fill="#dcdcdc"/>
<text x="41.2" y="437.85" font-size="15.8" text-anchor="end" textLength="21.69" lengthAdjust="spacingAndGlyphs" fill="#d6d6d6">-10</text>
<rect x="41" y="385.4" width="5.5" height="1.8" fill="#dcdcdc"/>
<text x="41.2" y="392" font-size="15.8" text-anchor="end" textLength="8.35" lengthAdjust="spacingAndGlyphs" fill="#d6d6d6">0</text>
<rect x="41" y="339.5" width="5.5" height="1.8" fill="#dcdcdc"/>
<text x="41.2" y="346.1" font-size="15.8" text-anchor="end" textLength="16.69" lengthAdjust="spacingAndGlyphs" fill="#d6d6d6">10</text>
<rect x="41" y="293.6" width="5.5" height="1.8" fill="#dcdcdc"/>
<text x="41.2" y="300.2" font-size="15.8" text-anchor="end" textLength="16.69" lengthAdjust="spacingAndGlyphs" fill="#d6d6d6">20</text>
<rect x="41" y="247.7" width="5.5" height="1.8" fill="#dcdcdc"/>
<text x="41.2" y="254.3" font-size="15.8" text-anchor="end" textLength="16.69" lengthAdjust="spacingAndGlyphs" fill="#d6d6d6">30</text>
<rect x="41" y="201.8" width="5.5" height="1.8" fill="#dcdcdc"/>
<text x="41.2" y="208.4" font-size="15.8" text-anchor="end" textLength="16.69" lengthAdjust="spacingAndGlyphs" fill="#d6d6d6">40</text>
<rect x="41" y="155.9" width="5.5" height="1.8" fill="#dcdcdc"/>
<text x="41.2" y="162.5" font-size="15.8" text-anchor="end" textLength="16.69" lengthAdjust="spacingAndGlyphs" fill="#d6d6d6">50</text>
<text x="121" y="150.2" font-size="14.9" textLength="86" lengthAdjust="spacingAndGlyphs" fill="#d6d6d6">RGB Balance</text>
<text x="177.6" y="632.5" font-size="15.6" text-anchor="middle" textLength="37.9" lengthAdjust="spacingAndGlyphs" fill="#d6d6d6">100%</text>
<rect x="411.8" y="72.5" width="141.5" height="276.3" fill="#232323"/>
<rect x="411.8" y="303.45" width="141.5" height="1.1" fill="#8a8a8a"/>
<rect x="411.8" y="256.95" width="141.5" height="1.1" fill="#8a8a8a"/>
<rect x="411.8" y="210.25" width="141.5" height="1.1" fill="#8a8a8a"/>
<rect x="411.8" y="164.55" width="141.5" height="1.1" fill="#8a8a8a"/>
<rect x="411.8" y="118.45" width="141.5" height="1.1" fill="#8a8a8a"/>
<rect x="425.4" y="209.7" width="113.4" height="2.02" fill="#000" stroke="#000" stroke-width="1.2"/>
<rect x="411.8" y="116.55" width="141.5" height="1.7" fill="#fc1010"/>
<rect x="411.8" y="301.85" width="141.5" height="1.7" fill="#fc1010"/>
<rect x="411.8" y="181.85" width="141.5" height="1.5" fill="#f6f600"/>
<rect x="411.8" y="236.95" width="141.5" height="1.5" fill="#f6f600"/>
<rect x="411.8" y="200.1" width="141.5" height="1.6" fill="#0a7c0a"/>
<rect x="411.8" y="218.2" width="141.5" height="1.6" fill="#0a7c0a"/>
<rect x="411.3" y="71.75" width="142.5" height="1.5" fill="#8e8e8e"/>
<rect x="411.25" y="72.5" width="1.1" height="281.3" fill="#a0a0a0"/>
<rect x="552.75" y="72.5" width="1.1" height="281.3" fill="#a0a0a0"/>
<rect x="411.8" y="348.15" width="141.5" height="1.3" fill="#a4a4a4"/>
<rect x="405.8" y="348.1" width="6" height="1.4" fill="#dcdcdc"/>
<text x="406.2" y="354.3" font-size="15.8" text-anchor="end" textLength="21.81" lengthAdjust="spacingAndGlyphs" fill="#d6d6d6">-15</text>
<rect x="405.8" y="303.3" width="6" height="1.4" fill="#dcdcdc"/>
<text x="406.2" y="309.5" font-size="15.8" text-anchor="end" textLength="21.81" lengthAdjust="spacingAndGlyphs" fill="#d6d6d6">-10</text>
<rect x="405.8" y="256.8" width="6" height="1.4" fill="#dcdcdc"/>
<text x="406.2" y="263" font-size="15.8" text-anchor="end" textLength="13.42" lengthAdjust="spacingAndGlyphs" fill="#d6d6d6">-5</text>
<rect x="405.8" y="210.1" width="6" height="1.4" fill="#dcdcdc"/>
<text x="406.2" y="216.3" font-size="15.8" text-anchor="end" textLength="8.39" lengthAdjust="spacingAndGlyphs" fill="#d6d6d6">0</text>
<rect x="405.8" y="164.4" width="6" height="1.4" fill="#dcdcdc"/>
<text x="406.2" y="170.6" font-size="15.8" text-anchor="end" textLength="8.39" lengthAdjust="spacingAndGlyphs" fill="#d6d6d6">5</text>
<rect x="405.8" y="118.3" width="6" height="1.4" fill="#dcdcdc"/>
<text x="406.2" y="124.5" font-size="15.8" text-anchor="end" textLength="16.78" lengthAdjust="spacingAndGlyphs" fill="#d6d6d6">10</text>
<rect x="405.8" y="71.8" width="6" height="1.4" fill="#dcdcdc"/>
<text x="406.2" y="78" font-size="15.8" text-anchor="end" textLength="16.78" lengthAdjust="spacingAndGlyphs" fill="#d6d6d6">15</text>
<text x="469.3" y="65.9" font-size="14.9" text-anchor="middle" textLength="43.5" lengthAdjust="spacingAndGlyphs" fill="#d6d6d6">DeltaL</text>
<text x="483.55" y="364.8" font-size="15.6" text-anchor="middle" textLength="37.9" lengthAdjust="spacingAndGlyphs" fill="#d6d6d6">100%</text>
<rect x="607.8" y="72.5" width="142.6" height="276.3" fill="#232323"/>
<rect x="607.8" y="303.45" width="142.6" height="1.1" fill="#8a8a8a"/>
<rect x="607.8" y="256.95" width="142.6" height="1.1" fill="#8a8a8a"/>
<rect x="607.8" y="210.25" width="142.6" height="1.1" fill="#8a8a8a"/>
<rect x="607.8" y="164.55" width="142.6" height="1.1" fill="#8a8a8a"/>
<rect x="607.8" y="118.45" width="142.6" height="1.1" fill="#8a8a8a"/>
<rect x="622.2" y="117.6" width="112.3" height="92.74" fill="url(#gY)" stroke="#000" stroke-width="1.2"/>
<rect x="607.8" y="116.55" width="142.6" height="1.7" fill="#fc1010"/>
<rect x="607.8" y="301.85" width="142.6" height="1.7" fill="#fc1010"/>
<rect x="607.8" y="181.85" width="142.6" height="1.5" fill="#f6f600"/>
<rect x="607.8" y="236.95" width="142.6" height="1.5" fill="#f6f600"/>
<rect x="607.8" y="200.1" width="142.6" height="1.6" fill="#0a7c0a"/>
<rect x="607.8" y="218.2" width="142.6" height="1.6" fill="#0a7c0a"/>
<rect x="607.3" y="71.75" width="143.6" height="1.5" fill="#8e8e8e"/>
<rect x="607.25" y="72.5" width="1.1" height="281.3" fill="#a0a0a0"/>
<rect x="749.85" y="72.5" width="1.1" height="281.3" fill="#a0a0a0"/>
<rect x="607.8" y="348.15" width="142.6" height="1.3" fill="#a4a4a4"/>
<rect x="601.8" y="348.1" width="6" height="1.4" fill="#dcdcdc"/>
<text x="602.2" y="354.3" font-size="15.8" text-anchor="end" textLength="21.81" lengthAdjust="spacingAndGlyphs" fill="#d6d6d6">-15</text>
<rect x="601.8" y="303.3" width="6" height="1.4" fill="#dcdcdc"/>
<text x="602.2" y="309.5" font-size="15.8" text-anchor="end" textLength="21.81" lengthAdjust="spacingAndGlyphs" fill="#d6d6d6">-10</text>
<rect x="601.8" y="256.8" width="6" height="1.4" fill="#dcdcdc"/>
<text x="602.2" y="263" font-size="15.8" text-anchor="end" textLength="13.42" lengthAdjust="spacingAndGlyphs" fill="#d6d6d6">-5</text>
<rect x="601.8" y="210.1" width="6" height="1.4" fill="#dcdcdc"/>
<text x="602.2" y="216.3" font-size="15.8" text-anchor="end" textLength="8.39" lengthAdjust="spacingAndGlyphs" fill="#d6d6d6">0</text>
<rect x="601.8" y="164.4" width="6" height="1.4" fill="#dcdcdc"/>
<text x="602.2" y="170.6" font-size="15.8" text-anchor="end" textLength="8.39" lengthAdjust="spacingAndGlyphs" fill="#d6d6d6">5</text>
<rect x="601.8" y="118.3" width="6" height="1.4" fill="#dcdcdc"/>
<text x="602.2" y="124.5" font-size="15.8" text-anchor="end" textLength="16.78" lengthAdjust="spacingAndGlyphs" fill="#d6d6d6">10</text>
<rect x="601.8" y="71.8" width="6" height="1.4" fill="#dcdcdc"/>
<text x="602.2" y="78" font-size="15.8" text-anchor="end" textLength="16.78" lengthAdjust="spacingAndGlyphs" fill="#d6d6d6">15</text>
<text x="665.8" y="65.9" font-size="14.9" text-anchor="middle" textLength="46" lengthAdjust="spacingAndGlyphs" fill="#d6d6d6">DeltaC</text>
<text x="680.1" y="364.8" font-size="15.6" text-anchor="middle" textLength="37.9" lengthAdjust="spacingAndGlyphs" fill="#d6d6d6">100%</text>
<rect x="804.9" y="72.5" width="141.7" height="276.3" fill="#232323"/>
<rect x="804.9" y="303.45" width="141.7" height="1.1" fill="#8a8a8a"/>
<rect x="804.9" y="256.95" width="141.7" height="1.1" fill="#8a8a8a"/>
<rect x="804.9" y="210.25" width="141.7" height="1.1" fill="#8a8a8a"/>
<rect x="804.9" y="164.55" width="141.7" height="1.1" fill="#8a8a8a"/>
<rect x="804.9" y="118.45" width="141.7" height="1.1" fill="#8a8a8a"/>
<rect x="818.9" y="152.38" width="111.6" height="57.96" fill="url(#gY)" stroke="#000" stroke-width="1.2"/>
<rect x="804.9" y="116.55" width="141.7" height="1.7" fill="#fc1010"/>
<rect x="804.9" y="301.85" width="141.7" height="1.7" fill="#fc1010"/>
<rect x="804.9" y="181.85" width="141.7" height="1.5" fill="#f6f600"/>
<rect x="804.9" y="236.95" width="141.7" height="1.5" fill="#f6f600"/>
<rect x="804.9" y="200.1" width="141.7" height="1.6" fill="#0a7c0a"/>
<rect x="804.9" y="218.2" width="141.7" height="1.6" fill="#0a7c0a"/>
<rect x="804.4" y="71.75" width="142.7" height="1.5" fill="#8e8e8e"/>
<rect x="804.35" y="72.5" width="1.1" height="281.3" fill="#a0a0a0"/>
<rect x="946.05" y="72.5" width="1.1" height="281.3" fill="#a0a0a0"/>
<rect x="804.9" y="348.15" width="141.7" height="1.3" fill="#a4a4a4"/>
<rect x="798.9" y="348.1" width="6" height="1.4" fill="#dcdcdc"/>
<text x="799.3" y="354.3" font-size="15.8" text-anchor="end" textLength="21.81" lengthAdjust="spacingAndGlyphs" fill="#d6d6d6">-15</text>
<rect x="798.9" y="303.3" width="6" height="1.4" fill="#dcdcdc"/>
<text x="799.3" y="309.5" font-size="15.8" text-anchor="end" textLength="21.81" lengthAdjust="spacingAndGlyphs" fill="#d6d6d6">-10</text>
<rect x="798.9" y="256.8" width="6" height="1.4" fill="#dcdcdc"/>
<text x="799.3" y="263" font-size="15.8" text-anchor="end" textLength="13.42" lengthAdjust="spacingAndGlyphs" fill="#d6d6d6">-5</text>
<rect x="798.9" y="210.1" width="6" height="1.4" fill="#dcdcdc"/>
<text x="799.3" y="216.3" font-size="15.8" text-anchor="end" textLength="8.39" lengthAdjust="spacingAndGlyphs" fill="#d6d6d6">0</text>
<rect x="798.9" y="164.4" width="6" height="1.4" fill="#dcdcdc"/>
<text x="799.3" y="170.6" font-size="15.8" text-anchor="end" textLength="8.39" lengthAdjust="spacingAndGlyphs" fill="#d6d6d6">5</text>
<rect x="798.9" y="118.3" width="6" height="1.4" fill="#dcdcdc"/>
<text x="799.3" y="124.5" font-size="15.8" text-anchor="end" textLength="16.78" lengthAdjust="spacingAndGlyphs" fill="#d6d6d6">10</text>
<rect x="798.9" y="71.8" width="6" height="1.4" fill="#dcdcdc"/>
<text x="799.3" y="78" font-size="15.8" text-anchor="end" textLength="16.78" lengthAdjust="spacingAndGlyphs" fill="#d6d6d6">15</text>
<text x="861.7" y="65.9" font-size="14.9" text-anchor="middle" textLength="46.91" lengthAdjust="spacingAndGlyphs" fill="#d6d6d6">DeltaH</text>
<text x="876.75" y="364.8" font-size="15.6" text-anchor="middle" textLength="37.9" lengthAdjust="spacingAndGlyphs" fill="#d6d6d6">100%</text>
<rect x="343" y="382" width="638.2" height="169" fill="#000"/>
<rect x="364" y="390" width="107" height="59.6" fill="#fff"/>
<rect x="365.7" y="391.7" width="103.6" height="56.2" fill="#b0c5a0" stroke="#8a9060" stroke-width="1"/>
<rect x="364" y="466" width="107" height="60.8" fill="#fff"/>
<rect x="365.7" y="467.7" width="103.6" height="57.4" fill="#c0c1a4" stroke="#8a9060" stroke-width="1"/>
<text x="417.8" y="541.8" font-size="12.9" text-anchor="middle" textLength="24.01" lengthAdjust="spacingAndGlyphs" fill="#fff" stroke="#fff" stroke-width="0.45">20%</text>
<rect x="489" y="390" width="107" height="59.6" fill="#fff"/>
<rect x="490.7" y="391.7" width="103.6" height="56.2" fill="#b1c584" stroke="#8a9060" stroke-width="1"/>
<rect x="489" y="466" width="107" height="60.8" fill="#fff"/>
<rect x="490.7" y="467.7" width="103.6" height="57.4" fill="#c1c088" stroke="#8a9060" stroke-width="1"/>
<text x="542.8" y="541.8" font-size="12.9" text-anchor="middle" textLength="24.01" lengthAdjust="spacingAndGlyphs" fill="#fff" stroke="#fff" stroke-width="0.45">40%</text>
<rect x="614" y="390" width="107" height="59.6" fill="#fff"/>
<rect x="615.7" y="391.7" width="103.6" height="56.2" fill="#b0c264" stroke="#8a9060" stroke-width="1"/>
<rect x="614" y="466" width="107" height="60.8" fill="#fff"/>
<rect x="615.7" y="467.7" width="103.6" height="57.4" fill="#bfbe6a" stroke="#8a9060" stroke-width="1"/>
<text x="667.8" y="541.8" font-size="12.9" text-anchor="middle" textLength="24.01" lengthAdjust="spacingAndGlyphs" fill="#fff" stroke="#fff" stroke-width="0.45">60%</text>
<rect x="739" y="390" width="107" height="59.6" fill="#fff"/>
<rect x="740.7" y="391.7" width="103.6" height="56.2" fill="#b1c23e" stroke="#8a9060" stroke-width="1"/>
<rect x="739" y="466" width="107" height="60.8" fill="#fff"/>
<rect x="740.7" y="467.7" width="103.6" height="57.4" fill="#c0bf4f" stroke="#8a9060" stroke-width="1"/>
<text x="792.8" y="541.8" font-size="12.9" text-anchor="middle" textLength="24.01" lengthAdjust="spacingAndGlyphs" fill="#fff" stroke="#fff" stroke-width="0.45">80%</text>
<rect x="864" y="390" width="107" height="59.6" fill="#fff"/>
<rect x="865.7" y="391.7" width="103.6" height="56.2" fill="#b5c203" stroke="#8a9060" stroke-width="1"/>
<rect x="864" y="466" width="107" height="60.8" fill="#fff"/>
<rect x="865.7" y="467.7" width="103.6" height="57.4" fill="#c1be33" stroke="#8a9060" stroke-width="1"/>
<text x="917.8" y="541.8" font-size="12.9" text-anchor="middle" textLength="30.68" lengthAdjust="spacingAndGlyphs" fill="#fff" stroke="#fff" stroke-width="0.45">100%</text>
<text transform="translate(356.6 420.1) rotate(-90)" font-size="13.2" text-anchor="middle" fill="#fff" stroke="#fff" stroke-width="0.45" textLength="35.3" lengthAdjust="spacingAndGlyphs">Actual</text>
<text transform="translate(356.6 496.8) rotate(-90)" font-size="13.2" text-anchor="middle" fill="#fff" stroke="#fff" stroke-width="0.45" textLength="35.3" lengthAdjust="spacingAndGlyphs">Target</text>
<rect x="357.3" y="584.2" width="623.9" height="255" fill="#232323"/>
<rect x="357.3" y="787.55" width="623.9" height="1.3" fill="#8c8c8c"/>
<rect x="357.3" y="736.55" width="623.9" height="1.3" fill="#8c8c8c"/>
<rect x="357.3" y="685.55" width="623.9" height="1.3" fill="#8c8c8c"/>
<rect x="357.3" y="634.55" width="623.9" height="1.3" fill="#8c8c8c"/>
<rect x="357.3" y="583.55" width="623.9" height="1.3" fill="#8c8c8c"/>
<rect x="434.7" y="586.24" width="9.6" height="252.96" fill="url(#gW)" stroke="#000" stroke-width="1.5"/>
<rect x="472.4" y="723.69" width="9.6" height="115.51" fill="url(#g20R)" stroke="#000" stroke-width="1.6"/>
<rect x="483.6" y="744.85" width="9.6" height="94.35" fill="url(#g20G)" stroke="#000" stroke-width="1.6"/>
<rect x="494.8" y="691.3" width="9.6" height="147.9" fill="url(#g20B)" stroke="#000" stroke-width="1.6"/>
<rect x="506" y="691.3" width="9.6" height="147.9" fill="url(#g20C)" stroke="#000" stroke-width="1.6"/>
<rect x="517.2" y="699.97" width="9.6" height="139.23" fill="url(#g20M)" stroke="#000" stroke-width="1.6"/>
<rect x="528.4" y="660.7" width="9.6" height="178.5" fill="url(#g20Y)" stroke="#000" stroke-width="1.6"/>
<rect x="576.5" y="755.82" width="9.6" height="83.38" fill="url(#g40R)" stroke="#000" stroke-width="1.6"/>
<rect x="587.7" y="781.32" width="9.6" height="57.88" fill="url(#g40G)" stroke="#000" stroke-width="1.6"/>
<rect x="598.9" y="750.72" width="9.6" height="88.49" fill="url(#g40B)" stroke="#000" stroke-width="1.6"/>
<rect x="610.1" y="671.92" width="9.6" height="167.28" fill="url(#g40C)" stroke="#000" stroke-width="1.6"/>
<rect x="621.3" y="746.89" width="9.6" height="92.31" fill="url(#g40M)" stroke="#000" stroke-width="1.6"/>
<rect x="632.5" y="708.64" width="9.6" height="130.56" fill="url(#g40Y)" stroke="#000" stroke-width="1.6"/>
<rect x="680.6" y="757.6" width="9.6" height="81.6" fill="url(#g60R)" stroke="#000" stroke-width="1.6"/>
<rect x="691.8" y="793.56" width="9.6" height="45.64" fill="url(#g60G)" stroke="#000" stroke-width="1.6"/>
<rect x="703" y="778.25" width="9.6" height="60.95" fill="url(#g60B)" stroke="#000" stroke-width="1.6"/>
<rect x="714.2" y="769.59" width="9.6" height="69.62" fill="url(#g60C)" stroke="#000" stroke-width="1.6"/>
<rect x="725.4" y="757.6" width="9.6" height="81.6" fill="url(#g60M)" stroke="#000" stroke-width="1.6"/>
<rect x="736.6" y="723.69" width="9.6" height="115.51" fill="url(#g60Y)" stroke="#000" stroke-width="1.6"/>
<rect x="784.4" y="755.56" width="9.6" height="83.64" fill="url(#g80R)" stroke="#000" stroke-width="1.6"/>
<rect x="795.6" y="788.71" width="9.6" height="50.49" fill="url(#g80G)" stroke="#000" stroke-width="1.6"/>
<rect x="806.8" y="804.78" width="9.6" height="34.42" fill="url(#g80B)" stroke="#000" stroke-width="1.6"/>
<rect x="818" y="785.14" width="9.6" height="54.06" fill="url(#g80C)" stroke="#000" stroke-width="1.6"/>
<rect x="829.2" y="762.7" width="9.6" height="76.5" fill="url(#g80M)" stroke="#000" stroke-width="1.6"/>
<rect x="840.4" y="732.1" width="9.6" height="107.1" fill="url(#g80Y)" stroke="#000" stroke-width="1.6"/>
<rect x="888" y="751.74" width="9.6" height="87.47" fill="url(#g100R)" stroke="#000" stroke-width="1.6"/>
<rect x="899.2" y="789.73" width="9.6" height="49.47" fill="url(#g100G)" stroke="#000" stroke-width="1.6"/>
<rect x="910.4" y="793.56" width="9.6" height="45.64" fill="url(#g100B)" stroke="#000" stroke-width="1.6"/>
<rect x="921.6" y="797.89" width="9.6" height="41.31" fill="url(#g100C)" stroke="#000" stroke-width="1.6"/>
<rect x="932.8" y="771.37" width="9.6" height="67.83" fill="url(#g100M)" stroke="#000" stroke-width="1.6"/>
<rect x="944" y="743.32" width="9.6" height="95.88" fill="url(#g100Y)" stroke="#000" stroke-width="1.6"/>
<rect x="357.3" y="761.65" width="623.9" height="1.7" fill="#f8f800"/>
<rect x="357.3" y="813.5" width="623.9" height="1.6" fill="#0a7c0a"/>
<rect x="357.3" y="582.4" width="623.9" height="1" fill="#c05050"/>
<rect x="356.65" y="584.2" width="1.3" height="260" fill="#949494"/>
<rect x="980.55" y="584.2" width="1.3" height="260" fill="#949494"/>
<rect x="357.3" y="838.5" width="623.9" height="1.4" fill="#a0a0a0"/>
<rect x="460.65" y="839.2" width="1.3" height="5.5" fill="#c0c0c0"/>
<rect x="564.65" y="839.2" width="1.3" height="5.5" fill="#c0c0c0"/>
<rect x="668.65" y="839.2" width="1.3" height="5.5" fill="#c0c0c0"/>
<rect x="772.65" y="839.2" width="1.3" height="5.5" fill="#c0c0c0"/>
<rect x="876.65" y="839.2" width="1.3" height="5.5" fill="#c0c0c0"/>
<rect x="352.3" y="838.45" width="5" height="1.5" fill="#dcdcdc"/>
<text x="352.7" y="844.9" font-size="15.8" text-anchor="end" textLength="8.35" lengthAdjust="spacingAndGlyphs" fill="#d6d6d6">0</text>
<rect x="352.3" y="787.45" width="5" height="1.5" fill="#dcdcdc"/>
<text x="352.7" y="793.9" font-size="15.8" text-anchor="end" textLength="8.35" lengthAdjust="spacingAndGlyphs" fill="#d6d6d6">2</text>
<rect x="352.3" y="736.45" width="5" height="1.5" fill="#dcdcdc"/>
<text x="352.7" y="742.9" font-size="15.8" text-anchor="end" textLength="8.35" lengthAdjust="spacingAndGlyphs" fill="#d6d6d6">4</text>
<rect x="352.3" y="685.45" width="5" height="1.5" fill="#dcdcdc"/>
<text x="352.7" y="691.9" font-size="15.8" text-anchor="end" textLength="8.35" lengthAdjust="spacingAndGlyphs" fill="#d6d6d6">6</text>
<rect x="352.3" y="634.45" width="5" height="1.5" fill="#dcdcdc"/>
<text x="352.7" y="640.9" font-size="15.8" text-anchor="end" textLength="8.35" lengthAdjust="spacingAndGlyphs" fill="#d6d6d6">8</text>
<rect x="352.3" y="583.45" width="5" height="1.5" fill="#dcdcdc"/>
<text x="352.7" y="589.9" font-size="15.8" text-anchor="end" textLength="16.69" lengthAdjust="spacingAndGlyphs" fill="#d6d6d6">10</text>
<text x="658.5" y="578" font-size="14.9" text-anchor="middle" textLength="81.59" lengthAdjust="spacingAndGlyphs" fill="#d6d6d6">DeltaE 2000</text>
<text x="409.3" y="856" font-size="15.6" text-anchor="middle" textLength="24.72" lengthAdjust="spacingAndGlyphs" fill="#d6d6d6">100</text>
<text x="513.3" y="856" font-size="15.6" text-anchor="middle" textLength="29.66" lengthAdjust="spacingAndGlyphs" fill="#d6d6d6">20%</text>
<text x="617.3" y="856" font-size="15.6" text-anchor="middle" textLength="29.66" lengthAdjust="spacingAndGlyphs" fill="#d6d6d6">40%</text>
<text x="721.3" y="856" font-size="15.6" text-anchor="middle" textLength="29.66" lengthAdjust="spacingAndGlyphs" fill="#d6d6d6">60%</text>
<text x="825.3" y="856" font-size="15.6" text-anchor="middle" textLength="29.66" lengthAdjust="spacingAndGlyphs" fill="#d6d6d6">80%</text>
<text x="929.3" y="856" font-size="15.6" text-anchor="middle" textLength="37.9" lengthAdjust="spacingAndGlyphs" fill="#d6d6d6">100%</text>
<text x="12.9" y="675" font-size="28.6" textLength="226.6" lengthAdjust="spacingAndGlyphs" fill="#f0f0f0">Current Reading</text>
<text x="12.8" y="717" font-size="23" textLength="107.5" lengthAdjust="spacingAndGlyphs" fill="#f0f0f0">x: 0,4109</text>
<text x="12.8" y="759.1" font-size="23" textLength="107.5" lengthAdjust="spacingAndGlyphs" fill="#f0f0f0">y: 0,5312</text>
<text x="12.8" y="801.2" font-size="23" textLength="115.5" lengthAdjust="spacingAndGlyphs" fill="#f0f0f0">fL: 50,597</text>
<text x="12.8" y="843.3" font-size="23" textLength="179.6" lengthAdjust="spacingAndGlyphs" fill="#f0f0f0">cd/m²: 173,359</text>
<rect x="1004" y="636" width="527" height="32.2" fill="url(#gH)"/>
<rect x="1004" y="636" width="17" height="32.2" fill="#000"/>
<text x="1168" y="659.6" font-size="17.7" textLength="36.31" lengthAdjust="spacingAndGlyphs" fill="#fff">20%</text>
<text x="1241.5" y="659.6" font-size="17.7" textLength="36.31" lengthAdjust="spacingAndGlyphs" fill="#fff">40%</text>
<text x="1315.2" y="659.6" font-size="17.7" textLength="36.31" lengthAdjust="spacingAndGlyphs" fill="#fff">60%</text>
<text x="1388.7" y="659.6" font-size="17.7" textLength="36.31" lengthAdjust="spacingAndGlyphs" fill="#fff">80%</text>
<text x="1462.3" y="659.6" font-size="17.7" textLength="46.4" lengthAdjust="spacingAndGlyphs" fill="#fff">100%</text>
<rect x="1021" y="668.2" width="510" height="29" fill="#404040"/>
<rect x="1004" y="668.2" width="17" height="29" fill="url(#gL)"/>
<text x="1026.5" y="689.8" font-size="17.7" textLength="69.91" lengthAdjust="spacingAndGlyphs" fill="#fff">x: CIE31</text>
<text x="1168.1" y="689.8" font-size="17.7" textLength="37.89" lengthAdjust="spacingAndGlyphs" fill="#fff">0,32</text>
<text x="1241.6" y="689.8" font-size="17.7" textLength="37.89" lengthAdjust="spacingAndGlyphs" fill="#fff">0,35</text>
<text x="1315.3" y="689.8" font-size="17.7" textLength="37.89" lengthAdjust="spacingAndGlyphs" fill="#fff">0,37</text>
<text x="1388.8" y="689.8" font-size="17.7" textLength="37.89" lengthAdjust="spacingAndGlyphs" fill="#fff">0,39</text>
<text x="1462.4" y="689.8" font-size="17.7" textLength="37.89" lengthAdjust="spacingAndGlyphs" fill="#fff">0,41</text>
<rect x="1021" y="697.2" width="510" height="29.2" fill="#818181"/>
<rect x="1004" y="697.2" width="17" height="29.2" fill="url(#gL)"/>
<text x="1026.5" y="718.8" font-size="17.7" textLength="69.91" lengthAdjust="spacingAndGlyphs" fill="#ececec">y: CIE31</text>
<text x="1168.1" y="718.8" font-size="17.7" textLength="37.89" lengthAdjust="spacingAndGlyphs" fill="#ececec">0,38</text>
<text x="1241.6" y="718.8" font-size="17.7" textLength="37.89" lengthAdjust="spacingAndGlyphs" fill="#ececec">0,42</text>
<text x="1315.3" y="718.8" font-size="17.7" textLength="37.89" lengthAdjust="spacingAndGlyphs" fill="#ececec">0,45</text>
<text x="1388.8" y="718.8" font-size="17.7" textLength="37.89" lengthAdjust="spacingAndGlyphs" fill="#ececec">0,49</text>
<text x="1462.4" y="718.8" font-size="17.7" textLength="37.89" lengthAdjust="spacingAndGlyphs" fill="#ececec">0,53</text>
<rect x="1021" y="726.4" width="510" height="29.4" fill="#404040"/>
<rect x="1004" y="726.4" width="17" height="29.4" fill="url(#gL)"/>
<text x="1026.5" y="748" font-size="17.7" textLength="12.99" lengthAdjust="spacingAndGlyphs" fill="#fff">Y</text>
<text x="1168.1" y="748" font-size="17.7" textLength="61.17" lengthAdjust="spacingAndGlyphs" fill="#fff">184,68</text>
<text x="1241.6" y="748" font-size="17.7" textLength="61.17" lengthAdjust="spacingAndGlyphs" fill="#fff">180,96</text>
<text x="1315.3" y="748" font-size="17.7" textLength="61.17" lengthAdjust="spacingAndGlyphs" fill="#fff">178,25</text>
<text x="1388.8" y="748" font-size="17.7" textLength="61.17" lengthAdjust="spacingAndGlyphs" fill="#fff">175,84</text>
<text x="1462.4" y="748" font-size="17.7" textLength="61.17" lengthAdjust="spacingAndGlyphs" fill="#fff">173,36</text>
<rect x="1021" y="755.8" width="510" height="29" fill="#818181"/>
<rect x="1004" y="755.8" width="17" height="29" fill="url(#gL)"/>
<text x="1026.5" y="777.4" font-size="17.7" textLength="128.19" lengthAdjust="spacingAndGlyphs" fill="#ececec">Target x:CIE31</text>
<text x="1168.1" y="777.4" font-size="17.7" textLength="37.89" lengthAdjust="spacingAndGlyphs" fill="#ececec">0,33</text>
<text x="1241.6" y="777.4" font-size="17.7" textLength="37.89" lengthAdjust="spacingAndGlyphs" fill="#ececec">0,36</text>
<text x="1315.3" y="777.4" font-size="17.7" textLength="37.89" lengthAdjust="spacingAndGlyphs" fill="#ececec">0,38</text>
<text x="1388.8" y="777.4" font-size="17.7" textLength="37.89" lengthAdjust="spacingAndGlyphs" fill="#ececec">0,40</text>
<text x="1462.4" y="777.4" font-size="17.7" textLength="37.89" lengthAdjust="spacingAndGlyphs" fill="#ececec">0,42</text>
<rect x="1021" y="784.8" width="510" height="29.4" fill="#404040"/>
<rect x="1004" y="784.8" width="17" height="29.4" fill="url(#gL)"/>
<text x="1026.5" y="806.4" font-size="17.7" textLength="128.19" lengthAdjust="spacingAndGlyphs" fill="#fff">Target y:CIE31</text>
<text x="1168.1" y="806.4" font-size="17.7" textLength="37.89" lengthAdjust="spacingAndGlyphs" fill="#fff">0,36</text>
<text x="1241.6" y="806.4" font-size="17.7" textLength="37.89" lengthAdjust="spacingAndGlyphs" fill="#fff">0,40</text>
<text x="1315.3" y="806.4" font-size="17.7" textLength="37.89" lengthAdjust="spacingAndGlyphs" fill="#fff">0,44</text>
<text x="1388.8" y="806.4" font-size="17.7" textLength="37.89" lengthAdjust="spacingAndGlyphs" fill="#fff">0,47</text>
<text x="1462.4" y="806.4" font-size="17.7" textLength="37.89" lengthAdjust="spacingAndGlyphs" fill="#fff">0,51</text>
<rect x="1021" y="814.2" width="510" height="29.2" fill="#818181"/>
<rect x="1004" y="814.2" width="17" height="29.2" fill="url(#gL)"/>
<text x="1026.5" y="835.8" font-size="17.7" textLength="74.12" lengthAdjust="spacingAndGlyphs" fill="#ececec">Target Y</text>
<text x="1168.1" y="835.8" font-size="17.7" textLength="61.17" lengthAdjust="spacingAndGlyphs" fill="#ececec">183,52</text>
<text x="1241.6" y="835.8" font-size="17.7" textLength="61.17" lengthAdjust="spacingAndGlyphs" fill="#ececec">180,30</text>
<text x="1315.3" y="835.8" font-size="17.7" textLength="61.17" lengthAdjust="spacingAndGlyphs" fill="#ececec">177,83</text>
<text x="1388.8" y="835.8" font-size="17.7" textLength="61.17" lengthAdjust="spacingAndGlyphs" fill="#ececec">175,89</text>
<text x="1462.4" y="835.8" font-size="17.7" textLength="61.17" lengthAdjust="spacingAndGlyphs" fill="#ececec">174,01</text>
<rect x="1002.3" y="39.5" width="711.7" height="588.3" fill="#0089a9"/>
<rect x="1008.8" y="45.8" width="701.3" height="575.1" fill="#323232"/>
<rect x="1038.9" y="69.8" width="667.6" height="521.6" fill="#232323"/>
<g clip-path="url(#cl)"><rect x="1099.11" y="72" width="8.29" height="2.6" fill="url(#c0)"/><rect x="1087.72" y="74" width="32.65" height="2.6" fill="url(#c1)"/><rect x="1081.92" y="76" width="46.23" height="2.6" fill="url(#c2)"/><rect x="1077.84" y="78" width="57.29" height="2.6" fill="url(#c3)"/><rect x="1074.62" y="80" width="66.44" height="2.6" fill="url(#c4)"/><rect x="1071.81" y="82" width="74.47" height="2.6" fill="url(#c5)"/><rect x="1069.68" y="84" width="81.46" height="2.6" fill="url(#c6)"/><rect x="1067.6" y="86" width="88.18" height="2.6" fill="url(#c7)"/><rect x="1065.93" y="88" width="94.39" height="2.6" fill="url(#c8)"/><rect x="1064.27" y="90" width="100.54" height="2.6" fill="url(#c9)"/><rect x="1062.82" y="92" width="106.39" height="2.6" fill="url(#c10)"/><rect x="1061.45" y="94" width="111.98" height="2.6" fill="url(#c11)"/><rect x="1060.09" y="96" width="117.43" height="2.6" fill="url(#c12)"/><rect x="1058.94" y="98" width="122.56" height="2.6" fill="url(#c13)"/><rect x="1057.8" y="100" width="127.61" height="2.6" fill="url(#c14)"/><rect x="1056.65" y="102" width="132.58" height="2.6" fill="url(#c15)"/><rect x="1055.69" y="104" width="137.29" height="2.6" fill="url(#c16)"/><rect x="1054.74" y="106" width="141.93" height="2.6" fill="url(#c17)"/><rect x="1053.78" y="108" width="146.51" height="2.6" fill="url(#c18)"/><rect x="1052.92" y="110" width="150.93" height="2.6" fill="url(#c19)"/><rect x="1052.13" y="112" width="155.18" height="2.6" fill="url(#c20)"/><rect x="1051.34" y="114" width="159.4" height="2.6" fill="url(#c21)"/><rect x="1050.55" y="116" width="163.57" height="2.6" fill="url(#c22)"/><rect x="1049.9" y="118" width="167.55" height="2.6" fill="url(#c23)"/><rect x="1049.26" y="120" width="171.49" height="2.6" fill="url(#c24)"/><rect x="1048.61" y="122" width="175.39" height="2.6" fill="url(#c25)"/><rect x="1047.97" y="124" width="179.26" height="2.6" fill="url(#c26)"/><rect x="1047.46" y="126" width="182.94" height="2.6" fill="url(#c27)"/><rect x="1046.96" y="128" width="186.6" height="2.6" fill="url(#c28)"/><rect x="1046.45" y="130" width="190.2" height="2.6" fill="url(#c29)"/><rect x="1045.95" y="132" width="193.78" height="2.6" fill="url(#c30)"/><rect x="1045.52" y="134" width="197.26" height="2.6" fill="url(#c31)"/><rect x="1045.13" y="136" width="200.67" height="2.6" fill="url(#c32)"/><rect x="1044.74" y="138" width="204.07" height="2.6" fill="url(#c33)"/><rect x="1044.35" y="140" width="207.45" height="2.6" fill="url(#c34)"/><rect x="1043.96" y="142" width="210.79" height="2.6" fill="url(#c35)"/><rect x="1043.66" y="144" width="214.02" height="2.6" fill="url(#c36)"/><rect x="1043.36" y="146" width="217.23" height="2.6" fill="url(#c37)"/><rect x="1043.06" y="148" width="220.42" height="2.6" fill="url(#c38)"/><rect x="1042.75" y="150" width="223.59" height="2.6" fill="url(#c39)"/><rect x="1042.47" y="152" width="226.71" height="2.6" fill="url(#c40)"/><rect x="1042.24" y="154" width="229.77" height="2.6" fill="url(#c41)"/><rect x="1042.02" y="156" width="232.82" height="2.6" fill="url(#c42)"/><rect x="1041.79" y="158" width="235.85" height="2.6" fill="url(#c43)"/><rect x="1041.57" y="160" width="238.88" height="2.6" fill="url(#c44)"/><rect x="1041.35" y="162" width="241.89" height="2.6" fill="url(#c45)"/><rect x="1041.19" y="164" width="244.82" height="2.6" fill="url(#c46)"/><rect x="1041.03" y="166" width="247.74" height="2.6" fill="url(#c47)"/><rect x="1040.88" y="168" width="250.65" height="2.6" fill="url(#c48)"/><rect x="1040.72" y="170" width="253.55" height="2.6" fill="url(#c49)"/><rect x="1040.56" y="172" width="256.43" height="2.6" fill="url(#c50)"/><rect x="1040.45" y="174" width="259.26" height="2.6" fill="url(#c51)"/><rect x="1040.35" y="176" width="262.07" height="2.6" fill="url(#c52)"/><rect x="1040.26" y="178" width="264.88" height="2.6" fill="url(#c53)"/><rect x="1040.16" y="180" width="267.68" height="2.6" fill="url(#c54)"/><rect x="1040.06" y="182" width="270.47" height="2.6" fill="url(#c55)"/><rect x="1039.99" y="184" width="273.24" height="2.6" fill="url(#c56)"/><rect x="1039.95" y="186" width="275.95" height="2.6" fill="url(#c57)"/><rect x="1039.92" y="188" width="278.67" height="2.6" fill="url(#c58)"/><rect x="1039.89" y="190" width="281.37" height="2.6" fill="url(#c59)"/><rect x="1039.85" y="192" width="284.07" height="2.6" fill="url(#c60)"/><rect x="1039.82" y="194" width="286.76" height="2.6" fill="url(#c61)"/><rect x="1039.82" y="196" width="289.41" height="2.6" fill="url(#c62)"/><rect x="1039.83" y="198" width="292.05" height="2.6" fill="url(#c63)"/><rect x="1039.86" y="200" width="294.66" height="2.6" fill="url(#c64)"/><rect x="1039.89" y="202" width="297.28" height="2.6" fill="url(#c65)"/><rect x="1039.91" y="204" width="299.88" height="2.6" fill="url(#c66)"/><rect x="1039.94" y="206" width="302.48" height="2.6" fill="url(#c67)"/><rect x="1039.97" y="208" width="305.07" height="2.6" fill="url(#c68)"/><rect x="1040.04" y="210" width="307.61" height="2.6" fill="url(#c69)"/><rect x="1040.12" y="212" width="310.15" height="2.6" fill="url(#c70)"/><rect x="1040.2" y="214" width="312.67" height="2.6" fill="url(#c71)"/><rect x="1040.28" y="216" width="315.2" height="2.6" fill="url(#c72)"/><rect x="1040.36" y="218" width="317.72" height="2.6" fill="url(#c73)"/><rect x="1040.44" y="220" width="320.25" height="2.6" fill="url(#c74)"/><rect x="1040.56" y="222" width="322.73" height="2.6" fill="url(#c75)"/><rect x="1040.68" y="224" width="325.21" height="2.6" fill="url(#c76)"/><rect x="1040.8" y="226" width="327.69" height="2.6" fill="url(#c77)"/><rect x="1040.93" y="228" width="330.17" height="2.6" fill="url(#c78)"/><rect x="1041.05" y="230" width="332.65" height="2.6" fill="url(#c79)"/><rect x="1041.17" y="232" width="335.13" height="2.6" fill="url(#c80)"/><rect x="1041.32" y="234" width="337.58" height="2.6" fill="url(#c81)"/><rect x="1041.49" y="236" width="340.01" height="2.6" fill="url(#c82)"/><rect x="1041.65" y="238" width="342.45" height="2.6" fill="url(#c83)"/><rect x="1041.81" y="240" width="344.88" height="2.6" fill="url(#c84)"/><rect x="1041.97" y="242" width="347.31" height="2.6" fill="url(#c85)"/><rect x="1042.13" y="244" width="349.74" height="2.6" fill="url(#c86)"/><rect x="1042.3" y="246" width="352.15" height="2.6" fill="url(#c87)"/><rect x="1042.5" y="248" width="354.54" height="2.6" fill="url(#c88)"/><rect x="1042.69" y="250" width="356.93" height="2.6" fill="url(#c89)"/><rect x="1042.88" y="252" width="359.32" height="2.6" fill="url(#c90)"/><rect x="1043.07" y="254" width="361.7" height="2.6" fill="url(#c91)"/><rect x="1043.27" y="256" width="364.08" height="2.6" fill="url(#c92)"/><rect x="1043.47" y="258" width="366.45" height="2.6" fill="url(#c93)"/><rect x="1043.7" y="260" width="368.8" height="2.6" fill="url(#c94)"/><rect x="1043.93" y="262" width="371.14" height="2.6" fill="url(#c95)"/><rect x="1044.16" y="264" width="373.48" height="2.6" fill="url(#c96)"/><rect x="1044.39" y="266" width="375.82" height="2.6" fill="url(#c97)"/><rect x="1044.62" y="268" width="378.16" height="2.6" fill="url(#c98)"/><rect x="1044.85" y="270" width="380.51" height="2.6" fill="url(#c99)"/><rect x="1045.11" y="272" width="382.81" height="2.6" fill="url(#c100)"/><rect x="1045.38" y="274" width="385.11" height="2.6" fill="url(#c101)"/><rect x="1045.65" y="276" width="387.41" height="2.6" fill="url(#c102)"/><rect x="1045.92" y="278" width="389.71" height="2.6" fill="url(#c103)"/><rect x="1046.18" y="280" width="392.01" height="2.6" fill="url(#c104)"/><rect x="1046.45" y="282" width="394.31" height="2.6" fill="url(#c105)"/><rect x="1046.73" y="284" width="396.59" height="2.6" fill="url(#c106)"/><rect x="1047.04" y="286" width="398.86" height="2.6" fill="url(#c107)"/><rect x="1047.34" y="288" width="401.12" height="2.6" fill="url(#c108)"/><rect x="1047.64" y="290" width="403.39" height="2.6" fill="url(#c109)"/><rect x="1047.94" y="292" width="405.65" height="2.6" fill="url(#c110)"/><rect x="1048.24" y="294" width="407.92" height="2.6" fill="url(#c111)"/><rect x="1048.55" y="296" width="410.18" height="2.6" fill="url(#c112)"/><rect x="1048.87" y="298" width="412.43" height="2.6" fill="url(#c113)"/><rect x="1049.2" y="300" width="414.66" height="2.6" fill="url(#c114)"/><rect x="1049.53" y="302" width="416.9" height="2.6" fill="url(#c115)"/><rect x="1049.86" y="304" width="419.14" height="2.6" fill="url(#c116)"/><rect x="1050.2" y="306" width="421.38" height="2.6" fill="url(#c117)"/><rect x="1050.53" y="308" width="423.62" height="2.6" fill="url(#c118)"/><rect x="1050.86" y="310" width="425.86" height="2.6" fill="url(#c119)"/><rect x="1051.22" y="312" width="428.08" height="2.6" fill="url(#c120)"/><rect x="1051.58" y="314" width="430.3" height="2.6" fill="url(#c121)"/><rect x="1051.93" y="316" width="432.52" height="2.6" fill="url(#c122)"/><rect x="1052.29" y="318" width="434.75" height="2.6" fill="url(#c123)"/><rect x="1052.65" y="320" width="436.97" height="2.6" fill="url(#c124)"/><rect x="1053.01" y="322" width="439.19" height="2.6" fill="url(#c125)"/><rect x="1053.38" y="324" width="441.39" height="2.6" fill="url(#c126)"/><rect x="1053.76" y="326" width="443.59" height="2.6" fill="url(#c127)"/><rect x="1054.14" y="328" width="445.77" height="2.6" fill="url(#c128)"/><rect x="1054.52" y="330" width="447.96" height="2.6" fill="url(#c129)"/><rect x="1054.9" y="332" width="450.14" height="2.6" fill="url(#c130)"/><rect x="1055.28" y="334" width="452.32" height="2.6" fill="url(#c131)"/><rect x="1055.67" y="336" width="454.49" height="2.6" fill="url(#c132)"/><rect x="1056.08" y="338" width="456.63" height="2.6" fill="url(#c133)"/><rect x="1056.48" y="340" width="458.78" height="2.6" fill="url(#c134)"/><rect x="1056.89" y="342" width="460.94" height="2.6" fill="url(#c135)"/><rect x="1057.3" y="344" width="463.09" height="2.6" fill="url(#c136)"/><rect x="1057.71" y="346" width="465.25" height="2.6" fill="url(#c137)"/><rect x="1058.12" y="348" width="467.41" height="2.6" fill="url(#c138)"/><rect x="1058.56" y="350" width="469.54" height="2.6" fill="url(#c139)"/><rect x="1059" y="352" width="471.67" height="2.6" fill="url(#c140)"/><rect x="1059.44" y="354" width="473.8" height="2.6" fill="url(#c141)"/><rect x="1059.89" y="356" width="475.93" height="2.6" fill="url(#c142)"/><rect x="1060.33" y="358" width="478.07" height="2.6" fill="url(#c143)"/><rect x="1060.77" y="360" width="480.2" height="2.6" fill="url(#c144)"/><rect x="1061.23" y="362" width="482.31" height="2.6" fill="url(#c145)"/><rect x="1061.7" y="364" width="484.41" height="2.6" fill="url(#c146)"/><rect x="1062.17" y="366" width="486.51" height="2.6" fill="url(#c147)"/><rect x="1062.64" y="368" width="488.61" height="2.6" fill="url(#c148)"/><rect x="1063.11" y="370" width="490.72" height="2.6" fill="url(#c149)"/><rect x="1063.58" y="372" width="492.83" height="2.6" fill="url(#c150)"/><rect x="1064.05" y="374" width="494.94" height="2.6" fill="url(#c151)"/><rect x="1064.55" y="376" width="497.04" height="2.6" fill="url(#c152)"/><rect x="1065.04" y="378" width="499.14" height="2.6" fill="url(#c153)"/><rect x="1065.54" y="380" width="501.24" height="2.6" fill="url(#c154)"/><rect x="1066.03" y="382" width="503.32" height="2.6" fill="url(#c155)"/><rect x="1066.53" y="384" width="505.4" height="2.6" fill="url(#c156)"/><rect x="1067.03" y="386" width="507.46" height="2.6" fill="url(#c157)"/><rect x="1067.54" y="388" width="509.51" height="2.6" fill="url(#c158)"/><rect x="1068.06" y="390" width="511.55" height="2.6" fill="url(#c159)"/><rect x="1068.58" y="392" width="513.59" height="2.6" fill="url(#c160)"/><rect x="1069.09" y="394" width="515.63" height="2.6" fill="url(#c161)"/><rect x="1069.61" y="396" width="517.67" height="2.6" fill="url(#c162)"/><rect x="1070.13" y="398" width="519.71" height="2.6" fill="url(#c163)"/><rect x="1070.67" y="400" width="521.74" height="2.6" fill="url(#c164)"/><rect x="1071.21" y="402" width="523.78" height="2.6" fill="url(#c165)"/><rect x="1071.74" y="404" width="525.82" height="2.6" fill="url(#c166)"/><rect x="1072.28" y="406" width="527.87" height="2.6" fill="url(#c167)"/><rect x="1072.82" y="408" width="529.91" height="2.6" fill="url(#c168)"/><rect x="1073.37" y="410" width="531.92" height="2.6" fill="url(#c169)"/><rect x="1073.93" y="412" width="533.91" height="2.6" fill="url(#c170)"/><rect x="1074.5" y="414" width="535.91" height="2.6" fill="url(#c171)"/><rect x="1075.06" y="416" width="537.92" height="2.6" fill="url(#c172)"/><rect x="1075.62" y="418" width="539.96" height="2.6" fill="url(#c173)"/><rect x="1076.19" y="420" width="541.98" height="2.6" fill="url(#c174)"/><rect x="1076.78" y="422" width="543.95" height="2.6" fill="url(#c175)"/><rect x="1077.37" y="424" width="545.91" height="2.6" fill="url(#c176)"/><rect x="1077.97" y="426" width="546.53" height="2.6" fill="url(#c177)"/><rect x="1078.56" y="428" width="543.18" height="2.6" fill="url(#c178)"/><rect x="1079.16" y="430" width="537.07" height="2.6" fill="url(#c179)"/><rect x="1079.78" y="432" width="530.93" height="2.6" fill="url(#c180)"/><rect x="1080.4" y="434" width="524.79" height="2.6" fill="url(#c181)"/><rect x="1081.02" y="436" width="518.66" height="2.6" fill="url(#c182)"/><rect x="1081.65" y="438" width="512.52" height="2.6" fill="url(#c183)"/><rect x="1082.27" y="440" width="506.38" height="2.6" fill="url(#c184)"/><rect x="1082.92" y="442" width="500.21" height="2.6" fill="url(#c185)"/><rect x="1083.58" y="444" width="494.05" height="2.6" fill="url(#c186)"/><rect x="1084.23" y="446" width="487.88" height="2.6" fill="url(#c187)"/><rect x="1084.88" y="448" width="481.71" height="2.6" fill="url(#c188)"/><rect x="1085.54" y="450" width="475.54" height="2.6" fill="url(#c189)"/><rect x="1086.22" y="452" width="469.34" height="2.6" fill="url(#c190)"/><rect x="1086.9" y="454" width="463.15" height="2.6" fill="url(#c191)"/><rect x="1087.58" y="456" width="456.95" height="2.6" fill="url(#c192)"/><rect x="1088.26" y="458" width="450.75" height="2.6" fill="url(#c193)"/><rect x="1088.97" y="460" width="444.54" height="2.6" fill="url(#c194)"/><rect x="1089.68" y="462" width="438.31" height="2.6" fill="url(#c195)"/><rect x="1090.39" y="464" width="432.09" height="2.6" fill="url(#c196)"/><rect x="1091.1" y="466" width="425.86" height="2.6" fill="url(#c197)"/><rect x="1091.83" y="468" width="419.62" height="2.6" fill="url(#c198)"/><rect x="1092.58" y="470" width="413.35" height="2.6" fill="url(#c199)"/><rect x="1093.33" y="472" width="407.08" height="2.6" fill="url(#c200)"/><rect x="1094.09" y="474" width="400.82" height="2.6" fill="url(#c201)"/><rect x="1094.86" y="476" width="394.53" height="2.6" fill="url(#c202)"/><rect x="1095.67" y="478" width="388.2" height="2.6" fill="url(#c203)"/><rect x="1096.48" y="480" width="381.88" height="2.6" fill="url(#c204)"/><rect x="1097.29" y="482" width="375.56" height="2.6" fill="url(#c205)"/><rect x="1098.12" y="484" width="369.21" height="2.6" fill="url(#c206)"/><rect x="1098.97" y="486" width="362.84" height="2.6" fill="url(#c207)"/><rect x="1099.83" y="488" width="356.47" height="2.6" fill="url(#c208)"/><rect x="1100.68" y="490" width="350.1" height="2.6" fill="url(#c209)"/><rect x="1101.57" y="492" width="343.7" height="2.6" fill="url(#c210)"/><rect x="1102.46" y="494" width="337.29" height="2.6" fill="url(#c211)"/><rect x="1103.35" y="496" width="330.89" height="2.6" fill="url(#c212)"/><rect x="1104.26" y="498" width="324.47" height="2.6" fill="url(#c213)"/><rect x="1105.17" y="500" width="318.04" height="2.6" fill="url(#c214)"/><rect x="1106.09" y="502" width="311.61" height="2.6" fill="url(#c215)"/><rect x="1107" y="504" width="305.18" height="2.6" fill="url(#c216)"/><rect x="1107.93" y="506" width="298.74" height="2.6" fill="url(#c217)"/><rect x="1108.85" y="508" width="292.31" height="2.6" fill="url(#c218)"/><rect x="1109.78" y="510" width="285.87" height="2.6" fill="url(#c219)"/><rect x="1110.71" y="512" width="279.41" height="2.6" fill="url(#c220)"/><rect x="1111.65" y="514" width="272.96" height="2.6" fill="url(#c221)"/><rect x="1112.61" y="516" width="266.49" height="2.6" fill="url(#c222)"/><rect x="1113.59" y="518" width="260" height="2.6" fill="url(#c223)"/><rect x="1114.56" y="520" width="253.51" height="2.6" fill="url(#c224)"/><rect x="1115.57" y="522" width="246.98" height="2.6" fill="url(#c225)"/><rect x="1116.59" y="524" width="240.45" height="2.6" fill="url(#c226)"/><rect x="1117.62" y="526" width="233.91" height="2.6" fill="url(#c227)"/><rect x="1118.67" y="528" width="227.34" height="2.6" fill="url(#c228)"/><rect x="1119.72" y="530" width="220.77" height="2.6" fill="url(#c229)"/><rect x="1120.81" y="532" width="214.18" height="2.6" fill="url(#c230)"/><rect x="1121.89" y="534" width="207.58" height="2.6" fill="url(#c231)"/><rect x="1123" y="536" width="200.95" height="2.6" fill="url(#c232)"/><rect x="1124.11" y="538" width="194.33" height="2.6" fill="url(#c233)"/><rect x="1125.25" y="540" width="187.68" height="2.6" fill="url(#c234)"/><rect x="1126.39" y="542" width="181.02" height="2.6" fill="url(#c235)"/><rect x="1127.56" y="544" width="174.34" height="2.6" fill="url(#c236)"/><rect x="1128.77" y="546" width="167.61" height="2.6" fill="url(#c237)"/><rect x="1130.02" y="548" width="160.85" height="2.6" fill="url(#c238)"/><rect x="1131.33" y="550" width="154.02" height="2.6" fill="url(#c239)"/><rect x="1132.73" y="552" width="147.11" height="2.6" fill="url(#c240)"/><rect x="1134.18" y="554" width="140.14" height="2.6" fill="url(#c241)"/><rect x="1135.7" y="556" width="133.11" height="2.6" fill="url(#c242)"/><rect x="1137.3" y="558" width="125.99" height="2.6" fill="url(#c243)"/><rect x="1138.98" y="560" width="118.8" height="2.6" fill="url(#c244)"/><rect x="1140.69" y="562" width="111.58" height="2.6" fill="url(#c245)"/><rect x="1142.48" y="564" width="104.27" height="2.6" fill="url(#c246)"/><rect x="1144.31" y="566" width="96.92" height="2.6" fill="url(#c247)"/><rect x="1146.18" y="568" width="89.54" height="2.6" fill="url(#c248)"/><rect x="1148.12" y="570" width="82.09" height="2.6" fill="url(#c249)"/><rect x="1150.11" y="572" width="74.58" height="2.6" fill="url(#c250)"/><rect x="1152.21" y="574" width="66.97" height="2.6" fill="url(#c251)"/><rect x="1154.56" y="576" width="59.1" height="2.6" fill="url(#c252)"/><rect x="1157.33" y="578" width="50.82" height="2.6" fill="url(#c253)"/><rect x="1160.4" y="580" width="42.24" height="2.6" fill="url(#c254)"/><rect x="1163.27" y="582" width="33.85" height="2.6" fill="url(#c255)"/><rect x="1166.25" y="584" width="25.35" height="2.6" fill="url(#c256)"/><rect x="1169.17" y="586" width="16.93" height="2.6" fill="url(#c257)"/><rect x="1172.16" y="588" width="8.41" height="2.6" fill="url(#c258)"/></g>
<path d="M1177.2 588.5 L1177.1 588.5 L1177.1 588.5 L1177.0 588.6 L1176.9 588.6 L1176.7 588.6 L1176.6 588.6 L1176.4 588.6 L1176.1 588.6 L1175.9 588.6 L1175.6 588.6 L1175.3 588.5 L1175.1 588.4 L1174.8 588.3 L1174.5 588.2 L1174.2 588.0 L1173.9 587.8 L1173.5 587.6 L1173.1 587.3 L1172.6 587.0 L1172.1 586.7 L1171.5 586.3 L1170.9 585.8 L1170.3 585.4 L1169.5 584.8 L1168.7 584.3 L1167.8 583.7 L1166.8 583.0 L1165.7 582.3 L1164.6 581.5 L1163.3 580.6 L1161.9 579.7 L1160.5 578.7 L1158.9 577.7 L1157.2 576.5 L1155.3 575.0 L1153.3 573.2 L1150.9 570.8 L1148.3 568.1 L1145.5 565.1 L1142.7 562.0 L1139.9 558.8 L1137.5 555.7 L1135.4 552.9 L1133.4 550.2 L1131.6 547.4 L1129.9 544.5 L1128.0 541.4 L1126.0 537.7 L1123.8 533.8 L1121.5 529.5 L1119.1 525.0 L1116.6 520.2 L1114.1 514.9 L1111.4 509.3 L1108.6 503.2 L1105.7 496.8 L1102.7 490.0 L1099.6 482.8 L1096.5 475.2 L1093.5 467.1 L1090.4 458.4 L1087.3 449.3 L1084.2 439.7 L1081.1 429.7 L1078.0 419.3 L1075.0 408.6 L1071.9 397.3 L1068.9 385.5 L1065.9 373.3 L1062.9 360.8 L1060.2 348.1 L1057.6 335.5 L1055.1 322.7 L1052.8 309.7 L1050.6 296.5 L1048.6 283.3 L1046.9 270.2 L1045.4 257.5 L1044.2 245.0 L1043.2 232.5 L1042.4 220.2 L1042.0 208.2 L1041.8 196.5 L1042.0 185.3 L1042.5 174.4 L1043.4 163.8 L1044.5 153.6 L1046.0 143.8 L1047.8 134.6 L1049.9 126.1 L1052.5 118.2 L1055.4 110.9 L1058.6 104.1 L1062.1 97.9 L1065.9 92.5 L1069.8 87.8 L1074.0 83.9 L1078.4 80.7 L1083.1 78.3 L1088.0 76.5 L1092.9 75.1 L1097.9 74.2 L1103.0 73.9 L1108.2 74.2 L1113.5 75.0 L1118.9 76.1 L1124.3 77.5 L1129.6 78.9 L1135.0 80.6 L1140.4 82.5 L1145.8 84.6 L1151.2 86.9 L1156.5 89.2 L1161.8 91.5 L1167.0 93.9 L1172.1 96.3 L1177.2 98.8 L1182.2 101.4 L1187.2 104.0 L1192.1 106.6 L1197.1 109.3 L1202.0 112.1 L1206.8 114.9 L1211.6 117.7 L1216.5 120.6 L1221.3 123.6 L1226.1 126.5 L1230.9 129.6 L1235.7 132.7 L1240.5 135.8 L1245.3 139.0 L1250.1 142.2 L1254.8 145.4 L1259.6 148.7 L1264.3 152.0 L1269.0 155.3 L1273.8 158.7 L1278.5 162.0 L1283.2 165.4 L1287.9 168.8 L1292.7 172.3 L1297.4 175.8 L1302.1 179.3 L1306.9 182.8 L1311.6 186.3 L1316.3 189.8 L1321.1 193.4 L1325.8 196.9 L1330.6 200.5 L1335.3 204.1 L1340.0 207.7 L1344.7 211.3 L1349.5 214.9 L1354.2 218.5 L1358.9 222.1 L1363.6 225.8 L1368.3 229.4 L1373.0 233.0 L1377.7 236.6 L1382.4 240.2 L1387.0 243.8 L1391.7 247.4 L1396.3 251.0 L1401.0 254.6 L1405.6 258.2 L1410.1 261.7 L1414.7 265.3 L1419.3 268.8 L1423.8 272.3 L1428.3 275.8 L1432.8 279.3 L1437.2 282.8 L1441.6 286.2 L1446.0 289.7 L1450.4 293.1 L1454.7 296.4 L1459.0 299.8 L1463.3 303.1 L1467.5 306.4 L1471.7 309.6 L1475.8 312.9 L1479.9 316.0 L1484.0 319.2 L1488.0 322.3 L1492.0 325.4 L1495.8 328.4 L1499.7 331.4 L1503.4 334.3 L1507.2 337.2 L1510.8 340.1 L1514.4 342.9 L1517.8 345.6 L1521.2 348.2 L1524.5 350.8 L1527.7 353.3 L1530.9 355.7 L1534.0 358.1 L1537.0 360.5 L1540.0 362.8 L1542.9 365.0 L1545.7 367.3 L1548.5 369.4 L1551.2 371.5 L1553.8 373.6 L1556.3 375.4 L1558.5 377.1 L1560.6 378.8 L1562.8 380.5 L1565.1 382.3 L1567.8 384.4 L1570.9 386.8 L1574.4 389.5 L1578.1 392.4 L1581.7 395.2 L1585.2 397.9 L1588.2 400.3 L1590.9 402.4 L1593.3 404.2 L1595.5 405.9 L1597.5 407.5 L1599.4 409.0 L1601.3 410.4 L1603.0 411.8 L1604.6 413.0 L1606.1 414.2 L1607.5 415.3 L1608.8 416.3 L1610.1 417.3 L1611.2 418.2 L1612.3 419.0 L1613.2 419.7 L1614.1 420.4 L1614.9 421.0 L1615.6 421.6 L1616.3 422.1 L1616.9 422.6 L1617.4 423.0 L1617.9 423.3 L1618.3 423.7 L1618.8 424.1 L1619.3 424.5 L1619.8 424.8 L1620.3 425.2 L1620.8 425.6 L1621.2 425.9 L1621.5 426.2 L1621.8 426.4 L1622.0 426.6 L1622.2 426.7 L1622.3 426.8 L1622.5 426.9 L1622.5 427.0Z M1547.3 386.8 L1277.2 219.3 L1158.1 554.4Z" fill="#000" fill-opacity="0.4" fill-rule="evenodd"/>
<rect x="1038.9" y="69.15" width="475" height="1.3" fill="#8e8e8e"/>
<rect x="1705.85" y="69.8" width="1.3" height="521.6" fill="#8e8e8e"/>
<rect x="1038.25" y="69.8" width="1.3" height="527.1" fill="#a8a8a8"/>
<rect x="1038.9" y="590.7" width="667.6" height="1.4" fill="#a8a8a8"/>
<rect x="1033.9" y="590.85" width="5" height="1.5" fill="#dcdcdc"/>
<text x="1038.9" y="612.8" font-size="14.9" text-anchor="middle" fill="#d6d6d6">0</text>
<text x="1033.6" y="596.9" font-size="14.9" text-anchor="end" fill="#d6d6d6">0</text>
<rect x="1117.69" y="591.4" width="1.3" height="5.8" fill="#c8c8c8"/>
<rect x="1033.9" y="528.8" width="5" height="1.5" fill="#dcdcdc"/>
<text x="1118.34" y="612.8" font-size="14.9" text-anchor="middle" fill="#d6d6d6">0,1</text>
<text x="1033.6" y="534.85" font-size="14.9" text-anchor="end" fill="#d6d6d6">0,1</text>
<rect x="1197.13" y="591.4" width="1.3" height="5.8" fill="#c8c8c8"/>
<rect x="1033.9" y="466.75" width="5" height="1.5" fill="#dcdcdc"/>
<text x="1197.78" y="612.8" font-size="14.9" text-anchor="middle" fill="#d6d6d6">0,2</text>
<text x="1033.6" y="472.8" font-size="14.9" text-anchor="end" fill="#d6d6d6">0,2</text>
<rect x="1276.57" y="591.4" width="1.3" height="5.8" fill="#c8c8c8"/>
<rect x="1033.9" y="404.7" width="5" height="1.5" fill="#dcdcdc"/>
<text x="1277.22" y="612.8" font-size="14.9" text-anchor="middle" fill="#d6d6d6">0,3</text>
<text x="1033.6" y="410.75" font-size="14.9" text-anchor="end" fill="#d6d6d6">0,3</text>
<rect x="1356.01" y="591.4" width="1.3" height="5.8" fill="#c8c8c8"/>
<rect x="1033.9" y="342.65" width="5" height="1.5" fill="#dcdcdc"/>
<text x="1356.66" y="612.8" font-size="14.9" text-anchor="middle" fill="#d6d6d6">0,4</text>
<text x="1033.6" y="348.7" font-size="14.9" text-anchor="end" fill="#d6d6d6">0,4</text>
<rect x="1435.45" y="591.4" width="1.3" height="5.8" fill="#c8c8c8"/>
<rect x="1033.9" y="280.6" width="5" height="1.5" fill="#dcdcdc"/>
<text x="1436.1" y="612.8" font-size="14.9" text-anchor="middle" fill="#d6d6d6">0,5</text>
<text x="1033.6" y="286.65" font-size="14.9" text-anchor="end" fill="#d6d6d6">0,5</text>
<rect x="1514.89" y="591.4" width="1.3" height="5.8" fill="#c8c8c8"/>
<rect x="1033.9" y="218.55" width="5" height="1.5" fill="#dcdcdc"/>
<text x="1515.54" y="612.8" font-size="14.9" text-anchor="middle" fill="#d6d6d6">0,6</text>
<text x="1033.6" y="224.6" font-size="14.9" text-anchor="end" fill="#d6d6d6">0,6</text>
<rect x="1594.33" y="591.4" width="1.3" height="5.8" fill="#c8c8c8"/>
<rect x="1033.9" y="156.5" width="5" height="1.5" fill="#dcdcdc"/>
<text x="1594.98" y="612.8" font-size="14.9" text-anchor="middle" fill="#d6d6d6">0,7</text>
<text x="1033.6" y="162.55" font-size="14.9" text-anchor="end" fill="#d6d6d6">0,7</text>
<rect x="1673.77" y="591.4" width="1.3" height="5.8" fill="#c8c8c8"/>
<rect x="1033.9" y="94.45" width="5" height="1.5" fill="#dcdcdc"/>
<text x="1674.42" y="612.8" font-size="14.9" text-anchor="middle" fill="#d6d6d6">0,8</text>
<text x="1033.6" y="100.5" font-size="14.9" text-anchor="end" fill="#d6d6d6">0,8</text>
<text x="1359.7" y="65" font-size="14.9" text-anchor="middle" textLength="78.6" lengthAdjust="spacingAndGlyphs" fill="#d6d6d6">CIE 1931 xy</text>
<rect x="1330.85" y="380" width="14.3" height="14" fill="none" stroke="#fff" stroke-width="1.4"/>
<rect x="1383.85" y="378.7" width="14.3" height="14" fill="none" stroke="#fff" stroke-width="1.4"/>
<rect x="1431.85" y="378.7" width="14.3" height="14" fill="none" stroke="#fff" stroke-width="1.4"/>
<rect x="1482.35" y="378.7" width="14.3" height="14" fill="none" stroke="#fff" stroke-width="1.4"/>
<rect x="1539.85" y="378.7" width="14.3" height="14" fill="none" stroke="#fff" stroke-width="1.4"/>
<rect x="1268.95" y="211.5" width="14.3" height="14" fill="none" stroke="#fff" stroke-width="1.4"/>
<rect x="1271.95" y="248" width="14.3" height="14" fill="none" stroke="#fff" stroke-width="1.4"/>
<rect x="1273.45" y="280.3" width="14.3" height="14" fill="none" stroke="#fff" stroke-width="1.4"/>
<rect x="1275.85" y="312.6" width="14.3" height="14" fill="none" stroke="#fff" stroke-width="1.4"/>
<rect x="1277.55" y="346" width="14.3" height="14" fill="none" stroke="#fff" stroke-width="1.4"/>
<rect x="1364.35" y="270.4" width="14.3" height="14" fill="none" stroke="#fff" stroke-width="1.4"/>
<rect x="1346.25" y="293.1" width="14.3" height="14" fill="none" stroke="#fff" stroke-width="1.4"/>
<rect x="1330.75" y="312.5" width="14.3" height="14" fill="none" stroke="#fff" stroke-width="1.4"/>
<rect x="1313.85" y="334.8" width="14.3" height="14" fill="none" stroke="#fff" stroke-width="1.4"/>
<rect x="1296.95" y="357.3" width="14.3" height="14" fill="none" stroke="#fff" stroke-width="1.4"/>
<rect x="1210.25" y="379.9" width="14.3" height="14" fill="none" stroke="#fff" stroke-width="1.4"/>
<rect x="1224.25" y="379.9" width="14.3" height="14" fill="none" stroke="#fff" stroke-width="1.4"/>
<rect x="1238.25" y="379.9" width="14.3" height="14" fill="none" stroke="#fff" stroke-width="1.4"/>
<rect x="1252.25" y="379.9" width="14.3" height="14" fill="none" stroke="#fff" stroke-width="1.4"/>
<rect x="1266.05" y="379.9" width="14.3" height="14" fill="none" stroke="#fff" stroke-width="1.4"/>
<rect x="1149.85" y="546.4" width="14.3" height="14" fill="none" stroke="#fff" stroke-width="1.4"/>
<rect x="1177.85" y="510.4" width="14.3" height="14" fill="none" stroke="#fff" stroke-width="1.4"/>
<rect x="1203.25" y="478" width="14.3" height="14" fill="none" stroke="#fff" stroke-width="1.4"/>
<rect x="1228.25" y="445.5" width="14.3" height="14" fill="none" stroke="#fff" stroke-width="1.4"/>
<rect x="1253.25" y="413.6" width="14.3" height="14" fill="none" stroke="#fff" stroke-width="1.4"/>
<rect x="1281.35" y="400.9" width="14.3" height="14" fill="none" stroke="#fff" stroke-width="1.4"/>
<rect x="1282.85" y="423.4" width="14.3" height="14" fill="none" stroke="#fff" stroke-width="1.4"/>
<rect x="1282.85" y="442.9" width="14.3" height="14" fill="none" stroke="#fff" stroke-width="1.4"/>
<rect x="1284.15" y="465.3" width="14.3" height="14" fill="none" stroke="#fff" stroke-width="1.4"/>
<rect x="1285.85" y="488" width="14.3" height="14" fill="none" stroke="#fff" stroke-width="1.4"/>
<rect x="1280.9" y="380.2" width="13.2" height="13.4" fill="rgba(255,255,255,0.42)" stroke="#000" stroke-width="1.8"/>
<circle cx="1327.9" cy="381" r="4.4" fill="#c08a8a" stroke="#000" stroke-width="1.2"/>
<circle cx="1379.9" cy="381" r="4.4" fill="#c06464" stroke="#000" stroke-width="1.2"/>
<circle cx="1434.9" cy="381" r="4.4" fill="#c04848" stroke="#000" stroke-width="1.2"/>
<circle cx="1492" cy="381" r="4.4" fill="#c03434" stroke="#000" stroke-width="1.2"/>
<circle cx="1549.9" cy="381" r="4.4" fill="#b80000" stroke="#000" stroke-width="1.2"/>
<circle cx="1282" cy="207.1" r="4.4" fill="#0c8c0c" stroke="#000" stroke-width="1.2"/>
<circle cx="1279.9" cy="240.8" r="4.4" fill="#4ca04c" stroke="#000" stroke-width="1.2"/>
<circle cx="1279.9" cy="275.7" r="4.4" fill="#60a460" stroke="#000" stroke-width="1.2"/>
<circle cx="1279" cy="309.9" r="4.4" fill="#7eb07e" stroke="#000" stroke-width="1.2"/>
<circle cx="1279" cy="343.1" r="4.4" fill="#92b492" stroke="#000" stroke-width="1.2"/>
<circle cx="1364.4" cy="260.4" r="4.4" fill="#c8b818" stroke="#000" stroke-width="1.2"/>
<circle cx="1348.1" cy="284.5" r="4.4" fill="#b8b050" stroke="#000" stroke-width="1.2"/>
<circle cx="1331" cy="308" r="4.4" fill="#b0a864" stroke="#000" stroke-width="1.2"/>
<circle cx="1314" cy="331.8" r="4.4" fill="#b6b080" stroke="#000" stroke-width="1.2"/>
<circle cx="1295.9" cy="355.8" r="4.4" fill="#b2b296" stroke="#000" stroke-width="1.2"/>
<circle cx="1218.7" cy="382.9" r="4.4" fill="#20c0c0" stroke="#000" stroke-width="1.2"/>
<circle cx="1229.9" cy="382.9" r="4.4" fill="#60c0b8" stroke="#000" stroke-width="1.2"/>
<circle cx="1240.9" cy="382.9" r="4.4" fill="#80c0b8" stroke="#000" stroke-width="1.2"/>
<circle cx="1251.9" cy="382.9" r="4.4" fill="#90c0b8" stroke="#000" stroke-width="1.2"/>
<circle cx="1265" cy="382.9" r="4.4" fill="#a0c0b8" stroke="#000" stroke-width="1.2"/>
<circle cx="1157.9" cy="549.6" r="4.4" fill="#0000a8" stroke="#000" stroke-width="1.2"/>
<circle cx="1178.8" cy="519.9" r="4.4" fill="#4848b8" stroke="#000" stroke-width="1.2"/>
<circle cx="1202.8" cy="485.7" r="4.4" fill="#6868b8" stroke="#000" stroke-width="1.2"/>
<circle cx="1227" cy="453.8" r="4.4" fill="#8888c0" stroke="#000" stroke-width="1.2"/>
<circle cx="1250.8" cy="420.4" r="4.4" fill="#a0a0b8" stroke="#000" stroke-width="1.2"/>
<circle cx="1277.5" cy="407.8" r="4.4" fill="#c0a4c0" stroke="#000" stroke-width="1.2"/>
<circle cx="1276.1" cy="432" r="4.4" fill="#c080b8" stroke="#000" stroke-width="1.2"/>
<circle cx="1276.1" cy="450.9" r="4.4" fill="#c068b8" stroke="#000" stroke-width="1.2"/>
<circle cx="1276.1" cy="476.4" r="4.4" fill="#c048b8" stroke="#000" stroke-width="1.2"/>
<circle cx="1276.1" cy="498.9" r="4.4" fill="#c000b8" stroke="#000" stroke-width="1.2"/>
<circle cx="1275" cy="386.9" r="4.5" fill="#fff" stroke="#000" stroke-width="1.2"/>
<rect x="1513.9" y="69.4" width="194.1" height="193.6" fill="#343434"/>
<g clip-path="url(#ci)"><rect x="1516.2" y="70" width="191" height="3.6" fill="url(#i0)"/><rect x="1516.2" y="73" width="191" height="3.6" fill="url(#i1)"/><rect x="1516.2" y="76" width="191" height="3.6" fill="url(#i2)"/><rect x="1516.2" y="79" width="191" height="3.6" fill="url(#i3)"/><rect x="1516.2" y="82" width="191" height="3.6" fill="url(#i4)"/><rect x="1516.2" y="85" width="191" height="3.6" fill="url(#i5)"/><rect x="1516.2" y="88" width="191" height="3.6" fill="url(#i6)"/><rect x="1516.2" y="91" width="191" height="3.6" fill="url(#i7)"/><rect x="1516.2" y="94" width="191" height="3.6" fill="url(#i8)"/><rect x="1516.2" y="97" width="191" height="3.6" fill="url(#i9)"/><rect x="1516.2" y="100" width="191" height="3.6" fill="url(#i10)"/><rect x="1516.2" y="103" width="191" height="3.6" fill="url(#i11)"/><rect x="1516.2" y="106" width="191" height="3.6" fill="url(#i12)"/><rect x="1516.2" y="109" width="191" height="3.6" fill="url(#i13)"/><rect x="1516.2" y="112" width="191" height="3.6" fill="url(#i14)"/><rect x="1516.2" y="115" width="191" height="3.6" fill="url(#i15)"/><rect x="1516.2" y="118" width="191" height="3.6" fill="url(#i16)"/><rect x="1516.2" y="121" width="191" height="3.6" fill="url(#i17)"/><rect x="1516.2" y="124" width="191" height="3.6" fill="url(#i18)"/><rect x="1516.2" y="127" width="191" height="3.6" fill="url(#i19)"/><rect x="1516.2" y="130" width="191" height="3.6" fill="url(#i20)"/><rect x="1516.2" y="133" width="191" height="3.6" fill="url(#i21)"/><rect x="1516.2" y="136" width="191" height="3.6" fill="url(#i22)"/><rect x="1516.2" y="139" width="191" height="3.6" fill="url(#i23)"/><rect x="1516.2" y="142" width="191" height="3.6" fill="url(#i24)"/><rect x="1516.2" y="145" width="191" height="3.6" fill="url(#i25)"/><rect x="1516.2" y="148" width="191" height="3.6" fill="url(#i26)"/><rect x="1516.2" y="151" width="191" height="3.6" fill="url(#i27)"/><rect x="1516.2" y="154" width="191" height="3.6" fill="url(#i28)"/><rect x="1516.2" y="157" width="191" height="3.6" fill="url(#i29)"/><rect x="1516.2" y="160" width="191" height="3.6" fill="url(#i30)"/><rect x="1516.2" y="163" width="191" height="3.6" fill="url(#i31)"/><rect x="1516.2" y="166" width="191" height="3.6" fill="url(#i32)"/><rect x="1516.2" y="169" width="191" height="3.6" fill="url(#i33)"/><rect x="1516.2" y="172" width="191" height="3.6" fill="url(#i34)"/><rect x="1516.2" y="175" width="191" height="3.6" fill="url(#i35)"/><rect x="1516.2" y="178" width="191" height="3.6" fill="url(#i36)"/><rect x="1516.2" y="181" width="191" height="3.6" fill="url(#i37)"/><rect x="1516.2" y="184" width="191" height="3.6" fill="url(#i38)"/><rect x="1516.2" y="187" width="191" height="3.6" fill="url(#i39)"/><rect x="1516.2" y="190" width="191" height="3.6" fill="url(#i40)"/><rect x="1516.2" y="193" width="191" height="3.6" fill="url(#i41)"/><rect x="1516.2" y="196" width="191" height="3.6" fill="url(#i42)"/><rect x="1516.2" y="199" width="191" height="3.6" fill="url(#i43)"/><rect x="1516.2" y="202" width="191" height="3.6" fill="url(#i44)"/><rect x="1516.2" y="205" width="191" height="3.6" fill="url(#i45)"/><rect x="1516.2" y="208" width="191" height="3.6" fill="url(#i46)"/><rect x="1516.2" y="211" width="191" height="3.6" fill="url(#i47)"/><rect x="1516.2" y="214" width="191" height="3.6" fill="url(#i48)"/><rect x="1516.2" y="217" width="191" height="3.6" fill="url(#i49)"/><rect x="1516.2" y="220" width="191" height="3.6" fill="url(#i50)"/><rect x="1516.2" y="223" width="191" height="3.6" fill="url(#i51)"/><rect x="1516.2" y="226" width="191" height="3.6" fill="url(#i52)"/><rect x="1516.2" y="229" width="191" height="3.6" fill="url(#i53)"/><rect x="1516.2" y="232" width="191" height="3.6" fill="url(#i54)"/><rect x="1516.2" y="235" width="191" height="3.6" fill="url(#i55)"/><rect x="1516.2" y="238" width="191" height="3.6" fill="url(#i56)"/><rect x="1516.2" y="241" width="191" height="3.6" fill="url(#i57)"/><rect x="1516.2" y="244" width="191" height="3.6" fill="url(#i58)"/><rect x="1516.2" y="247" width="191" height="3.6" fill="url(#i59)"/><rect x="1516.2" y="250" width="191" height="3.6" fill="url(#i60)"/><rect x="1516.2" y="253" width="191" height="3.6" fill="url(#i61)"/><rect x="1516.2" y="256" width="191" height="3.6" fill="url(#i62)"/><rect x="1516.2" y="259" width="191" height="1.2" fill="url(#i63)"/>
<path d="M1822.5 332.2 L1400.9 -2.6 L1800.9 -402.6 L2222.5 -67.8Z" fill="#000" fill-opacity="0.4"/>
<rect x="1604.1" y="157.8" width="14.6" height="13.6" fill="none" stroke="#fff" stroke-width="1.4"/>
<circle cx="1586" cy="84" r="4.4" fill="#c8b818" stroke="#000" stroke-width="1.2"/>
<circle cx="1520.3" cy="203.4" r="4.4" fill="#b8b050" stroke="#000" stroke-width="1.2"/>
</g>
<rect x="1516.7" y="70.3" width="190.2" height="188.8" fill="none" stroke="#a4a4a4" stroke-width="1.3"/>
</svg>
</body></html>
